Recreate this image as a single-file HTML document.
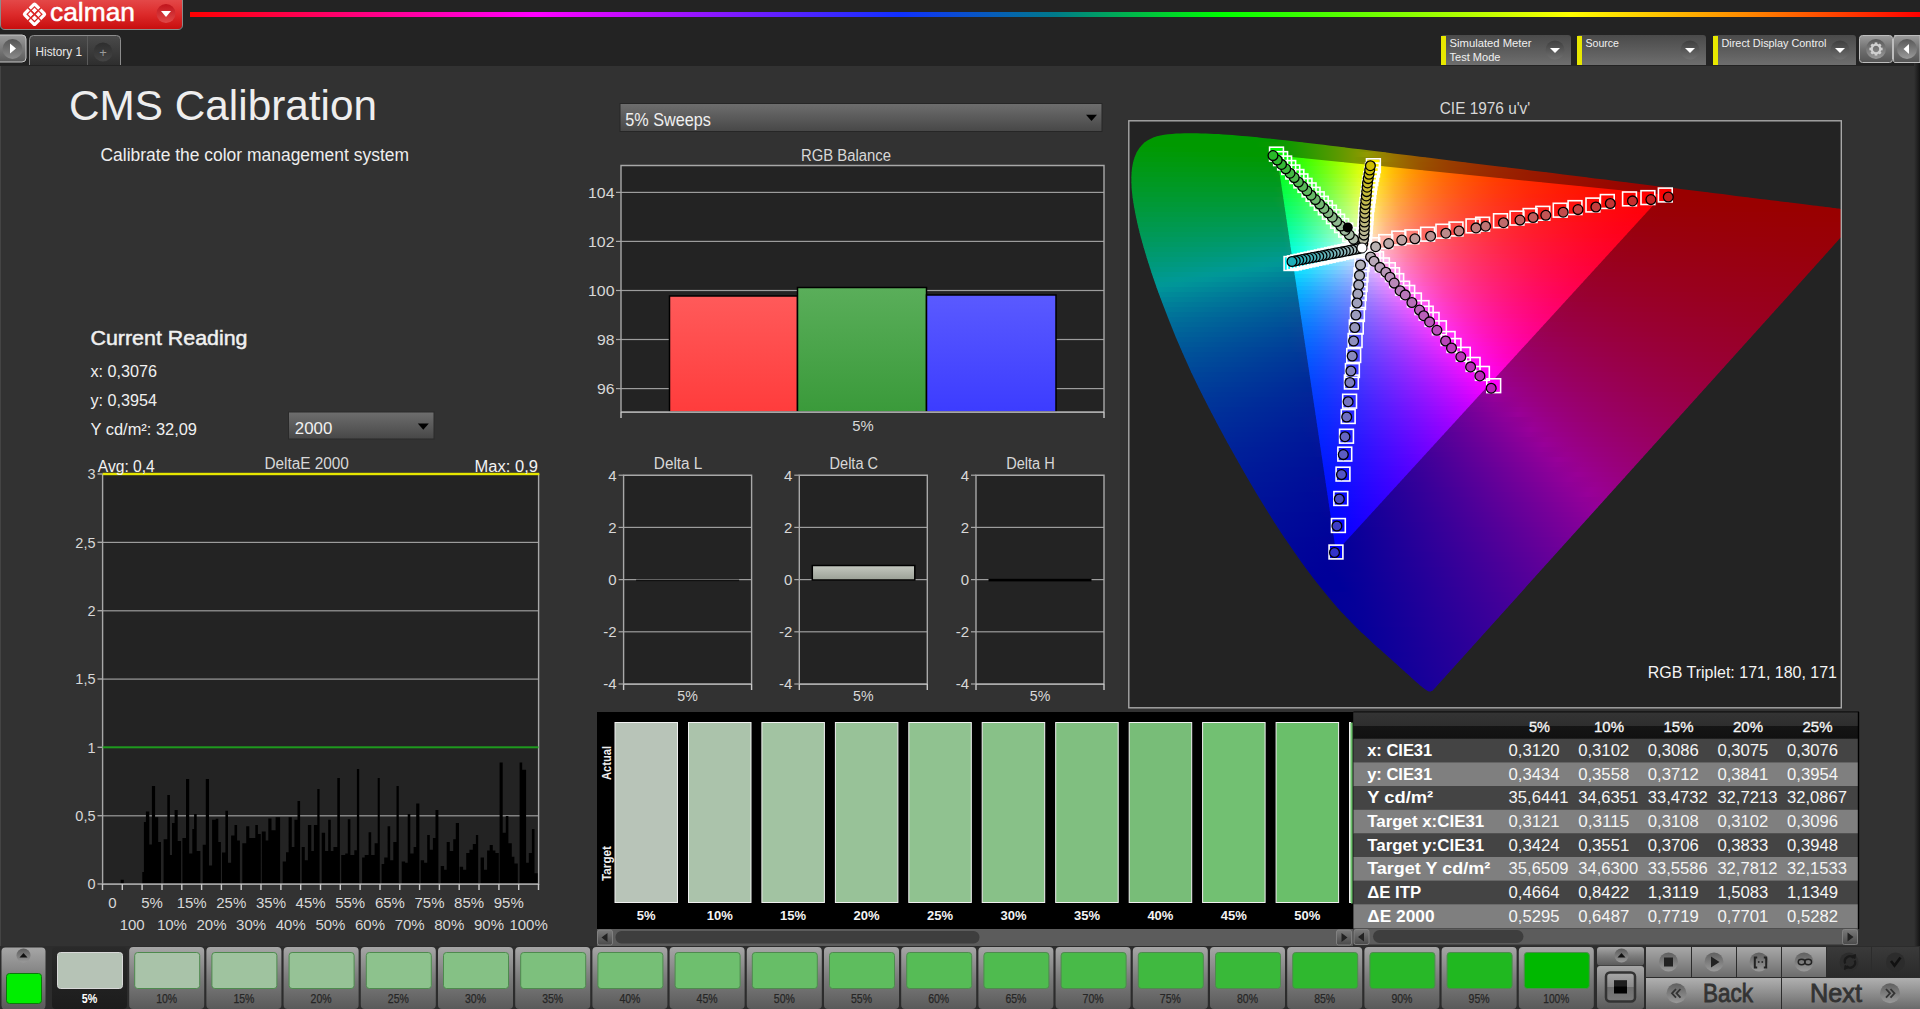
<!DOCTYPE html>
<html><head><meta charset="utf-8"><style>
html,body{margin:0;padding:0;background:#333;overflow:hidden;width:1920px;height:1009px}
svg{display:block;font-family:"Liberation Sans", sans-serif}
</style></head><body>
<svg width="1920" height="1009" viewBox="0 0 1920 1009">
<defs><linearGradient id="gEdge" x1="0" y1="0" x2="1" y2="0"><stop offset="0" stop-color="#323232"/><stop offset="1" stop-color="#141414"/></linearGradient><linearGradient id="gLogo" x1="0" y1="0" x2="0" y2="1"><stop offset="0" stop-color="#e44848"/><stop offset="0.5" stop-color="#dc2a2a"/><stop offset="1" stop-color="#c80e0e"/></linearGradient><linearGradient id="gLogoBtn" x1="0" y1="0" x2="0" y2="1"><stop offset="0" stop-color="#c0141c"/><stop offset="1" stop-color="#e04848"/></linearGradient><linearGradient id="gRain" x1="0" y1="0" x2="1" y2="0"><stop offset="0" stop-color="#ff0000"/><stop offset="0.2" stop-color="#ff00ff"/><stop offset="0.41" stop-color="#1030ff"/><stop offset="0.5" stop-color="#007a8a"/><stop offset="0.597" stop-color="#00ff00"/><stop offset="0.798" stop-color="#ffff00"/><stop offset="0.9" stop-color="#ff8800"/><stop offset="1" stop-color="#ff0000"/></linearGradient><linearGradient id="gPlayBtn" x1="0" y1="0" x2="0" y2="1"><stop offset="0" stop-color="#9a9a9a"/><stop offset="1" stop-color="#5a5a5a"/></linearGradient><linearGradient id="gPlayCirc" x1="0" y1="0" x2="0" y2="1"><stop offset="0" stop-color="#555"/><stop offset="1" stop-color="#8a8a8a"/></linearGradient><linearGradient id="gTab" x1="0" y1="0" x2="0" y2="1"><stop offset="0" stop-color="#4a4a4a"/><stop offset="1" stop-color="#2e2e2e"/></linearGradient><linearGradient id="gPlus" x1="0" y1="0" x2="0" y2="1"><stop offset="0" stop-color="#2e2e2e"/><stop offset="1" stop-color="#444"/></linearGradient><linearGradient id="gDD" x1="0" y1="0" x2="0" y2="1"><stop offset="0" stop-color="#4a4a4a"/><stop offset="1" stop-color="#6e6e6e"/></linearGradient><linearGradient id="gDDc" x1="0" y1="0" x2="0" y2="1"><stop offset="0" stop-color="#3e3e3e"/><stop offset="1" stop-color="#707070"/></linearGradient><linearGradient id="gGearBtn" x1="0" y1="0" x2="0" y2="1"><stop offset="0" stop-color="#9c9c9c"/><stop offset="0.5" stop-color="#707070"/><stop offset="1" stop-color="#555555"/></linearGradient><linearGradient id="gGearC" x1="0" y1="0" x2="0" y2="1"><stop offset="0" stop-color="#585858"/><stop offset="1" stop-color="#9a9a9a"/></linearGradient><linearGradient id="gDrop" x1="0" y1="0" x2="0" y2="1"><stop offset="0" stop-color="#6e6e6e"/><stop offset="1" stop-color="#474747"/></linearGradient><linearGradient id="gBarR" x1="0" y1="0" x2="0" y2="1"><stop offset="0" stop-color="#ff5a5a"/><stop offset="1" stop-color="#ff3c3c"/></linearGradient><linearGradient id="gBarG" x1="0" y1="0" x2="0" y2="1"><stop offset="0" stop-color="#5aae5a"/><stop offset="1" stop-color="#3a9a3a"/></linearGradient><linearGradient id="gBarB" x1="0" y1="0" x2="0" y2="1"><stop offset="0" stop-color="#5a5aff"/><stop offset="1" stop-color="#3c3cff"/></linearGradient><linearGradient id="gDC" x1="0" y1="0" x2="0" y2="1"><stop offset="0" stop-color="#c4c8c0"/><stop offset="1" stop-color="#9aa096"/></linearGradient><linearGradient id="gSB" x1="0" y1="0" x2="0" y2="1"><stop offset="0" stop-color="#7a7a7a"/><stop offset="1" stop-color="#4a4a4a"/></linearGradient><linearGradient id="gTH" x1="0" y1="0" x2="0" y2="1"><stop offset="0" stop-color="#343434"/><stop offset="0.5" stop-color="#2e2e2e"/><stop offset="0.52" stop-color="#151515"/><stop offset="1" stop-color="#111111"/></linearGradient><clipPath id="cLoc"><path d="M1432.3,690.9 L1432.3,690.9 L1432.2,690.9 L1432.1,690.8 L1432.1,690.8 L1432.0,690.9 L1431.9,690.9 L1431.8,691.0 L1431.7,691.0 L1431.6,691.0 L1431.5,691.0 L1431.4,691.0 L1431.3,691.0 L1431.2,691.1 L1431.1,691.2 L1431.1,691.3 L1431.0,691.4 L1430.9,691.5 L1430.7,691.5 L1430.6,691.5 L1430.4,691.5 L1430.2,691.5 L1430.0,691.5 L1429.7,691.4 L1429.5,691.4 L1429.3,691.4 L1429.1,691.4 L1428.8,691.4 L1428.5,691.3 L1428.2,691.2 L1427.8,691.0 L1427.4,690.8 L1426.8,690.5 L1426.2,690.1 L1425.4,689.6 L1424.6,689.0 L1423.8,688.3 L1422.8,687.6 L1421.9,686.8 L1420.8,685.9 L1419.6,684.9 L1418.3,683.8 L1416.9,682.6 L1415.3,681.2 L1413.7,679.8 L1412.0,678.2 L1410.2,676.6 L1408.3,674.8 L1406.2,672.9 L1404.1,670.9 L1401.8,668.9 L1399.3,666.7 L1396.7,664.3 L1393.8,661.8 L1390.8,659.1 L1387.6,656.3 L1384.3,653.3 L1380.8,650.1 L1377.1,646.9 L1373.3,643.4 L1369.2,639.6 L1364.9,635.6 L1360.4,631.4 L1355.7,626.8 L1350.8,621.8 L1345.7,616.5 L1340.4,611.0 L1334.9,604.8 L1328.8,597.6 L1322.1,589.3 L1314.9,580.2 L1307.3,570.2 L1299.5,559.4 L1291.2,547.6 L1282.6,534.9 L1273.8,521.4 L1264.8,507.1 L1255.6,491.9 L1246.1,475.8 L1236.6,459.1 L1227.2,442.2 L1217.9,424.9 L1208.6,407.2 L1199.6,389.4 L1191.1,371.9 L1183.3,354.6 L1175.9,337.4 L1169.1,320.5 L1162.9,304.5 L1157.2,289.2 L1152.1,274.5 L1147.6,260.5 L1143.7,247.6 L1140.4,235.7 L1137.7,224.7 L1135.5,214.6 L1133.8,205.3 L1132.5,196.8 L1131.7,189.2 L1131.4,182.3 L1131.4,175.9 L1131.8,170.0 L1132.6,164.8 L1133.7,160.0 L1135.2,155.7 L1137.0,151.8 L1139.1,148.4 L1141.5,145.4 L1144.2,142.8 L1147.0,140.7 L1150.2,138.9 L1153.5,137.5 L1156.9,136.3 L1160.5,135.4 L1164.3,134.7 L1168.2,134.3 L1172.1,133.9 L1176.1,133.6 L1180.3,133.4 L1184.5,133.3 L1188.7,133.3 L1192.8,133.3 L1197.0,133.3 L1201.2,133.4 L1205.5,133.5 L1209.8,133.7 L1214.1,133.9 L1218.5,134.1 L1223.0,134.4 L1227.6,134.7 L1232.3,135.0 L1237.0,135.4 L1241.9,135.9 L1246.9,136.3 L1252.0,136.8 L1257.1,137.3 L1262.5,137.9 L1267.9,138.4 L1273.5,139.0 L1279.2,139.7 L1285.1,140.3 L1291.1,141.0 L1297.2,141.7 L1303.6,142.5 L1310.1,143.2 L1316.7,144.0 L1323.6,144.8 L1330.6,145.7 L1337.7,146.5 L1345.1,147.4 L1352.7,148.4 L1360.4,149.3 L1368.3,150.3 L1376.5,151.3 L1384.8,152.3 L1393.3,153.4 L1402.0,154.4 L1410.9,155.5 L1420.0,156.7 L1429.3,157.8 L1438.7,159.0 L1448.4,160.2 L1458.2,161.4 L1468.2,162.7 L1478.3,163.9 L1488.6,165.2 L1499.0,166.5 L1509.6,167.8 L1520.2,169.1 L1530.9,170.4 L1541.7,171.8 L1552.6,173.1 L1563.3,174.5 L1573.9,175.8 L1584.3,177.1 L1594.7,178.4 L1605.0,179.6 L1615.4,180.9 L1625.7,182.2 L1635.8,183.5 L1645.6,184.7 L1655.2,185.9 L1664.5,187.0 L1673.5,188.1 L1682.3,189.2 L1690.9,190.3 L1699.1,191.3 L1707.1,192.3 L1714.8,193.2 L1722.2,194.1 L1729.2,195.0 L1736.0,195.9 L1742.5,196.7 L1748.7,197.4 L1754.6,198.2 L1760.3,198.9 L1765.7,199.5 L1770.9,200.2 L1775.9,200.8 L1780.6,201.4 L1785.2,202.0 L1789.7,202.5 L1794.0,203.0 L1798.2,203.6 L1802.2,204.1 L1806.0,204.5 L1809.7,205.0 L1813.2,205.4 L1816.5,205.8 L1819.7,206.2 L1822.7,206.6 L1825.6,207.0 L1828.2,207.3 L1830.7,207.6 L1832.9,207.9 L1835.0,208.1 L1837.1,208.4 L1839.0,208.6 L1840.7,208.9 L1842.4,209.1 L1844.0,209.3 L1845.5,209.4 L1846.8,209.6 L1848.1,209.8 L1849.2,209.9 L1850.2,210.0 L1851.1,210.1 L1851.9,210.2 L1852.7,210.3 L1853.5,210.4 L1854.2,210.5 L1854.9,210.6 L1855.5,210.7 L1856.1,210.8 L1856.7,210.8 L1857.2,210.9 L1857.8,211.0 L1858.3,211.0 L1858.8,211.1 L1859.4,211.2 L1860.0,211.2 L1860.8,211.3 L1861.6,211.5 L1862.5,211.6 L1863.1,211.6 L1863.5,211.7 L1863.8,211.7 L1863.9,211.7 L1864.0,211.7 Z"/></clipPath><clipPath id="cPlot"><rect x="1129" y="121" width="712.5" height="587"/></clipPath><clipPath id="cTri"><path d="M1277.0,155.5 L1663.0,194.5 L1336.0,552.0 Z"/></clipPath><linearGradient id="a0" gradientUnits="userSpaceOnUse" x1="1151.0" y1="0" x2="1257.6" y2="0"><stop offset="0" stop-color="#009900"/><stop offset="0.25" stop-color="#009900"/><stop offset="0.5" stop-color="#009900"/><stop offset="0.75" stop-color="#009900"/><stop offset="1" stop-color="#009900"/></linearGradient><linearGradient id="a1" gradientUnits="userSpaceOnUse" x1="1141.3" y1="0" x2="1303.3" y2="0"><stop offset="0" stop-color="#009900"/><stop offset="0.167" stop-color="#009900"/><stop offset="0.333" stop-color="#009900"/><stop offset="0.5" stop-color="#009900"/><stop offset="0.667" stop-color="#009900"/><stop offset="0.833" stop-color="#029900"/><stop offset="1" stop-color="#269900"/></linearGradient><linearGradient id="a2" gradientUnits="userSpaceOnUse" x1="1136.3" y1="0" x2="1345.1" y2="0"><stop offset="0" stop-color="#009901"/><stop offset="0.143" stop-color="#009900"/><stop offset="0.286" stop-color="#009900"/><stop offset="0.429" stop-color="#009900"/><stop offset="0.571" stop-color="#009900"/><stop offset="0.714" stop-color="#0d9900"/><stop offset="0.857" stop-color="#369900"/><stop offset="1" stop-color="#679900"/></linearGradient><linearGradient id="a3" gradientUnits="userSpaceOnUse" x1="1132.9" y1="0" x2="1385.9" y2="0"><stop offset="0" stop-color="#009906"/><stop offset="0.111" stop-color="#009904"/><stop offset="0.222" stop-color="#009901"/><stop offset="0.333" stop-color="#009900"/><stop offset="0.444" stop-color="#009900"/><stop offset="0.556" stop-color="#009900"/><stop offset="0.667" stop-color="#229900"/><stop offset="0.778" stop-color="#4d9900"/><stop offset="0.889" stop-color="#7e9900"/><stop offset="1" stop-color="#997f00"/></linearGradient><linearGradient id="a4" gradientUnits="userSpaceOnUse" x1="1130.7" y1="0" x2="1426.2" y2="0"><stop offset="0" stop-color="#00990a"/><stop offset="0.1" stop-color="#009908"/><stop offset="0.2" stop-color="#009906"/><stop offset="0.3" stop-color="#009903"/><stop offset="0.4" stop-color="#009900"/><stop offset="0.5" stop-color="#029900"/><stop offset="0.6" stop-color="#2b9900"/><stop offset="0.7" stop-color="#5a9900"/><stop offset="0.8" stop-color="#919900"/><stop offset="0.9" stop-color="#996f00"/><stop offset="1" stop-color="#995000"/></linearGradient><linearGradient id="a5" gradientUnits="userSpaceOnUse" x1="1129.2" y1="0" x2="1466.5" y2="0"><stop offset="0" stop-color="#00990e"/><stop offset="0.0833" stop-color="#00990c"/><stop offset="0.167" stop-color="#00990b"/><stop offset="0.25" stop-color="#009908"/><stop offset="0.333" stop-color="#009906"/><stop offset="0.417" stop-color="#009903"/><stop offset="0.5" stop-color="#1b9900"/><stop offset="0.583" stop-color="#469900"/><stop offset="0.667" stop-color="#789900"/><stop offset="0.75" stop-color="#998300"/><stop offset="0.833" stop-color="#995e00"/><stop offset="0.917" stop-color="#994600"/><stop offset="1" stop-color="#993500"/></linearGradient><linearGradient id="a6" gradientUnits="userSpaceOnUse" x1="1129.0" y1="0" x2="1506.9" y2="0"><stop offset="0" stop-color="#009912"/><stop offset="0.0769" stop-color="#009911"/><stop offset="0.154" stop-color="#00990f"/><stop offset="0.231" stop-color="#00990d"/><stop offset="0.308" stop-color="#00990b"/><stop offset="0.385" stop-color="#009909"/><stop offset="0.462" stop-color="#239906"/><stop offset="0.538" stop-color="#519902"/><stop offset="0.615" stop-color="#879900"/><stop offset="0.692" stop-color="#997500"/><stop offset="0.769" stop-color="#995400"/><stop offset="0.846" stop-color="#993e00"/><stop offset="0.923" stop-color="#992f00"/><stop offset="1" stop-color="#992300"/></linearGradient><linearGradient id="a7" gradientUnits="userSpaceOnUse" x1="1129.0" y1="0" x2="1547.1" y2="0"><stop offset="0" stop-color="#009917"/><stop offset="0.0714" stop-color="#009915"/><stop offset="0.143" stop-color="#009914"/><stop offset="0.214" stop-color="#009912"/><stop offset="0.286" stop-color="#009910"/><stop offset="0.357" stop-color="#00990e"/><stop offset="0.429" stop-color="#29990b"/><stop offset="0.5" stop-color="#5b9908"/><stop offset="0.571" stop-color="#959905"/><stop offset="0.643" stop-color="#996a00"/><stop offset="0.714" stop-color="#994c00"/><stop offset="0.786" stop-color="#993800"/><stop offset="0.857" stop-color="#992a00"/><stop offset="0.929" stop-color="#991f00"/><stop offset="1" stop-color="#991700"/></linearGradient><linearGradient id="a8" gradientUnits="userSpaceOnUse" x1="1129.0" y1="0" x2="1587.4" y2="0"><stop offset="0" stop-color="#00991b"/><stop offset="0.0625" stop-color="#00991a"/><stop offset="0.125" stop-color="#009919"/><stop offset="0.188" stop-color="#009917"/><stop offset="0.25" stop-color="#009916"/><stop offset="0.312" stop-color="#009914"/><stop offset="0.375" stop-color="#1e9912"/><stop offset="0.438" stop-color="#4c9910"/><stop offset="0.5" stop-color="#82990d"/><stop offset="0.562" stop-color="#997908"/><stop offset="0.625" stop-color="#995603"/><stop offset="0.688" stop-color="#993f01"/><stop offset="0.75" stop-color="#992f00"/><stop offset="0.812" stop-color="#992400"/><stop offset="0.875" stop-color="#991a00"/><stop offset="0.938" stop-color="#991300"/><stop offset="1" stop-color="#990d00"/></linearGradient><linearGradient id="a9" gradientUnits="userSpaceOnUse" x1="1129.0" y1="0" x2="1627.7" y2="0"><stop offset="0" stop-color="#00991f"/><stop offset="0.0588" stop-color="#00991f"/><stop offset="0.118" stop-color="#00991e"/><stop offset="0.176" stop-color="#00991d"/><stop offset="0.235" stop-color="#00991b"/><stop offset="0.294" stop-color="#00991a"/><stop offset="0.353" stop-color="#239918"/><stop offset="0.412" stop-color="#549916"/><stop offset="0.471" stop-color="#8e9914"/><stop offset="0.529" stop-color="#996f0d"/><stop offset="0.588" stop-color="#994f07"/><stop offset="0.647" stop-color="#993a04"/><stop offset="0.706" stop-color="#992b01"/><stop offset="0.765" stop-color="#992000"/><stop offset="0.824" stop-color="#991700"/><stop offset="0.882" stop-color="#991000"/><stop offset="0.941" stop-color="#990b00"/><stop offset="1" stop-color="#990600"/></linearGradient><linearGradient id="a10" gradientUnits="userSpaceOnUse" x1="1129.0" y1="0" x2="1668.1" y2="0"><stop offset="0" stop-color="#009924"/><stop offset="0.0556" stop-color="#009923"/><stop offset="0.111" stop-color="#009923"/><stop offset="0.167" stop-color="#009922"/><stop offset="0.222" stop-color="#009921"/><stop offset="0.278" stop-color="#009920"/><stop offset="0.333" stop-color="#28991f"/><stop offset="0.389" stop-color="#5c991d"/><stop offset="0.444" stop-color="#99981c"/><stop offset="0.5" stop-color="#996611"/><stop offset="0.556" stop-color="#99490b"/><stop offset="0.611" stop-color="#993507"/><stop offset="0.667" stop-color="#992704"/><stop offset="0.722" stop-color="#991c02"/><stop offset="0.778" stop-color="#991400"/><stop offset="0.833" stop-color="#990e00"/><stop offset="0.889" stop-color="#990800"/><stop offset="0.944" stop-color="#990400"/><stop offset="1" stop-color="#990000"/></linearGradient><linearGradient id="a11" gradientUnits="userSpaceOnUse" x1="1129.0" y1="0" x2="1708.5" y2="0"><stop offset="0" stop-color="#009928"/><stop offset="0.05" stop-color="#009928"/><stop offset="0.1" stop-color="#009928"/><stop offset="0.15" stop-color="#009927"/><stop offset="0.2" stop-color="#009927"/><stop offset="0.25" stop-color="#009926"/><stop offset="0.3" stop-color="#1f9926"/><stop offset="0.35" stop-color="#4f9925"/><stop offset="0.4" stop-color="#899924"/><stop offset="0.45" stop-color="#99711a"/><stop offset="0.5" stop-color="#995012"/><stop offset="0.55" stop-color="#993a0c"/><stop offset="0.6" stop-color="#992b08"/><stop offset="0.65" stop-color="#992006"/><stop offset="0.7" stop-color="#991703"/><stop offset="0.75" stop-color="#991002"/><stop offset="0.8" stop-color="#990a00"/><stop offset="0.85" stop-color="#990600"/><stop offset="0.9" stop-color="#990200"/><stop offset="0.95" stop-color="#990000"/><stop offset="1" stop-color="#990000"/></linearGradient><linearGradient id="a12" gradientUnits="userSpaceOnUse" x1="1129.0" y1="0" x2="1748.8" y2="0"><stop offset="0" stop-color="#00992d"/><stop offset="0.0476" stop-color="#00992d"/><stop offset="0.0952" stop-color="#00992d"/><stop offset="0.143" stop-color="#00992d"/><stop offset="0.19" stop-color="#00992d"/><stop offset="0.238" stop-color="#00992d"/><stop offset="0.286" stop-color="#23992c"/><stop offset="0.333" stop-color="#56992c"/><stop offset="0.381" stop-color="#93992c"/><stop offset="0.429" stop-color="#99691e"/><stop offset="0.476" stop-color="#994a15"/><stop offset="0.524" stop-color="#99360f"/><stop offset="0.571" stop-color="#99270b"/><stop offset="0.619" stop-color="#991d08"/><stop offset="0.667" stop-color="#991405"/><stop offset="0.714" stop-color="#990e04"/><stop offset="0.762" stop-color="#990802"/><stop offset="0.81" stop-color="#990401"/><stop offset="0.857" stop-color="#990000"/><stop offset="0.905" stop-color="#990000"/><stop offset="0.952" stop-color="#990000"/><stop offset="1" stop-color="#990000"/></linearGradient><linearGradient id="a13" gradientUnits="userSpaceOnUse" x1="1129.0" y1="0" x2="1789.2" y2="0"><stop offset="0" stop-color="#009932"/><stop offset="0.0435" stop-color="#009932"/><stop offset="0.087" stop-color="#009932"/><stop offset="0.13" stop-color="#009932"/><stop offset="0.174" stop-color="#009933"/><stop offset="0.217" stop-color="#009933"/><stop offset="0.261" stop-color="#1b9933"/><stop offset="0.304" stop-color="#4b9934"/><stop offset="0.348" stop-color="#869934"/><stop offset="0.391" stop-color="#997328"/><stop offset="0.435" stop-color="#99501c"/><stop offset="0.478" stop-color="#993a15"/><stop offset="0.522" stop-color="#992b10"/><stop offset="0.565" stop-color="#991f0c"/><stop offset="0.609" stop-color="#991709"/><stop offset="0.652" stop-color="#991007"/><stop offset="0.696" stop-color="#990a05"/><stop offset="0.739" stop-color="#990503"/><stop offset="0.783" stop-color="#990102"/><stop offset="0.826" stop-color="#990001"/><stop offset="0.87" stop-color="#990000"/><stop offset="0.913" stop-color="#990000"/><stop offset="0.957" stop-color="#990000"/><stop offset="1" stop-color="#990000"/></linearGradient><linearGradient id="a14" gradientUnits="userSpaceOnUse" x1="1129.3" y1="0" x2="1829.4" y2="0"><stop offset="0" stop-color="#009937"/><stop offset="0.0417" stop-color="#009937"/><stop offset="0.0833" stop-color="#009938"/><stop offset="0.125" stop-color="#009938"/><stop offset="0.167" stop-color="#009939"/><stop offset="0.208" stop-color="#00993a"/><stop offset="0.25" stop-color="#1f993b"/><stop offset="0.292" stop-color="#52993c"/><stop offset="0.333" stop-color="#90993d"/><stop offset="0.375" stop-color="#996b2c"/><stop offset="0.417" stop-color="#994b20"/><stop offset="0.458" stop-color="#993618"/><stop offset="0.5" stop-color="#992712"/><stop offset="0.542" stop-color="#991c0e"/><stop offset="0.583" stop-color="#99140b"/><stop offset="0.625" stop-color="#990d09"/><stop offset="0.667" stop-color="#990806"/><stop offset="0.708" stop-color="#990405"/><stop offset="0.75" stop-color="#990003"/><stop offset="0.792" stop-color="#990002"/><stop offset="0.833" stop-color="#990001"/><stop offset="0.875" stop-color="#990000"/><stop offset="0.917" stop-color="#990000"/><stop offset="0.958" stop-color="#990000"/><stop offset="1" stop-color="#990000"/></linearGradient><linearGradient id="a15" gradientUnits="userSpaceOnUse" x1="1130.1" y1="0" x2="1841.5" y2="0"><stop offset="0" stop-color="#00993b"/><stop offset="0.0417" stop-color="#00993c"/><stop offset="0.0833" stop-color="#00993d"/><stop offset="0.125" stop-color="#00993e"/><stop offset="0.167" stop-color="#00993f"/><stop offset="0.208" stop-color="#009941"/><stop offset="0.25" stop-color="#249942"/><stop offset="0.292" stop-color="#5a9944"/><stop offset="0.333" stop-color="#999746"/><stop offset="0.375" stop-color="#996330"/><stop offset="0.417" stop-color="#994523"/><stop offset="0.458" stop-color="#99311b"/><stop offset="0.5" stop-color="#992415"/><stop offset="0.542" stop-color="#991910"/><stop offset="0.583" stop-color="#99110d"/><stop offset="0.625" stop-color="#990b0a"/><stop offset="0.667" stop-color="#990608"/><stop offset="0.708" stop-color="#990206"/><stop offset="0.75" stop-color="#990005"/><stop offset="0.792" stop-color="#990003"/><stop offset="0.833" stop-color="#990002"/><stop offset="0.875" stop-color="#990001"/><stop offset="0.917" stop-color="#990000"/><stop offset="0.958" stop-color="#990000"/><stop offset="1" stop-color="#990000"/></linearGradient><linearGradient id="a16" gradientUnits="userSpaceOnUse" x1="1131.0" y1="0" x2="1841.5" y2="0"><stop offset="0" stop-color="#009940"/><stop offset="0.0417" stop-color="#009942"/><stop offset="0.0833" stop-color="#009943"/><stop offset="0.125" stop-color="#009944"/><stop offset="0.167" stop-color="#009946"/><stop offset="0.208" stop-color="#009948"/><stop offset="0.25" stop-color="#24994a"/><stop offset="0.292" stop-color="#5b994d"/><stop offset="0.333" stop-color="#99944e"/><stop offset="0.375" stop-color="#996136"/><stop offset="0.417" stop-color="#994428"/><stop offset="0.458" stop-color="#99301e"/><stop offset="0.5" stop-color="#992318"/><stop offset="0.542" stop-color="#991913"/><stop offset="0.583" stop-color="#99110f"/><stop offset="0.625" stop-color="#990a0d"/><stop offset="0.667" stop-color="#99050a"/><stop offset="0.708" stop-color="#990108"/><stop offset="0.75" stop-color="#990006"/><stop offset="0.792" stop-color="#990005"/><stop offset="0.833" stop-color="#990004"/><stop offset="0.875" stop-color="#990003"/><stop offset="0.917" stop-color="#990002"/><stop offset="0.958" stop-color="#990001"/><stop offset="1" stop-color="#990000"/></linearGradient><linearGradient id="a17" gradientUnits="userSpaceOnUse" x1="1132.0" y1="0" x2="1841.5" y2="0"><stop offset="0" stop-color="#009946"/><stop offset="0.0417" stop-color="#009947"/><stop offset="0.0833" stop-color="#009949"/><stop offset="0.125" stop-color="#00994b"/><stop offset="0.167" stop-color="#00994d"/><stop offset="0.208" stop-color="#00994f"/><stop offset="0.25" stop-color="#259952"/><stop offset="0.292" stop-color="#5d9956"/><stop offset="0.333" stop-color="#999156"/><stop offset="0.375" stop-color="#995f3b"/><stop offset="0.417" stop-color="#99422c"/><stop offset="0.458" stop-color="#992f22"/><stop offset="0.5" stop-color="#99221b"/><stop offset="0.542" stop-color="#991816"/><stop offset="0.583" stop-color="#991012"/><stop offset="0.625" stop-color="#990a0f"/><stop offset="0.667" stop-color="#99050c"/><stop offset="0.708" stop-color="#99010a"/><stop offset="0.75" stop-color="#990008"/><stop offset="0.792" stop-color="#990007"/><stop offset="0.833" stop-color="#990005"/><stop offset="0.875" stop-color="#990004"/><stop offset="0.917" stop-color="#990003"/><stop offset="0.958" stop-color="#990002"/><stop offset="1" stop-color="#990001"/></linearGradient><linearGradient id="a18" gradientUnits="userSpaceOnUse" x1="1133.1" y1="0" x2="1841.5" y2="0"><stop offset="0" stop-color="#00994b"/><stop offset="0.0417" stop-color="#00994d"/><stop offset="0.0833" stop-color="#00994f"/><stop offset="0.125" stop-color="#009951"/><stop offset="0.167" stop-color="#009954"/><stop offset="0.208" stop-color="#009957"/><stop offset="0.25" stop-color="#26995a"/><stop offset="0.292" stop-color="#5f995f"/><stop offset="0.333" stop-color="#998f5e"/><stop offset="0.375" stop-color="#995d41"/><stop offset="0.417" stop-color="#994131"/><stop offset="0.458" stop-color="#992e26"/><stop offset="0.5" stop-color="#99201f"/><stop offset="0.542" stop-color="#991719"/><stop offset="0.583" stop-color="#990f15"/><stop offset="0.625" stop-color="#990911"/><stop offset="0.667" stop-color="#99040e"/><stop offset="0.708" stop-color="#99000c"/><stop offset="0.75" stop-color="#99000a"/><stop offset="0.792" stop-color="#990008"/><stop offset="0.833" stop-color="#990007"/><stop offset="0.875" stop-color="#990006"/><stop offset="0.917" stop-color="#990004"/><stop offset="0.958" stop-color="#990003"/><stop offset="1" stop-color="#990003"/></linearGradient><linearGradient id="a19" gradientUnits="userSpaceOnUse" x1="1134.2" y1="0" x2="1841.5" y2="0"><stop offset="0" stop-color="#009950"/><stop offset="0.0417" stop-color="#009952"/><stop offset="0.0833" stop-color="#009955"/><stop offset="0.125" stop-color="#009958"/><stop offset="0.167" stop-color="#00995b"/><stop offset="0.208" stop-color="#00995f"/><stop offset="0.25" stop-color="#279963"/><stop offset="0.292" stop-color="#619968"/><stop offset="0.333" stop-color="#998c65"/><stop offset="0.375" stop-color="#995b47"/><stop offset="0.417" stop-color="#993f35"/><stop offset="0.458" stop-color="#992c2a"/><stop offset="0.5" stop-color="#991f22"/><stop offset="0.542" stop-color="#99161c"/><stop offset="0.583" stop-color="#990e17"/><stop offset="0.625" stop-color="#990813"/><stop offset="0.667" stop-color="#990310"/><stop offset="0.708" stop-color="#99000e"/><stop offset="0.75" stop-color="#99000c"/><stop offset="0.792" stop-color="#99000a"/><stop offset="0.833" stop-color="#990008"/><stop offset="0.875" stop-color="#990007"/><stop offset="0.917" stop-color="#990006"/><stop offset="0.958" stop-color="#990005"/><stop offset="1" stop-color="#990004"/></linearGradient><linearGradient id="a20" gradientUnits="userSpaceOnUse" x1="1135.5" y1="0" x2="1841.5" y2="0"><stop offset="0" stop-color="#009956"/><stop offset="0.0417" stop-color="#009958"/><stop offset="0.0833" stop-color="#00995b"/><stop offset="0.125" stop-color="#00995e"/><stop offset="0.167" stop-color="#009962"/><stop offset="0.208" stop-color="#009967"/><stop offset="0.25" stop-color="#28996c"/><stop offset="0.292" stop-color="#639972"/><stop offset="0.333" stop-color="#99896d"/><stop offset="0.375" stop-color="#99594d"/><stop offset="0.417" stop-color="#993d3a"/><stop offset="0.458" stop-color="#992b2e"/><stop offset="0.5" stop-color="#991e25"/><stop offset="0.542" stop-color="#99151f"/><stop offset="0.583" stop-color="#990d1a"/><stop offset="0.625" stop-color="#990716"/><stop offset="0.667" stop-color="#990312"/><stop offset="0.708" stop-color="#990010"/><stop offset="0.75" stop-color="#99000d"/><stop offset="0.792" stop-color="#99000c"/><stop offset="0.833" stop-color="#99000a"/><stop offset="0.875" stop-color="#990008"/><stop offset="0.917" stop-color="#990007"/><stop offset="0.958" stop-color="#990006"/><stop offset="1" stop-color="#990005"/></linearGradient><linearGradient id="a21" gradientUnits="userSpaceOnUse" x1="1136.8" y1="0" x2="1841.5" y2="0"><stop offset="0" stop-color="#00995b"/><stop offset="0.0417" stop-color="#00995e"/><stop offset="0.0833" stop-color="#009962"/><stop offset="0.125" stop-color="#009965"/><stop offset="0.167" stop-color="#00996a"/><stop offset="0.208" stop-color="#00996f"/><stop offset="0.25" stop-color="#299975"/><stop offset="0.292" stop-color="#65997d"/><stop offset="0.333" stop-color="#998675"/><stop offset="0.375" stop-color="#995753"/><stop offset="0.417" stop-color="#993c3f"/><stop offset="0.458" stop-color="#992a32"/><stop offset="0.5" stop-color="#991d28"/><stop offset="0.542" stop-color="#991421"/><stop offset="0.583" stop-color="#990c1c"/><stop offset="0.625" stop-color="#990718"/><stop offset="0.667" stop-color="#990214"/><stop offset="0.708" stop-color="#990012"/><stop offset="0.75" stop-color="#99000f"/><stop offset="0.792" stop-color="#99000d"/><stop offset="0.833" stop-color="#99000b"/><stop offset="0.875" stop-color="#99000a"/><stop offset="0.917" stop-color="#990008"/><stop offset="0.958" stop-color="#990007"/><stop offset="1" stop-color="#990006"/></linearGradient><linearGradient id="a22" gradientUnits="userSpaceOnUse" x1="1138.1" y1="0" x2="1840.7" y2="0"><stop offset="0" stop-color="#009961"/><stop offset="0.0417" stop-color="#009964"/><stop offset="0.0833" stop-color="#009968"/><stop offset="0.125" stop-color="#00996d"/><stop offset="0.167" stop-color="#009972"/><stop offset="0.208" stop-color="#009978"/><stop offset="0.25" stop-color="#2a997f"/><stop offset="0.292" stop-color="#679987"/><stop offset="0.333" stop-color="#99837d"/><stop offset="0.375" stop-color="#995559"/><stop offset="0.417" stop-color="#993a43"/><stop offset="0.458" stop-color="#992936"/><stop offset="0.5" stop-color="#991c2c"/><stop offset="0.542" stop-color="#991324"/><stop offset="0.583" stop-color="#990c1f"/><stop offset="0.625" stop-color="#99061a"/><stop offset="0.667" stop-color="#990117"/><stop offset="0.708" stop-color="#990014"/><stop offset="0.75" stop-color="#990011"/><stop offset="0.792" stop-color="#99000f"/><stop offset="0.833" stop-color="#99000d"/><stop offset="0.875" stop-color="#99000b"/><stop offset="0.917" stop-color="#99000a"/><stop offset="0.958" stop-color="#990008"/><stop offset="1" stop-color="#990007"/></linearGradient><linearGradient id="a23" gradientUnits="userSpaceOnUse" x1="1139.5" y1="0" x2="1836.2" y2="0"><stop offset="0" stop-color="#009967"/><stop offset="0.0417" stop-color="#00996b"/><stop offset="0.0833" stop-color="#00996f"/><stop offset="0.125" stop-color="#009974"/><stop offset="0.167" stop-color="#00997a"/><stop offset="0.208" stop-color="#009980"/><stop offset="0.25" stop-color="#299988"/><stop offset="0.292" stop-color="#669992"/><stop offset="0.333" stop-color="#998387"/><stop offset="0.375" stop-color="#995560"/><stop offset="0.417" stop-color="#993a49"/><stop offset="0.458" stop-color="#99283a"/><stop offset="0.5" stop-color="#991c30"/><stop offset="0.542" stop-color="#991328"/><stop offset="0.583" stop-color="#990b22"/><stop offset="0.625" stop-color="#99061d"/><stop offset="0.667" stop-color="#990119"/><stop offset="0.708" stop-color="#990016"/><stop offset="0.75" stop-color="#990013"/><stop offset="0.792" stop-color="#990011"/><stop offset="0.833" stop-color="#99000f"/><stop offset="0.875" stop-color="#99000d"/><stop offset="0.917" stop-color="#99000b"/><stop offset="0.958" stop-color="#99000a"/><stop offset="1" stop-color="#990009"/></linearGradient><linearGradient id="a24" gradientUnits="userSpaceOnUse" x1="1141.0" y1="0" x2="1831.7" y2="0"><stop offset="0" stop-color="#00996d"/><stop offset="0.0417" stop-color="#009971"/><stop offset="0.0833" stop-color="#009976"/><stop offset="0.125" stop-color="#00997b"/><stop offset="0.167" stop-color="#009982"/><stop offset="0.208" stop-color="#009989"/><stop offset="0.25" stop-color="#289992"/><stop offset="0.292" stop-color="#639599"/><stop offset="0.333" stop-color="#998392"/><stop offset="0.375" stop-color="#995468"/><stop offset="0.417" stop-color="#99394f"/><stop offset="0.458" stop-color="#99283f"/><stop offset="0.5" stop-color="#991b34"/><stop offset="0.542" stop-color="#99122b"/><stop offset="0.583" stop-color="#990b25"/><stop offset="0.625" stop-color="#990520"/><stop offset="0.667" stop-color="#99011c"/><stop offset="0.708" stop-color="#990018"/><stop offset="0.75" stop-color="#990015"/><stop offset="0.792" stop-color="#990013"/><stop offset="0.833" stop-color="#990011"/><stop offset="0.875" stop-color="#99000f"/><stop offset="0.917" stop-color="#99000d"/><stop offset="0.958" stop-color="#99000b"/><stop offset="1" stop-color="#99000a"/></linearGradient><linearGradient id="a25" gradientUnits="userSpaceOnUse" x1="1142.6" y1="0" x2="1827.2" y2="0"><stop offset="0" stop-color="#009973"/><stop offset="0.0435" stop-color="#009978"/><stop offset="0.087" stop-color="#00997e"/><stop offset="0.13" stop-color="#009984"/><stop offset="0.174" stop-color="#00998c"/><stop offset="0.217" stop-color="#009994"/><stop offset="0.261" stop-color="#349399"/><stop offset="0.304" stop-color="#6d8899"/><stop offset="0.348" stop-color="#996f8a"/><stop offset="0.391" stop-color="#994864"/><stop offset="0.435" stop-color="#99314d"/><stop offset="0.478" stop-color="#99213e"/><stop offset="0.522" stop-color="#991633"/><stop offset="0.565" stop-color="#990e2b"/><stop offset="0.609" stop-color="#990725"/><stop offset="0.652" stop-color="#990220"/><stop offset="0.696" stop-color="#99001b"/><stop offset="0.739" stop-color="#990018"/><stop offset="0.783" stop-color="#990015"/><stop offset="0.826" stop-color="#990013"/><stop offset="0.87" stop-color="#990011"/><stop offset="0.913" stop-color="#99000f"/><stop offset="0.957" stop-color="#99000d"/><stop offset="1" stop-color="#99000c"/></linearGradient><linearGradient id="a26" gradientUnits="userSpaceOnUse" x1="1144.1" y1="0" x2="1822.7" y2="0"><stop offset="0" stop-color="#00997a"/><stop offset="0.0435" stop-color="#00997f"/><stop offset="0.087" stop-color="#009985"/><stop offset="0.13" stop-color="#00998c"/><stop offset="0.174" stop-color="#009994"/><stop offset="0.217" stop-color="#009499"/><stop offset="0.261" stop-color="#308a99"/><stop offset="0.304" stop-color="#667f99"/><stop offset="0.348" stop-color="#996f93"/><stop offset="0.391" stop-color="#99476b"/><stop offset="0.435" stop-color="#993052"/><stop offset="0.478" stop-color="#992142"/><stop offset="0.522" stop-color="#991637"/><stop offset="0.565" stop-color="#990d2e"/><stop offset="0.609" stop-color="#990728"/><stop offset="0.652" stop-color="#990222"/><stop offset="0.696" stop-color="#99001e"/><stop offset="0.739" stop-color="#99001a"/><stop offset="0.783" stop-color="#990017"/><stop offset="0.826" stop-color="#990015"/><stop offset="0.87" stop-color="#990012"/><stop offset="0.913" stop-color="#990010"/><stop offset="0.957" stop-color="#99000f"/><stop offset="1" stop-color="#99000d"/></linearGradient><linearGradient id="a27" gradientUnits="userSpaceOnUse" x1="1145.7" y1="0" x2="1818.2" y2="0"><stop offset="0" stop-color="#009980"/><stop offset="0.0435" stop-color="#009986"/><stop offset="0.087" stop-color="#00998d"/><stop offset="0.13" stop-color="#009994"/><stop offset="0.174" stop-color="#009599"/><stop offset="0.217" stop-color="#008b99"/><stop offset="0.261" stop-color="#2d8199"/><stop offset="0.304" stop-color="#5f7699"/><stop offset="0.348" stop-color="#956b99"/><stop offset="0.391" stop-color="#994772"/><stop offset="0.435" stop-color="#993058"/><stop offset="0.478" stop-color="#992047"/><stop offset="0.522" stop-color="#99153b"/><stop offset="0.565" stop-color="#990d32"/><stop offset="0.609" stop-color="#99072b"/><stop offset="0.652" stop-color="#990125"/><stop offset="0.696" stop-color="#990020"/><stop offset="0.739" stop-color="#99001d"/><stop offset="0.783" stop-color="#990019"/><stop offset="0.826" stop-color="#990017"/><stop offset="0.87" stop-color="#990014"/><stop offset="0.913" stop-color="#990012"/><stop offset="0.957" stop-color="#990010"/><stop offset="1" stop-color="#99000f"/></linearGradient><linearGradient id="a28" gradientUnits="userSpaceOnUse" x1="1147.3" y1="0" x2="1813.7" y2="0"><stop offset="0" stop-color="#009987"/><stop offset="0.0435" stop-color="#00998e"/><stop offset="0.087" stop-color="#009995"/><stop offset="0.13" stop-color="#009599"/><stop offset="0.174" stop-color="#008c99"/><stop offset="0.217" stop-color="#008399"/><stop offset="0.261" stop-color="#2a7999"/><stop offset="0.304" stop-color="#596f99"/><stop offset="0.348" stop-color="#8c6499"/><stop offset="0.391" stop-color="#994679"/><stop offset="0.435" stop-color="#992f5e"/><stop offset="0.478" stop-color="#99204c"/><stop offset="0.522" stop-color="#99153f"/><stop offset="0.565" stop-color="#990d35"/><stop offset="0.609" stop-color="#99062e"/><stop offset="0.652" stop-color="#990128"/><stop offset="0.696" stop-color="#990023"/><stop offset="0.739" stop-color="#99001f"/><stop offset="0.783" stop-color="#99001b"/><stop offset="0.826" stop-color="#990019"/><stop offset="0.87" stop-color="#990016"/><stop offset="0.913" stop-color="#990014"/><stop offset="0.957" stop-color="#990012"/><stop offset="1" stop-color="#990010"/></linearGradient><linearGradient id="a29" gradientUnits="userSpaceOnUse" x1="1149.0" y1="0" x2="1809.2" y2="0"><stop offset="0" stop-color="#00998e"/><stop offset="0.0435" stop-color="#009995"/><stop offset="0.087" stop-color="#009599"/><stop offset="0.13" stop-color="#008d99"/><stop offset="0.174" stop-color="#008599"/><stop offset="0.217" stop-color="#007c99"/><stop offset="0.261" stop-color="#277299"/><stop offset="0.304" stop-color="#546899"/><stop offset="0.348" stop-color="#845e99"/><stop offset="0.391" stop-color="#994681"/><stop offset="0.435" stop-color="#992f64"/><stop offset="0.478" stop-color="#991f51"/><stop offset="0.522" stop-color="#991443"/><stop offset="0.565" stop-color="#990c39"/><stop offset="0.609" stop-color="#990631"/><stop offset="0.652" stop-color="#99012b"/><stop offset="0.696" stop-color="#990026"/><stop offset="0.739" stop-color="#990021"/><stop offset="0.783" stop-color="#99001e"/><stop offset="0.826" stop-color="#99001b"/><stop offset="0.87" stop-color="#990018"/><stop offset="0.913" stop-color="#990016"/><stop offset="0.957" stop-color="#990014"/><stop offset="1" stop-color="#990012"/></linearGradient><linearGradient id="a30" gradientUnits="userSpaceOnUse" x1="1150.8" y1="0" x2="1804.7" y2="0"><stop offset="0" stop-color="#009995"/><stop offset="0.0455" stop-color="#009599"/><stop offset="0.0909" stop-color="#008d99"/><stop offset="0.136" stop-color="#008599"/><stop offset="0.182" stop-color="#007c99"/><stop offset="0.227" stop-color="#057399"/><stop offset="0.273" stop-color="#306999"/><stop offset="0.318" stop-color="#5d5f99"/><stop offset="0.364" stop-color="#8d5499"/><stop offset="0.409" stop-color="#993a7a"/><stop offset="0.455" stop-color="#992660"/><stop offset="0.5" stop-color="#99194e"/><stop offset="0.545" stop-color="#990f41"/><stop offset="0.591" stop-color="#990837"/><stop offset="0.636" stop-color="#990230"/><stop offset="0.682" stop-color="#99002a"/><stop offset="0.727" stop-color="#990025"/><stop offset="0.773" stop-color="#990021"/><stop offset="0.818" stop-color="#99001d"/><stop offset="0.864" stop-color="#99001a"/><stop offset="0.909" stop-color="#990018"/><stop offset="0.955" stop-color="#990015"/><stop offset="1" stop-color="#990013"/></linearGradient><linearGradient id="a31" gradientUnits="userSpaceOnUse" x1="1152.5" y1="0" x2="1800.2" y2="0"><stop offset="0" stop-color="#009599"/><stop offset="0.0455" stop-color="#008e99"/><stop offset="0.0909" stop-color="#008699"/><stop offset="0.136" stop-color="#007e99"/><stop offset="0.182" stop-color="#007599"/><stop offset="0.227" stop-color="#046c99"/><stop offset="0.273" stop-color="#2d6399"/><stop offset="0.318" stop-color="#585999"/><stop offset="0.364" stop-color="#854f99"/><stop offset="0.409" stop-color="#993a82"/><stop offset="0.455" stop-color="#992665"/><stop offset="0.5" stop-color="#991853"/><stop offset="0.545" stop-color="#990f45"/><stop offset="0.591" stop-color="#99073b"/><stop offset="0.636" stop-color="#990233"/><stop offset="0.682" stop-color="#99002d"/><stop offset="0.727" stop-color="#990027"/><stop offset="0.773" stop-color="#990023"/><stop offset="0.818" stop-color="#99001f"/><stop offset="0.864" stop-color="#99001c"/><stop offset="0.909" stop-color="#990019"/><stop offset="0.955" stop-color="#990017"/><stop offset="1" stop-color="#990015"/></linearGradient><linearGradient id="a32" gradientUnits="userSpaceOnUse" x1="1154.3" y1="0" x2="1795.7" y2="0"><stop offset="0" stop-color="#008e99"/><stop offset="0.0455" stop-color="#008799"/><stop offset="0.0909" stop-color="#007f99"/><stop offset="0.136" stop-color="#007799"/><stop offset="0.182" stop-color="#006f99"/><stop offset="0.227" stop-color="#036799"/><stop offset="0.273" stop-color="#2a5e99"/><stop offset="0.318" stop-color="#535499"/><stop offset="0.364" stop-color="#7e4a99"/><stop offset="0.409" stop-color="#993989"/><stop offset="0.455" stop-color="#99256b"/><stop offset="0.5" stop-color="#991857"/><stop offset="0.545" stop-color="#990e49"/><stop offset="0.591" stop-color="#99073f"/><stop offset="0.636" stop-color="#990136"/><stop offset="0.682" stop-color="#99002f"/><stop offset="0.727" stop-color="#99002a"/><stop offset="0.773" stop-color="#990025"/><stop offset="0.818" stop-color="#990022"/><stop offset="0.864" stop-color="#99001e"/><stop offset="0.909" stop-color="#99001b"/><stop offset="0.955" stop-color="#990019"/><stop offset="1" stop-color="#990017"/></linearGradient><linearGradient id="a33" gradientUnits="userSpaceOnUse" x1="1156.1" y1="0" x2="1791.2" y2="0"><stop offset="0" stop-color="#008899"/><stop offset="0.0455" stop-color="#008199"/><stop offset="0.0909" stop-color="#007999"/><stop offset="0.136" stop-color="#007199"/><stop offset="0.182" stop-color="#006999"/><stop offset="0.227" stop-color="#036199"/><stop offset="0.273" stop-color="#285899"/><stop offset="0.318" stop-color="#4f4f99"/><stop offset="0.364" stop-color="#784699"/><stop offset="0.409" stop-color="#993990"/><stop offset="0.455" stop-color="#992571"/><stop offset="0.5" stop-color="#99175c"/><stop offset="0.545" stop-color="#990e4d"/><stop offset="0.591" stop-color="#990742"/><stop offset="0.636" stop-color="#990139"/><stop offset="0.682" stop-color="#990032"/><stop offset="0.727" stop-color="#99002d"/><stop offset="0.773" stop-color="#990028"/><stop offset="0.818" stop-color="#990024"/><stop offset="0.864" stop-color="#990020"/><stop offset="0.909" stop-color="#99001d"/><stop offset="0.955" stop-color="#99001b"/><stop offset="1" stop-color="#990018"/></linearGradient><linearGradient id="a34" gradientUnits="userSpaceOnUse" x1="1158.0" y1="0" x2="1786.7" y2="0"><stop offset="0" stop-color="#008299"/><stop offset="0.0476" stop-color="#007a99"/><stop offset="0.0952" stop-color="#007399"/><stop offset="0.143" stop-color="#006b99"/><stop offset="0.19" stop-color="#006399"/><stop offset="0.238" stop-color="#0a5a99"/><stop offset="0.286" stop-color="#305199"/><stop offset="0.333" stop-color="#584899"/><stop offset="0.381" stop-color="#813e99"/><stop offset="0.429" stop-color="#992e88"/><stop offset="0.476" stop-color="#991d6c"/><stop offset="0.524" stop-color="#991159"/><stop offset="0.571" stop-color="#99094b"/><stop offset="0.619" stop-color="#990340"/><stop offset="0.667" stop-color="#990038"/><stop offset="0.714" stop-color="#990031"/><stop offset="0.762" stop-color="#99002b"/><stop offset="0.81" stop-color="#990027"/><stop offset="0.857" stop-color="#990023"/><stop offset="0.905" stop-color="#990020"/><stop offset="0.952" stop-color="#99001d"/><stop offset="1" stop-color="#99001a"/></linearGradient><linearGradient id="a35" gradientUnits="userSpaceOnUse" x1="1159.9" y1="0" x2="1782.2" y2="0"><stop offset="0" stop-color="#007c99"/><stop offset="0.0476" stop-color="#007599"/><stop offset="0.0952" stop-color="#006d99"/><stop offset="0.143" stop-color="#006699"/><stop offset="0.19" stop-color="#005e99"/><stop offset="0.238" stop-color="#0a5599"/><stop offset="0.286" stop-color="#2e4d99"/><stop offset="0.333" stop-color="#534499"/><stop offset="0.381" stop-color="#7b3a99"/><stop offset="0.429" stop-color="#992e8f"/><stop offset="0.476" stop-color="#991d71"/><stop offset="0.524" stop-color="#99115d"/><stop offset="0.571" stop-color="#99094f"/><stop offset="0.619" stop-color="#990244"/><stop offset="0.667" stop-color="#99003b"/><stop offset="0.714" stop-color="#990034"/><stop offset="0.762" stop-color="#99002e"/><stop offset="0.81" stop-color="#990029"/><stop offset="0.857" stop-color="#990025"/><stop offset="0.905" stop-color="#990022"/><stop offset="0.952" stop-color="#99001e"/><stop offset="1" stop-color="#99001c"/></linearGradient><linearGradient id="a36" gradientUnits="userSpaceOnUse" x1="1161.8" y1="0" x2="1777.6" y2="0"><stop offset="0" stop-color="#007699"/><stop offset="0.0476" stop-color="#006f99"/><stop offset="0.0952" stop-color="#006899"/><stop offset="0.143" stop-color="#006199"/><stop offset="0.19" stop-color="#005999"/><stop offset="0.238" stop-color="#095199"/><stop offset="0.286" stop-color="#2c4999"/><stop offset="0.333" stop-color="#4f4099"/><stop offset="0.381" stop-color="#753799"/><stop offset="0.429" stop-color="#992d96"/><stop offset="0.476" stop-color="#991c77"/><stop offset="0.524" stop-color="#991062"/><stop offset="0.571" stop-color="#990853"/><stop offset="0.619" stop-color="#990247"/><stop offset="0.667" stop-color="#99003e"/><stop offset="0.714" stop-color="#990037"/><stop offset="0.762" stop-color="#990031"/><stop offset="0.81" stop-color="#99002c"/><stop offset="0.857" stop-color="#990027"/><stop offset="0.905" stop-color="#990024"/><stop offset="0.952" stop-color="#990020"/><stop offset="1" stop-color="#99001e"/></linearGradient><linearGradient id="a37" gradientUnits="userSpaceOnUse" x1="1163.8" y1="0" x2="1773.1" y2="0"><stop offset="0" stop-color="#007199"/><stop offset="0.0476" stop-color="#006a99"/><stop offset="0.0952" stop-color="#006399"/><stop offset="0.143" stop-color="#005c99"/><stop offset="0.19" stop-color="#005599"/><stop offset="0.238" stop-color="#084d99"/><stop offset="0.286" stop-color="#294599"/><stop offset="0.333" stop-color="#4c3c99"/><stop offset="0.381" stop-color="#6f3499"/><stop offset="0.429" stop-color="#942b99"/><stop offset="0.476" stop-color="#991b7d"/><stop offset="0.524" stop-color="#991067"/><stop offset="0.571" stop-color="#990857"/><stop offset="0.619" stop-color="#99014b"/><stop offset="0.667" stop-color="#990041"/><stop offset="0.714" stop-color="#99003a"/><stop offset="0.762" stop-color="#990033"/><stop offset="0.81" stop-color="#99002e"/><stop offset="0.857" stop-color="#99002a"/><stop offset="0.905" stop-color="#990026"/><stop offset="0.952" stop-color="#990022"/><stop offset="1" stop-color="#99001f"/></linearGradient><linearGradient id="a38" gradientUnits="userSpaceOnUse" x1="1165.7" y1="0" x2="1768.6" y2="0"><stop offset="0" stop-color="#006c99"/><stop offset="0.0476" stop-color="#006699"/><stop offset="0.0952" stop-color="#005f99"/><stop offset="0.143" stop-color="#005899"/><stop offset="0.19" stop-color="#005199"/><stop offset="0.238" stop-color="#084999"/><stop offset="0.286" stop-color="#274199"/><stop offset="0.333" stop-color="#483999"/><stop offset="0.381" stop-color="#6a3199"/><stop offset="0.429" stop-color="#8e2899"/><stop offset="0.476" stop-color="#991b83"/><stop offset="0.524" stop-color="#990f6c"/><stop offset="0.571" stop-color="#99075b"/><stop offset="0.619" stop-color="#99014f"/><stop offset="0.667" stop-color="#990045"/><stop offset="0.714" stop-color="#99003d"/><stop offset="0.762" stop-color="#990036"/><stop offset="0.81" stop-color="#990031"/><stop offset="0.857" stop-color="#99002c"/><stop offset="0.905" stop-color="#990028"/><stop offset="0.952" stop-color="#990024"/><stop offset="1" stop-color="#990021"/></linearGradient><linearGradient id="a39" gradientUnits="userSpaceOnUse" x1="1167.8" y1="0" x2="1764.1" y2="0"><stop offset="0" stop-color="#006899"/><stop offset="0.05" stop-color="#006199"/><stop offset="0.1" stop-color="#005a99"/><stop offset="0.15" stop-color="#005399"/><stop offset="0.2" stop-color="#004b99"/><stop offset="0.25" stop-color="#0f4499"/><stop offset="0.3" stop-color="#2f3c99"/><stop offset="0.35" stop-color="#503399"/><stop offset="0.4" stop-color="#732b99"/><stop offset="0.45" stop-color="#972299"/><stop offset="0.5" stop-color="#99147c"/><stop offset="0.55" stop-color="#990a67"/><stop offset="0.6" stop-color="#990357"/><stop offset="0.65" stop-color="#99004b"/><stop offset="0.7" stop-color="#990042"/><stop offset="0.75" stop-color="#99003b"/><stop offset="0.8" stop-color="#990034"/><stop offset="0.85" stop-color="#99002f"/><stop offset="0.9" stop-color="#99002b"/><stop offset="0.95" stop-color="#990027"/><stop offset="1" stop-color="#990023"/></linearGradient><linearGradient id="a40" gradientUnits="userSpaceOnUse" x1="1169.8" y1="0" x2="1759.6" y2="0"><stop offset="0" stop-color="#006399"/><stop offset="0.05" stop-color="#005d99"/><stop offset="0.1" stop-color="#005699"/><stop offset="0.15" stop-color="#004f99"/><stop offset="0.2" stop-color="#004899"/><stop offset="0.25" stop-color="#0e4099"/><stop offset="0.3" stop-color="#2d3899"/><stop offset="0.35" stop-color="#4d3099"/><stop offset="0.4" stop-color="#6e2899"/><stop offset="0.45" stop-color="#901f99"/><stop offset="0.5" stop-color="#991382"/><stop offset="0.55" stop-color="#99096c"/><stop offset="0.6" stop-color="#99025c"/><stop offset="0.65" stop-color="#99004f"/><stop offset="0.7" stop-color="#990045"/><stop offset="0.75" stop-color="#99003d"/><stop offset="0.8" stop-color="#990037"/><stop offset="0.85" stop-color="#990031"/><stop offset="0.9" stop-color="#99002d"/><stop offset="0.95" stop-color="#990029"/><stop offset="1" stop-color="#990025"/></linearGradient><linearGradient id="a41" gradientUnits="userSpaceOnUse" x1="1171.8" y1="0" x2="1755.1" y2="0"><stop offset="0" stop-color="#005f99"/><stop offset="0.05" stop-color="#005999"/><stop offset="0.1" stop-color="#005299"/><stop offset="0.15" stop-color="#004b99"/><stop offset="0.2" stop-color="#004499"/><stop offset="0.25" stop-color="#0d3d99"/><stop offset="0.3" stop-color="#2b3599"/><stop offset="0.35" stop-color="#4a2e99"/><stop offset="0.4" stop-color="#692699"/><stop offset="0.45" stop-color="#8a1d99"/><stop offset="0.5" stop-color="#991288"/><stop offset="0.55" stop-color="#990971"/><stop offset="0.6" stop-color="#990260"/><stop offset="0.65" stop-color="#990053"/><stop offset="0.7" stop-color="#990049"/><stop offset="0.75" stop-color="#990040"/><stop offset="0.8" stop-color="#99003a"/><stop offset="0.85" stop-color="#990034"/><stop offset="0.9" stop-color="#99002f"/><stop offset="0.95" stop-color="#99002b"/><stop offset="1" stop-color="#990027"/></linearGradient><linearGradient id="a42" gradientUnits="userSpaceOnUse" x1="1173.9" y1="0" x2="1750.6" y2="0"><stop offset="0" stop-color="#005b99"/><stop offset="0.05" stop-color="#005599"/><stop offset="0.1" stop-color="#004e99"/><stop offset="0.15" stop-color="#004899"/><stop offset="0.2" stop-color="#004199"/><stop offset="0.25" stop-color="#0d3a99"/><stop offset="0.3" stop-color="#293399"/><stop offset="0.35" stop-color="#472b99"/><stop offset="0.4" stop-color="#652399"/><stop offset="0.45" stop-color="#851b99"/><stop offset="0.5" stop-color="#99128e"/><stop offset="0.55" stop-color="#990876"/><stop offset="0.6" stop-color="#990164"/><stop offset="0.65" stop-color="#990057"/><stop offset="0.7" stop-color="#99004c"/><stop offset="0.75" stop-color="#990044"/><stop offset="0.8" stop-color="#99003d"/><stop offset="0.85" stop-color="#990037"/><stop offset="0.9" stop-color="#990032"/><stop offset="0.95" stop-color="#99002d"/><stop offset="1" stop-color="#990029"/></linearGradient><linearGradient id="a43" gradientUnits="userSpaceOnUse" x1="1176.1" y1="0" x2="1746.1" y2="0"><stop offset="0" stop-color="#005799"/><stop offset="0.05" stop-color="#005199"/><stop offset="0.1" stop-color="#004b99"/><stop offset="0.15" stop-color="#004499"/><stop offset="0.2" stop-color="#003e99"/><stop offset="0.25" stop-color="#0c3799"/><stop offset="0.3" stop-color="#273099"/><stop offset="0.35" stop-color="#442999"/><stop offset="0.4" stop-color="#612199"/><stop offset="0.45" stop-color="#7f1a99"/><stop offset="0.5" stop-color="#991194"/><stop offset="0.55" stop-color="#99087b"/><stop offset="0.6" stop-color="#990169"/><stop offset="0.65" stop-color="#99005b"/><stop offset="0.7" stop-color="#990050"/><stop offset="0.75" stop-color="#990047"/><stop offset="0.8" stop-color="#99003f"/><stop offset="0.85" stop-color="#990039"/><stop offset="0.9" stop-color="#990034"/><stop offset="0.95" stop-color="#99002f"/><stop offset="1" stop-color="#99002c"/></linearGradient><linearGradient id="a44" gradientUnits="userSpaceOnUse" x1="1178.2" y1="0" x2="1741.6" y2="0"><stop offset="0" stop-color="#005399"/><stop offset="0.0526" stop-color="#004d99"/><stop offset="0.105" stop-color="#004799"/><stop offset="0.158" stop-color="#004099"/><stop offset="0.211" stop-color="#003999"/><stop offset="0.263" stop-color="#123299"/><stop offset="0.316" stop-color="#2e2b99"/><stop offset="0.368" stop-color="#4b2499"/><stop offset="0.421" stop-color="#691c99"/><stop offset="0.474" stop-color="#881499"/><stop offset="0.526" stop-color="#990b8b"/><stop offset="0.579" stop-color="#990375"/><stop offset="0.632" stop-color="#990064"/><stop offset="0.684" stop-color="#990057"/><stop offset="0.737" stop-color="#99004c"/><stop offset="0.789" stop-color="#990044"/><stop offset="0.842" stop-color="#99003d"/><stop offset="0.895" stop-color="#990037"/><stop offset="0.947" stop-color="#990032"/><stop offset="1" stop-color="#99002e"/></linearGradient><linearGradient id="a45" gradientUnits="userSpaceOnUse" x1="1180.4" y1="0" x2="1737.1" y2="0"><stop offset="0" stop-color="#005099"/><stop offset="0.0526" stop-color="#004a99"/><stop offset="0.105" stop-color="#004499"/><stop offset="0.158" stop-color="#003d99"/><stop offset="0.211" stop-color="#003799"/><stop offset="0.263" stop-color="#123099"/><stop offset="0.316" stop-color="#2d2999"/><stop offset="0.368" stop-color="#482299"/><stop offset="0.421" stop-color="#651a99"/><stop offset="0.474" stop-color="#831399"/><stop offset="0.526" stop-color="#990a91"/><stop offset="0.579" stop-color="#990279"/><stop offset="0.632" stop-color="#990068"/><stop offset="0.684" stop-color="#99005a"/><stop offset="0.737" stop-color="#990050"/><stop offset="0.789" stop-color="#990047"/><stop offset="0.842" stop-color="#990040"/><stop offset="0.895" stop-color="#99003a"/><stop offset="0.947" stop-color="#990034"/><stop offset="1" stop-color="#990030"/></linearGradient><linearGradient id="a46" gradientUnits="userSpaceOnUse" x1="1182.7" y1="0" x2="1732.6" y2="0"><stop offset="0" stop-color="#004d99"/><stop offset="0.0526" stop-color="#004799"/><stop offset="0.105" stop-color="#004199"/><stop offset="0.158" stop-color="#003a99"/><stop offset="0.211" stop-color="#003499"/><stop offset="0.263" stop-color="#112d99"/><stop offset="0.316" stop-color="#2b2799"/><stop offset="0.368" stop-color="#462099"/><stop offset="0.421" stop-color="#611999"/><stop offset="0.474" stop-color="#7e1199"/><stop offset="0.526" stop-color="#990997"/><stop offset="0.579" stop-color="#99017f"/><stop offset="0.632" stop-color="#99006c"/><stop offset="0.684" stop-color="#99005e"/><stop offset="0.737" stop-color="#990053"/><stop offset="0.789" stop-color="#99004a"/><stop offset="0.842" stop-color="#990043"/><stop offset="0.895" stop-color="#99003c"/><stop offset="0.947" stop-color="#990037"/><stop offset="1" stop-color="#990032"/></linearGradient><linearGradient id="a47" gradientUnits="userSpaceOnUse" x1="1184.9" y1="0" x2="1728.1" y2="0"><stop offset="0" stop-color="#004999"/><stop offset="0.0526" stop-color="#004499"/><stop offset="0.105" stop-color="#003e99"/><stop offset="0.158" stop-color="#003899"/><stop offset="0.211" stop-color="#003299"/><stop offset="0.263" stop-color="#102b99"/><stop offset="0.316" stop-color="#292599"/><stop offset="0.368" stop-color="#431e99"/><stop offset="0.421" stop-color="#5d1799"/><stop offset="0.474" stop-color="#791099"/><stop offset="0.526" stop-color="#950899"/><stop offset="0.579" stop-color="#990184"/><stop offset="0.632" stop-color="#990071"/><stop offset="0.684" stop-color="#990062"/><stop offset="0.737" stop-color="#990057"/><stop offset="0.789" stop-color="#99004d"/><stop offset="0.842" stop-color="#990046"/><stop offset="0.895" stop-color="#99003f"/><stop offset="0.947" stop-color="#990039"/><stop offset="1" stop-color="#990035"/></linearGradient><linearGradient id="a48" gradientUnits="userSpaceOnUse" x1="1187.2" y1="0" x2="1723.6" y2="0"><stop offset="0" stop-color="#004699"/><stop offset="0.0556" stop-color="#004099"/><stop offset="0.111" stop-color="#003a99"/><stop offset="0.167" stop-color="#003499"/><stop offset="0.222" stop-color="#002e99"/><stop offset="0.278" stop-color="#162799"/><stop offset="0.333" stop-color="#302099"/><stop offset="0.389" stop-color="#4a1a99"/><stop offset="0.444" stop-color="#661299"/><stop offset="0.5" stop-color="#820b99"/><stop offset="0.556" stop-color="#990394"/><stop offset="0.611" stop-color="#99007c"/><stop offset="0.667" stop-color="#99006b"/><stop offset="0.722" stop-color="#99005d"/><stop offset="0.778" stop-color="#990053"/><stop offset="0.833" stop-color="#99004a"/><stop offset="0.889" stop-color="#990042"/><stop offset="0.944" stop-color="#99003c"/><stop offset="1" stop-color="#990037"/></linearGradient><linearGradient id="a49" gradientUnits="userSpaceOnUse" x1="1189.6" y1="0" x2="1719.1" y2="0"><stop offset="0" stop-color="#004399"/><stop offset="0.0556" stop-color="#003e99"/><stop offset="0.111" stop-color="#003899"/><stop offset="0.167" stop-color="#003299"/><stop offset="0.222" stop-color="#002b99"/><stop offset="0.278" stop-color="#162599"/><stop offset="0.333" stop-color="#2e1f99"/><stop offset="0.389" stop-color="#481899"/><stop offset="0.444" stop-color="#621199"/><stop offset="0.5" stop-color="#7d0a99"/><stop offset="0.556" stop-color="#980399"/><stop offset="0.611" stop-color="#990081"/><stop offset="0.667" stop-color="#99006f"/><stop offset="0.722" stop-color="#990061"/><stop offset="0.778" stop-color="#990056"/><stop offset="0.833" stop-color="#99004d"/><stop offset="0.889" stop-color="#990045"/><stop offset="0.944" stop-color="#99003f"/><stop offset="1" stop-color="#990039"/></linearGradient><linearGradient id="a50" gradientUnits="userSpaceOnUse" x1="1192.0" y1="0" x2="1714.6" y2="0"><stop offset="0" stop-color="#004099"/><stop offset="0.0556" stop-color="#003b99"/><stop offset="0.111" stop-color="#003599"/><stop offset="0.167" stop-color="#002f99"/><stop offset="0.222" stop-color="#002999"/><stop offset="0.278" stop-color="#152399"/><stop offset="0.333" stop-color="#2d1d99"/><stop offset="0.389" stop-color="#451699"/><stop offset="0.444" stop-color="#5e1099"/><stop offset="0.5" stop-color="#780999"/><stop offset="0.556" stop-color="#930299"/><stop offset="0.611" stop-color="#990086"/><stop offset="0.667" stop-color="#990074"/><stop offset="0.722" stop-color="#990065"/><stop offset="0.778" stop-color="#99005a"/><stop offset="0.833" stop-color="#990050"/><stop offset="0.889" stop-color="#990048"/><stop offset="0.944" stop-color="#990042"/><stop offset="1" stop-color="#99003c"/></linearGradient><linearGradient id="a51" gradientUnits="userSpaceOnUse" x1="1194.4" y1="0" x2="1710.1" y2="0"><stop offset="0" stop-color="#003e99"/><stop offset="0.0556" stop-color="#003899"/><stop offset="0.111" stop-color="#003399"/><stop offset="0.167" stop-color="#002d99"/><stop offset="0.222" stop-color="#002799"/><stop offset="0.278" stop-color="#142199"/><stop offset="0.333" stop-color="#2b1b99"/><stop offset="0.389" stop-color="#431599"/><stop offset="0.444" stop-color="#5b0e99"/><stop offset="0.5" stop-color="#740899"/><stop offset="0.556" stop-color="#8d0199"/><stop offset="0.611" stop-color="#99008c"/><stop offset="0.667" stop-color="#990078"/><stop offset="0.722" stop-color="#990069"/><stop offset="0.778" stop-color="#99005d"/><stop offset="0.833" stop-color="#990053"/><stop offset="0.889" stop-color="#99004b"/><stop offset="0.944" stop-color="#990044"/><stop offset="1" stop-color="#99003f"/></linearGradient><linearGradient id="a52" gradientUnits="userSpaceOnUse" x1="1196.9" y1="0" x2="1705.6" y2="0"><stop offset="0" stop-color="#003b99"/><stop offset="0.0588" stop-color="#003599"/><stop offset="0.118" stop-color="#003099"/><stop offset="0.176" stop-color="#002a99"/><stop offset="0.235" stop-color="#032499"/><stop offset="0.294" stop-color="#1a1e99"/><stop offset="0.353" stop-color="#321799"/><stop offset="0.412" stop-color="#4a1199"/><stop offset="0.471" stop-color="#630a99"/><stop offset="0.529" stop-color="#7d0399"/><stop offset="0.588" stop-color="#970099"/><stop offset="0.647" stop-color="#990083"/><stop offset="0.706" stop-color="#990072"/><stop offset="0.765" stop-color="#990064"/><stop offset="0.824" stop-color="#990059"/><stop offset="0.882" stop-color="#99004f"/><stop offset="0.941" stop-color="#990048"/><stop offset="1" stop-color="#990041"/></linearGradient><linearGradient id="a53" gradientUnits="userSpaceOnUse" x1="1199.5" y1="0" x2="1701.1" y2="0"><stop offset="0" stop-color="#003899"/><stop offset="0.0588" stop-color="#003399"/><stop offset="0.118" stop-color="#002d99"/><stop offset="0.176" stop-color="#002899"/><stop offset="0.235" stop-color="#032299"/><stop offset="0.294" stop-color="#191c99"/><stop offset="0.353" stop-color="#301699"/><stop offset="0.412" stop-color="#481099"/><stop offset="0.471" stop-color="#600999"/><stop offset="0.529" stop-color="#780299"/><stop offset="0.588" stop-color="#920099"/><stop offset="0.647" stop-color="#990088"/><stop offset="0.706" stop-color="#990076"/><stop offset="0.765" stop-color="#990068"/><stop offset="0.824" stop-color="#99005c"/><stop offset="0.882" stop-color="#990053"/><stop offset="0.941" stop-color="#99004b"/><stop offset="1" stop-color="#990044"/></linearGradient><linearGradient id="a54" gradientUnits="userSpaceOnUse" x1="1202.0" y1="0" x2="1696.6" y2="0"><stop offset="0" stop-color="#003699"/><stop offset="0.0588" stop-color="#003199"/><stop offset="0.118" stop-color="#002b99"/><stop offset="0.176" stop-color="#002699"/><stop offset="0.235" stop-color="#032099"/><stop offset="0.294" stop-color="#191a99"/><stop offset="0.353" stop-color="#2f1499"/><stop offset="0.412" stop-color="#450e99"/><stop offset="0.471" stop-color="#5c0899"/><stop offset="0.529" stop-color="#740299"/><stop offset="0.588" stop-color="#8c0099"/><stop offset="0.647" stop-color="#99008d"/><stop offset="0.706" stop-color="#99007a"/><stop offset="0.765" stop-color="#99006c"/><stop offset="0.824" stop-color="#990060"/><stop offset="0.882" stop-color="#990056"/><stop offset="0.941" stop-color="#99004e"/><stop offset="1" stop-color="#990047"/></linearGradient><linearGradient id="a55" gradientUnits="userSpaceOnUse" x1="1204.5" y1="0" x2="1692.1" y2="0"><stop offset="0" stop-color="#003499"/><stop offset="0.0588" stop-color="#002e99"/><stop offset="0.118" stop-color="#002999"/><stop offset="0.176" stop-color="#002499"/><stop offset="0.235" stop-color="#031e99"/><stop offset="0.294" stop-color="#181999"/><stop offset="0.353" stop-color="#2d1399"/><stop offset="0.412" stop-color="#430d99"/><stop offset="0.471" stop-color="#590799"/><stop offset="0.529" stop-color="#700199"/><stop offset="0.588" stop-color="#880099"/><stop offset="0.647" stop-color="#990093"/><stop offset="0.706" stop-color="#99007f"/><stop offset="0.765" stop-color="#990070"/><stop offset="0.824" stop-color="#990063"/><stop offset="0.882" stop-color="#990059"/><stop offset="0.941" stop-color="#990051"/><stop offset="1" stop-color="#99004a"/></linearGradient><linearGradient id="a56" gradientUnits="userSpaceOnUse" x1="1207.2" y1="0" x2="1687.5" y2="0"><stop offset="0" stop-color="#003199"/><stop offset="0.0588" stop-color="#002c99"/><stop offset="0.118" stop-color="#002799"/><stop offset="0.176" stop-color="#002299"/><stop offset="0.235" stop-color="#031d99"/><stop offset="0.294" stop-color="#171799"/><stop offset="0.353" stop-color="#2c1299"/><stop offset="0.412" stop-color="#410c99"/><stop offset="0.471" stop-color="#560699"/><stop offset="0.529" stop-color="#6c0099"/><stop offset="0.588" stop-color="#830099"/><stop offset="0.647" stop-color="#990098"/><stop offset="0.706" stop-color="#990084"/><stop offset="0.765" stop-color="#990074"/><stop offset="0.824" stop-color="#990067"/><stop offset="0.882" stop-color="#99005d"/><stop offset="0.941" stop-color="#990054"/><stop offset="1" stop-color="#99004d"/></linearGradient><linearGradient id="a57" gradientUnits="userSpaceOnUse" x1="1209.8" y1="0" x2="1683.0" y2="0"><stop offset="0" stop-color="#002f99"/><stop offset="0.0625" stop-color="#002a99"/><stop offset="0.125" stop-color="#002599"/><stop offset="0.188" stop-color="#001f99"/><stop offset="0.25" stop-color="#081a99"/><stop offset="0.312" stop-color="#1d1499"/><stop offset="0.375" stop-color="#320e99"/><stop offset="0.438" stop-color="#480899"/><stop offset="0.5" stop-color="#5e0299"/><stop offset="0.562" stop-color="#750099"/><stop offset="0.625" stop-color="#8c0099"/><stop offset="0.688" stop-color="#99008f"/><stop offset="0.75" stop-color="#99007c"/><stop offset="0.812" stop-color="#99006d"/><stop offset="0.875" stop-color="#990062"/><stop offset="0.938" stop-color="#990058"/><stop offset="1" stop-color="#990050"/></linearGradient><linearGradient id="a58" gradientUnits="userSpaceOnUse" x1="1212.4" y1="0" x2="1678.5" y2="0"><stop offset="0" stop-color="#002d99"/><stop offset="0.0625" stop-color="#002899"/><stop offset="0.125" stop-color="#002399"/><stop offset="0.188" stop-color="#001e99"/><stop offset="0.25" stop-color="#081899"/><stop offset="0.312" stop-color="#1c1399"/><stop offset="0.375" stop-color="#300d99"/><stop offset="0.438" stop-color="#450799"/><stop offset="0.5" stop-color="#5b0199"/><stop offset="0.562" stop-color="#710099"/><stop offset="0.625" stop-color="#870099"/><stop offset="0.688" stop-color="#990094"/><stop offset="0.75" stop-color="#990081"/><stop offset="0.812" stop-color="#990072"/><stop offset="0.875" stop-color="#990065"/><stop offset="0.938" stop-color="#99005b"/><stop offset="1" stop-color="#990053"/></linearGradient><linearGradient id="a59" gradientUnits="userSpaceOnUse" x1="1215.1" y1="0" x2="1674.0" y2="0"><stop offset="0" stop-color="#002b99"/><stop offset="0.0625" stop-color="#002699"/><stop offset="0.125" stop-color="#002199"/><stop offset="0.188" stop-color="#001c99"/><stop offset="0.25" stop-color="#081799"/><stop offset="0.312" stop-color="#1b1199"/><stop offset="0.375" stop-color="#2f0c99"/><stop offset="0.438" stop-color="#430699"/><stop offset="0.5" stop-color="#580199"/><stop offset="0.562" stop-color="#6d0099"/><stop offset="0.625" stop-color="#830099"/><stop offset="0.688" stop-color="#990099"/><stop offset="0.75" stop-color="#990085"/><stop offset="0.812" stop-color="#990076"/><stop offset="0.875" stop-color="#990069"/><stop offset="0.938" stop-color="#99005f"/><stop offset="1" stop-color="#990056"/></linearGradient><linearGradient id="a60" gradientUnits="userSpaceOnUse" x1="1217.8" y1="0" x2="1669.5" y2="0"><stop offset="0" stop-color="#002999"/><stop offset="0.0625" stop-color="#002499"/><stop offset="0.125" stop-color="#001f99"/><stop offset="0.188" stop-color="#001a99"/><stop offset="0.25" stop-color="#081599"/><stop offset="0.312" stop-color="#1b1099"/><stop offset="0.375" stop-color="#2e0b99"/><stop offset="0.438" stop-color="#410599"/><stop offset="0.5" stop-color="#550099"/><stop offset="0.562" stop-color="#690099"/><stop offset="0.625" stop-color="#7e0099"/><stop offset="0.688" stop-color="#940099"/><stop offset="0.75" stop-color="#99008a"/><stop offset="0.812" stop-color="#99007a"/><stop offset="0.875" stop-color="#99006d"/><stop offset="0.938" stop-color="#990062"/><stop offset="1" stop-color="#990059"/></linearGradient><linearGradient id="a61" gradientUnits="userSpaceOnUse" x1="1220.5" y1="0" x2="1665.0" y2="0"><stop offset="0" stop-color="#002799"/><stop offset="0.0667" stop-color="#002299"/><stop offset="0.133" stop-color="#001d99"/><stop offset="0.2" stop-color="#001899"/><stop offset="0.267" stop-color="#0d1399"/><stop offset="0.333" stop-color="#200d99"/><stop offset="0.4" stop-color="#340899"/><stop offset="0.467" stop-color="#480299"/><stop offset="0.533" stop-color="#5d0099"/><stop offset="0.6" stop-color="#720099"/><stop offset="0.667" stop-color="#880099"/><stop offset="0.733" stop-color="#990094"/><stop offset="0.8" stop-color="#990082"/><stop offset="0.867" stop-color="#990073"/><stop offset="0.933" stop-color="#990067"/><stop offset="1" stop-color="#99005d"/></linearGradient><linearGradient id="a62" gradientUnits="userSpaceOnUse" x1="1223.2" y1="0" x2="1660.5" y2="0"><stop offset="0" stop-color="#002599"/><stop offset="0.0667" stop-color="#002099"/><stop offset="0.133" stop-color="#001b99"/><stop offset="0.2" stop-color="#001699"/><stop offset="0.267" stop-color="#0c1199"/><stop offset="0.333" stop-color="#1f0c99"/><stop offset="0.4" stop-color="#320799"/><stop offset="0.467" stop-color="#460199"/><stop offset="0.533" stop-color="#5a0099"/><stop offset="0.6" stop-color="#6e0099"/><stop offset="0.667" stop-color="#830099"/><stop offset="0.733" stop-color="#980099"/><stop offset="0.8" stop-color="#990086"/><stop offset="0.867" stop-color="#990077"/><stop offset="0.933" stop-color="#99006b"/><stop offset="1" stop-color="#990060"/></linearGradient><linearGradient id="a63" gradientUnits="userSpaceOnUse" x1="1225.9" y1="0" x2="1656.0" y2="0"><stop offset="0" stop-color="#002399"/><stop offset="0.0667" stop-color="#001e99"/><stop offset="0.133" stop-color="#001a99"/><stop offset="0.2" stop-color="#001599"/><stop offset="0.267" stop-color="#0c1099"/><stop offset="0.333" stop-color="#1e0b99"/><stop offset="0.4" stop-color="#310699"/><stop offset="0.467" stop-color="#440199"/><stop offset="0.533" stop-color="#570099"/><stop offset="0.6" stop-color="#6a0099"/><stop offset="0.667" stop-color="#7f0099"/><stop offset="0.733" stop-color="#930099"/><stop offset="0.8" stop-color="#99008b"/><stop offset="0.867" stop-color="#99007c"/><stop offset="0.933" stop-color="#99006f"/><stop offset="1" stop-color="#990064"/></linearGradient><linearGradient id="a64" gradientUnits="userSpaceOnUse" x1="1228.7" y1="0" x2="1651.5" y2="0"><stop offset="0" stop-color="#002199"/><stop offset="0.0667" stop-color="#001d99"/><stop offset="0.133" stop-color="#001899"/><stop offset="0.2" stop-color="#001499"/><stop offset="0.267" stop-color="#0c0f99"/><stop offset="0.333" stop-color="#1e0a99"/><stop offset="0.4" stop-color="#2f0599"/><stop offset="0.467" stop-color="#420099"/><stop offset="0.533" stop-color="#540099"/><stop offset="0.6" stop-color="#670099"/><stop offset="0.667" stop-color="#7a0099"/><stop offset="0.733" stop-color="#8e0099"/><stop offset="0.8" stop-color="#990090"/><stop offset="0.867" stop-color="#990080"/><stop offset="0.933" stop-color="#990073"/><stop offset="1" stop-color="#990068"/></linearGradient><linearGradient id="a65" gradientUnits="userSpaceOnUse" x1="1231.5" y1="0" x2="1647.0" y2="0"><stop offset="0" stop-color="#002099"/><stop offset="0.0714" stop-color="#001b99"/><stop offset="0.143" stop-color="#001699"/><stop offset="0.214" stop-color="#001199"/><stop offset="0.286" stop-color="#110c99"/><stop offset="0.357" stop-color="#230799"/><stop offset="0.429" stop-color="#350299"/><stop offset="0.5" stop-color="#480099"/><stop offset="0.571" stop-color="#5c0099"/><stop offset="0.643" stop-color="#700099"/><stop offset="0.714" stop-color="#840099"/><stop offset="0.786" stop-color="#980099"/><stop offset="0.857" stop-color="#990087"/><stop offset="0.929" stop-color="#990078"/><stop offset="1" stop-color="#99006c"/></linearGradient><linearGradient id="a66" gradientUnits="userSpaceOnUse" x1="1234.3" y1="0" x2="1642.5" y2="0"><stop offset="0" stop-color="#001e99"/><stop offset="0.0714" stop-color="#001999"/><stop offset="0.143" stop-color="#001599"/><stop offset="0.214" stop-color="#001099"/><stop offset="0.286" stop-color="#100b99"/><stop offset="0.357" stop-color="#220699"/><stop offset="0.429" stop-color="#340199"/><stop offset="0.5" stop-color="#460099"/><stop offset="0.571" stop-color="#590099"/><stop offset="0.643" stop-color="#6c0099"/><stop offset="0.714" stop-color="#7f0099"/><stop offset="0.786" stop-color="#930099"/><stop offset="0.857" stop-color="#99008c"/><stop offset="0.929" stop-color="#99007c"/><stop offset="1" stop-color="#990070"/></linearGradient><linearGradient id="a67" gradientUnits="userSpaceOnUse" x1="1237.1" y1="0" x2="1638.0" y2="0"><stop offset="0" stop-color="#001c99"/><stop offset="0.0714" stop-color="#001899"/><stop offset="0.143" stop-color="#001399"/><stop offset="0.214" stop-color="#000f99"/><stop offset="0.286" stop-color="#100a99"/><stop offset="0.357" stop-color="#210599"/><stop offset="0.429" stop-color="#320199"/><stop offset="0.5" stop-color="#440099"/><stop offset="0.571" stop-color="#560099"/><stop offset="0.643" stop-color="#680099"/><stop offset="0.714" stop-color="#7b0099"/><stop offset="0.786" stop-color="#8e0099"/><stop offset="0.857" stop-color="#990091"/><stop offset="0.929" stop-color="#990081"/><stop offset="1" stop-color="#990074"/></linearGradient><linearGradient id="a68" gradientUnits="userSpaceOnUse" x1="1240.0" y1="0" x2="1633.5" y2="0"><stop offset="0" stop-color="#001b99"/><stop offset="0.0714" stop-color="#001699"/><stop offset="0.143" stop-color="#001299"/><stop offset="0.214" stop-color="#000e99"/><stop offset="0.286" stop-color="#100999"/><stop offset="0.357" stop-color="#200499"/><stop offset="0.429" stop-color="#310099"/><stop offset="0.5" stop-color="#420099"/><stop offset="0.571" stop-color="#530099"/><stop offset="0.643" stop-color="#650099"/><stop offset="0.714" stop-color="#770099"/><stop offset="0.786" stop-color="#890099"/><stop offset="0.857" stop-color="#990096"/><stop offset="0.929" stop-color="#990086"/><stop offset="1" stop-color="#990078"/></linearGradient><linearGradient id="a69" gradientUnits="userSpaceOnUse" x1="1242.9" y1="0" x2="1629.0" y2="0"><stop offset="0" stop-color="#001999"/><stop offset="0.0769" stop-color="#001599"/><stop offset="0.154" stop-color="#001099"/><stop offset="0.231" stop-color="#040b99"/><stop offset="0.308" stop-color="#140799"/><stop offset="0.385" stop-color="#260299"/><stop offset="0.462" stop-color="#370099"/><stop offset="0.538" stop-color="#490099"/><stop offset="0.615" stop-color="#5b0099"/><stop offset="0.692" stop-color="#6e0099"/><stop offset="0.769" stop-color="#810099"/><stop offset="0.846" stop-color="#940099"/><stop offset="0.923" stop-color="#99008c"/><stop offset="1" stop-color="#99007d"/></linearGradient><linearGradient id="a70" gradientUnits="userSpaceOnUse" x1="1245.8" y1="0" x2="1624.5" y2="0"><stop offset="0" stop-color="#001899"/><stop offset="0.0769" stop-color="#001399"/><stop offset="0.154" stop-color="#000f99"/><stop offset="0.231" stop-color="#040a99"/><stop offset="0.308" stop-color="#140699"/><stop offset="0.385" stop-color="#250199"/><stop offset="0.462" stop-color="#350099"/><stop offset="0.538" stop-color="#470099"/><stop offset="0.615" stop-color="#580099"/><stop offset="0.692" stop-color="#6a0099"/><stop offset="0.769" stop-color="#7c0099"/><stop offset="0.846" stop-color="#8f0099"/><stop offset="0.923" stop-color="#990091"/><stop offset="1" stop-color="#990081"/></linearGradient><linearGradient id="a71" gradientUnits="userSpaceOnUse" x1="1248.7" y1="0" x2="1620.0" y2="0"><stop offset="0" stop-color="#001699"/><stop offset="0.0769" stop-color="#001299"/><stop offset="0.154" stop-color="#000e99"/><stop offset="0.231" stop-color="#040999"/><stop offset="0.308" stop-color="#140599"/><stop offset="0.385" stop-color="#240099"/><stop offset="0.462" stop-color="#340099"/><stop offset="0.538" stop-color="#440099"/><stop offset="0.615" stop-color="#550099"/><stop offset="0.692" stop-color="#670099"/><stop offset="0.769" stop-color="#780099"/><stop offset="0.846" stop-color="#8a0099"/><stop offset="0.923" stop-color="#990096"/><stop offset="1" stop-color="#990086"/></linearGradient><linearGradient id="a72" gradientUnits="userSpaceOnUse" x1="1251.7" y1="0" x2="1615.5" y2="0"><stop offset="0" stop-color="#001599"/><stop offset="0.0769" stop-color="#001199"/><stop offset="0.154" stop-color="#000c99"/><stop offset="0.231" stop-color="#040899"/><stop offset="0.308" stop-color="#130499"/><stop offset="0.385" stop-color="#230099"/><stop offset="0.462" stop-color="#320099"/><stop offset="0.538" stop-color="#420099"/><stop offset="0.615" stop-color="#530099"/><stop offset="0.692" stop-color="#630099"/><stop offset="0.769" stop-color="#740099"/><stop offset="0.846" stop-color="#850099"/><stop offset="0.923" stop-color="#970099"/><stop offset="1" stop-color="#99008b"/></linearGradient><linearGradient id="a73" gradientUnits="userSpaceOnUse" x1="1254.7" y1="0" x2="1611.0" y2="0"><stop offset="0" stop-color="#001399"/><stop offset="0.0833" stop-color="#000f99"/><stop offset="0.167" stop-color="#000b99"/><stop offset="0.25" stop-color="#080699"/><stop offset="0.333" stop-color="#180299"/><stop offset="0.417" stop-color="#280099"/><stop offset="0.5" stop-color="#390099"/><stop offset="0.583" stop-color="#490099"/><stop offset="0.667" stop-color="#5b0099"/><stop offset="0.75" stop-color="#6c0099"/><stop offset="0.833" stop-color="#7e0099"/><stop offset="0.917" stop-color="#900099"/><stop offset="1" stop-color="#990090"/></linearGradient><linearGradient id="a74" gradientUnits="userSpaceOnUse" x1="1257.7" y1="0" x2="1606.5" y2="0"><stop offset="0" stop-color="#001299"/><stop offset="0.0833" stop-color="#000e99"/><stop offset="0.167" stop-color="#000a99"/><stop offset="0.25" stop-color="#080599"/><stop offset="0.333" stop-color="#180199"/><stop offset="0.417" stop-color="#270099"/><stop offset="0.5" stop-color="#370099"/><stop offset="0.583" stop-color="#470099"/><stop offset="0.667" stop-color="#580099"/><stop offset="0.75" stop-color="#680099"/><stop offset="0.833" stop-color="#790099"/><stop offset="0.917" stop-color="#8b0099"/><stop offset="1" stop-color="#990096"/></linearGradient><linearGradient id="a75" gradientUnits="userSpaceOnUse" x1="1260.7" y1="0" x2="1601.9" y2="0"><stop offset="0" stop-color="#001199"/><stop offset="0.0833" stop-color="#000d99"/><stop offset="0.167" stop-color="#000999"/><stop offset="0.25" stop-color="#080499"/><stop offset="0.333" stop-color="#170099"/><stop offset="0.417" stop-color="#260099"/><stop offset="0.5" stop-color="#350099"/><stop offset="0.583" stop-color="#450099"/><stop offset="0.667" stop-color="#550099"/><stop offset="0.75" stop-color="#650099"/><stop offset="0.833" stop-color="#750099"/><stop offset="0.917" stop-color="#860099"/><stop offset="1" stop-color="#970099"/></linearGradient><linearGradient id="a76" gradientUnits="userSpaceOnUse" x1="1263.9" y1="0" x2="1597.4" y2="0"><stop offset="0" stop-color="#000f99"/><stop offset="0.0833" stop-color="#000b99"/><stop offset="0.167" stop-color="#000799"/><stop offset="0.25" stop-color="#080399"/><stop offset="0.333" stop-color="#170099"/><stop offset="0.417" stop-color="#250099"/><stop offset="0.5" stop-color="#340099"/><stop offset="0.583" stop-color="#430099"/><stop offset="0.667" stop-color="#520099"/><stop offset="0.75" stop-color="#620099"/><stop offset="0.833" stop-color="#710099"/><stop offset="0.917" stop-color="#810099"/><stop offset="1" stop-color="#920099"/></linearGradient><linearGradient id="a77" gradientUnits="userSpaceOnUse" x1="1267.0" y1="0" x2="1592.9" y2="0"><stop offset="0" stop-color="#000e99"/><stop offset="0.0909" stop-color="#000a99"/><stop offset="0.182" stop-color="#000699"/><stop offset="0.273" stop-color="#0c0299"/><stop offset="0.364" stop-color="#1b0099"/><stop offset="0.455" stop-color="#2b0099"/><stop offset="0.545" stop-color="#3a0099"/><stop offset="0.636" stop-color="#4a0099"/><stop offset="0.727" stop-color="#5a0099"/><stop offset="0.818" stop-color="#6b0099"/><stop offset="0.909" stop-color="#7b0099"/><stop offset="1" stop-color="#8c0099"/></linearGradient><linearGradient id="a78" gradientUnits="userSpaceOnUse" x1="1270.2" y1="0" x2="1588.4" y2="0"><stop offset="0" stop-color="#000d99"/><stop offset="0.0909" stop-color="#000999"/><stop offset="0.182" stop-color="#000599"/><stop offset="0.273" stop-color="#0c0199"/><stop offset="0.364" stop-color="#1b0099"/><stop offset="0.455" stop-color="#290099"/><stop offset="0.545" stop-color="#380099"/><stop offset="0.636" stop-color="#480099"/><stop offset="0.727" stop-color="#570099"/><stop offset="0.818" stop-color="#670099"/><stop offset="0.909" stop-color="#770099"/><stop offset="1" stop-color="#870099"/></linearGradient><linearGradient id="a79" gradientUnits="userSpaceOnUse" x1="1273.5" y1="0" x2="1583.9" y2="0"><stop offset="0" stop-color="#000c99"/><stop offset="0.0909" stop-color="#000899"/><stop offset="0.182" stop-color="#000499"/><stop offset="0.273" stop-color="#0c0099"/><stop offset="0.364" stop-color="#1a0099"/><stop offset="0.455" stop-color="#280099"/><stop offset="0.545" stop-color="#370099"/><stop offset="0.636" stop-color="#450099"/><stop offset="0.727" stop-color="#540099"/><stop offset="0.818" stop-color="#630099"/><stop offset="0.909" stop-color="#730099"/><stop offset="1" stop-color="#820099"/></linearGradient><linearGradient id="a80" gradientUnits="userSpaceOnUse" x1="1276.8" y1="0" x2="1579.4" y2="0"><stop offset="0" stop-color="#000a99"/><stop offset="0.0909" stop-color="#000799"/><stop offset="0.182" stop-color="#000399"/><stop offset="0.273" stop-color="#0c0099"/><stop offset="0.364" stop-color="#1a0099"/><stop offset="0.455" stop-color="#270099"/><stop offset="0.545" stop-color="#350099"/><stop offset="0.636" stop-color="#430099"/><stop offset="0.727" stop-color="#510099"/><stop offset="0.818" stop-color="#600099"/><stop offset="0.909" stop-color="#6f0099"/><stop offset="1" stop-color="#7e0099"/></linearGradient><linearGradient id="a81" gradientUnits="userSpaceOnUse" x1="1280.1" y1="0" x2="1574.9" y2="0"><stop offset="0" stop-color="#000999"/><stop offset="0.1" stop-color="#000599"/><stop offset="0.2" stop-color="#020199"/><stop offset="0.3" stop-color="#100099"/><stop offset="0.4" stop-color="#1e0099"/><stop offset="0.5" stop-color="#2d0099"/><stop offset="0.6" stop-color="#3c0099"/><stop offset="0.7" stop-color="#4b0099"/><stop offset="0.8" stop-color="#5a0099"/><stop offset="0.9" stop-color="#690099"/><stop offset="1" stop-color="#790099"/></linearGradient><linearGradient id="a82" gradientUnits="userSpaceOnUse" x1="1283.5" y1="0" x2="1570.4" y2="0"><stop offset="0" stop-color="#000899"/><stop offset="0.1" stop-color="#000499"/><stop offset="0.2" stop-color="#030099"/><stop offset="0.3" stop-color="#100099"/><stop offset="0.4" stop-color="#1e0099"/><stop offset="0.5" stop-color="#2c0099"/><stop offset="0.6" stop-color="#3a0099"/><stop offset="0.7" stop-color="#480099"/><stop offset="0.8" stop-color="#570099"/><stop offset="0.9" stop-color="#660099"/><stop offset="1" stop-color="#750099"/></linearGradient><linearGradient id="a83" gradientUnits="userSpaceOnUse" x1="1286.9" y1="0" x2="1565.9" y2="0"><stop offset="0" stop-color="#000799"/><stop offset="0.1" stop-color="#000399"/><stop offset="0.2" stop-color="#030099"/><stop offset="0.3" stop-color="#100099"/><stop offset="0.4" stop-color="#1d0099"/><stop offset="0.5" stop-color="#2b0099"/><stop offset="0.6" stop-color="#380099"/><stop offset="0.7" stop-color="#460099"/><stop offset="0.8" stop-color="#540099"/><stop offset="0.9" stop-color="#620099"/><stop offset="1" stop-color="#700099"/></linearGradient><linearGradient id="a84" gradientUnits="userSpaceOnUse" x1="1290.3" y1="0" x2="1561.4" y2="0"><stop offset="0" stop-color="#000699"/><stop offset="0.1" stop-color="#000299"/><stop offset="0.2" stop-color="#040099"/><stop offset="0.3" stop-color="#100099"/><stop offset="0.4" stop-color="#1d0099"/><stop offset="0.5" stop-color="#290099"/><stop offset="0.6" stop-color="#360099"/><stop offset="0.7" stop-color="#430099"/><stop offset="0.8" stop-color="#510099"/><stop offset="0.9" stop-color="#5e0099"/><stop offset="1" stop-color="#6c0099"/></linearGradient><linearGradient id="a85" gradientUnits="userSpaceOnUse" x1="1293.8" y1="0" x2="1556.9" y2="0"><stop offset="0" stop-color="#000599"/><stop offset="0.111" stop-color="#000199"/><stop offset="0.222" stop-color="#070099"/><stop offset="0.333" stop-color="#140099"/><stop offset="0.444" stop-color="#210099"/><stop offset="0.556" stop-color="#2f0099"/><stop offset="0.667" stop-color="#3d0099"/><stop offset="0.778" stop-color="#4b0099"/><stop offset="0.889" stop-color="#590099"/><stop offset="1" stop-color="#680099"/></linearGradient><linearGradient id="a86" gradientUnits="userSpaceOnUse" x1="1297.4" y1="0" x2="1552.4" y2="0"><stop offset="0" stop-color="#000499"/><stop offset="0.111" stop-color="#000099"/><stop offset="0.222" stop-color="#070099"/><stop offset="0.333" stop-color="#140099"/><stop offset="0.444" stop-color="#210099"/><stop offset="0.556" stop-color="#2e0099"/><stop offset="0.667" stop-color="#3b0099"/><stop offset="0.778" stop-color="#480099"/><stop offset="0.889" stop-color="#560099"/><stop offset="1" stop-color="#640099"/></linearGradient><linearGradient id="a87" gradientUnits="userSpaceOnUse" x1="1301.0" y1="0" x2="1547.9" y2="0"><stop offset="0" stop-color="#000299"/><stop offset="0.111" stop-color="#000099"/><stop offset="0.222" stop-color="#070099"/><stop offset="0.333" stop-color="#140099"/><stop offset="0.444" stop-color="#200099"/><stop offset="0.556" stop-color="#2c0099"/><stop offset="0.667" stop-color="#390099"/><stop offset="0.778" stop-color="#460099"/><stop offset="0.889" stop-color="#530099"/><stop offset="1" stop-color="#600099"/></linearGradient><linearGradient id="a88" gradientUnits="userSpaceOnUse" x1="1304.7" y1="0" x2="1543.4" y2="0"><stop offset="0" stop-color="#000199"/><stop offset="0.125" stop-color="#000099"/><stop offset="0.25" stop-color="#0b0099"/><stop offset="0.375" stop-color="#180099"/><stop offset="0.5" stop-color="#250099"/><stop offset="0.625" stop-color="#330099"/><stop offset="0.75" stop-color="#400099"/><stop offset="0.875" stop-color="#4e0099"/><stop offset="1" stop-color="#5c0099"/></linearGradient><linearGradient id="a89" gradientUnits="userSpaceOnUse" x1="1308.5" y1="0" x2="1538.9" y2="0"><stop offset="0" stop-color="#000099"/><stop offset="0.125" stop-color="#000099"/><stop offset="0.25" stop-color="#0b0099"/><stop offset="0.375" stop-color="#180099"/><stop offset="0.5" stop-color="#240099"/><stop offset="0.625" stop-color="#310099"/><stop offset="0.75" stop-color="#3e0099"/><stop offset="0.875" stop-color="#4b0099"/><stop offset="1" stop-color="#590099"/></linearGradient><linearGradient id="a90" gradientUnits="userSpaceOnUse" x1="1312.3" y1="0" x2="1534.4" y2="0"><stop offset="0" stop-color="#000099"/><stop offset="0.125" stop-color="#000099"/><stop offset="0.25" stop-color="#0b0099"/><stop offset="0.375" stop-color="#170099"/><stop offset="0.5" stop-color="#230099"/><stop offset="0.625" stop-color="#300099"/><stop offset="0.75" stop-color="#3c0099"/><stop offset="0.875" stop-color="#490099"/><stop offset="1" stop-color="#550099"/></linearGradient><linearGradient id="a91" gradientUnits="userSpaceOnUse" x1="1316.3" y1="0" x2="1529.9" y2="0"><stop offset="0" stop-color="#000099"/><stop offset="0.125" stop-color="#000099"/><stop offset="0.25" stop-color="#0c0099"/><stop offset="0.375" stop-color="#170099"/><stop offset="0.5" stop-color="#220099"/><stop offset="0.625" stop-color="#2e0099"/><stop offset="0.75" stop-color="#3a0099"/><stop offset="0.875" stop-color="#460099"/><stop offset="1" stop-color="#520099"/></linearGradient><linearGradient id="a92" gradientUnits="userSpaceOnUse" x1="1320.3" y1="0" x2="1525.4" y2="0"><stop offset="0" stop-color="#000099"/><stop offset="0.143" stop-color="#030099"/><stop offset="0.286" stop-color="#0f0099"/><stop offset="0.429" stop-color="#1b0099"/><stop offset="0.571" stop-color="#280099"/><stop offset="0.714" stop-color="#350099"/><stop offset="0.857" stop-color="#410099"/><stop offset="1" stop-color="#4f0099"/></linearGradient><linearGradient id="a93" gradientUnits="userSpaceOnUse" x1="1324.3" y1="0" x2="1520.9" y2="0"><stop offset="0" stop-color="#000099"/><stop offset="0.143" stop-color="#040099"/><stop offset="0.286" stop-color="#0f0099"/><stop offset="0.429" stop-color="#1b0099"/><stop offset="0.571" stop-color="#270099"/><stop offset="0.714" stop-color="#330099"/><stop offset="0.857" stop-color="#3f0099"/><stop offset="1" stop-color="#4b0099"/></linearGradient><linearGradient id="a94" gradientUnits="userSpaceOnUse" x1="1328.5" y1="0" x2="1516.3" y2="0"><stop offset="0" stop-color="#000099"/><stop offset="0.143" stop-color="#050099"/><stop offset="0.286" stop-color="#0f0099"/><stop offset="0.429" stop-color="#1a0099"/><stop offset="0.571" stop-color="#260099"/><stop offset="0.714" stop-color="#310099"/><stop offset="0.857" stop-color="#3c0099"/><stop offset="1" stop-color="#480099"/></linearGradient><linearGradient id="a95" gradientUnits="userSpaceOnUse" x1="1332.9" y1="0" x2="1511.8" y2="0"><stop offset="0" stop-color="#000099"/><stop offset="0.167" stop-color="#070099"/><stop offset="0.333" stop-color="#130099"/><stop offset="0.5" stop-color="#1f0099"/><stop offset="0.667" stop-color="#2c0099"/><stop offset="0.833" stop-color="#380099"/><stop offset="1" stop-color="#450099"/></linearGradient><linearGradient id="a96" gradientUnits="userSpaceOnUse" x1="1337.5" y1="0" x2="1507.3" y2="0"><stop offset="0" stop-color="#000099"/><stop offset="0.167" stop-color="#080099"/><stop offset="0.333" stop-color="#130099"/><stop offset="0.5" stop-color="#1f0099"/><stop offset="0.667" stop-color="#2a0099"/><stop offset="0.833" stop-color="#360099"/><stop offset="1" stop-color="#420099"/></linearGradient><linearGradient id="a97" gradientUnits="userSpaceOnUse" x1="1342.2" y1="0" x2="1502.8" y2="0"><stop offset="0" stop-color="#000099"/><stop offset="0.167" stop-color="#090099"/><stop offset="0.333" stop-color="#130099"/><stop offset="0.5" stop-color="#1e0099"/><stop offset="0.667" stop-color="#290099"/><stop offset="0.833" stop-color="#340099"/><stop offset="1" stop-color="#3f0099"/></linearGradient><linearGradient id="a98" gradientUnits="userSpaceOnUse" x1="1347.0" y1="0" x2="1498.3" y2="0"><stop offset="0" stop-color="#000099"/><stop offset="0.167" stop-color="#0a0099"/><stop offset="0.333" stop-color="#140099"/><stop offset="0.5" stop-color="#1e0099"/><stop offset="0.667" stop-color="#280099"/><stop offset="0.833" stop-color="#320099"/><stop offset="1" stop-color="#3c0099"/></linearGradient><linearGradient id="a99" gradientUnits="userSpaceOnUse" x1="1351.9" y1="0" x2="1493.8" y2="0"><stop offset="0" stop-color="#020099"/><stop offset="0.2" stop-color="#0c0099"/><stop offset="0.4" stop-color="#170099"/><stop offset="0.6" stop-color="#230099"/><stop offset="0.8" stop-color="#2e0099"/><stop offset="1" stop-color="#390099"/></linearGradient><linearGradient id="a100" gradientUnits="userSpaceOnUse" x1="1357.1" y1="0" x2="1489.3" y2="0"><stop offset="0" stop-color="#030099"/><stop offset="0.2" stop-color="#0d0099"/><stop offset="0.4" stop-color="#170099"/><stop offset="0.6" stop-color="#220099"/><stop offset="0.8" stop-color="#2c0099"/><stop offset="1" stop-color="#370099"/></linearGradient><linearGradient id="a101" gradientUnits="userSpaceOnUse" x1="1362.4" y1="0" x2="1484.8" y2="0"><stop offset="0" stop-color="#050099"/><stop offset="0.2" stop-color="#0e0099"/><stop offset="0.4" stop-color="#170099"/><stop offset="0.6" stop-color="#210099"/><stop offset="0.8" stop-color="#2a0099"/><stop offset="1" stop-color="#340099"/></linearGradient><linearGradient id="a102" gradientUnits="userSpaceOnUse" x1="1367.8" y1="0" x2="1480.3" y2="0"><stop offset="0" stop-color="#070099"/><stop offset="0.25" stop-color="#110099"/><stop offset="0.5" stop-color="#1c0099"/><stop offset="0.75" stop-color="#260099"/><stop offset="1" stop-color="#310099"/></linearGradient><linearGradient id="a103" gradientUnits="userSpaceOnUse" x1="1373.3" y1="0" x2="1475.8" y2="0"><stop offset="0" stop-color="#080099"/><stop offset="0.25" stop-color="#120099"/><stop offset="0.5" stop-color="#1b0099"/><stop offset="0.75" stop-color="#250099"/><stop offset="1" stop-color="#2f0099"/></linearGradient><linearGradient id="a104" gradientUnits="userSpaceOnUse" x1="1378.9" y1="0" x2="1471.3" y2="0"><stop offset="0" stop-color="#0a0099"/><stop offset="0.25" stop-color="#120099"/><stop offset="0.5" stop-color="#1b0099"/><stop offset="0.75" stop-color="#240099"/><stop offset="1" stop-color="#2c0099"/></linearGradient><linearGradient id="a105" gradientUnits="userSpaceOnUse" x1="1384.5" y1="0" x2="1466.8" y2="0"><stop offset="0" stop-color="#0c0099"/><stop offset="0.333" stop-color="#160099"/><stop offset="0.667" stop-color="#200099"/><stop offset="1" stop-color="#2a0099"/></linearGradient><linearGradient id="a106" gradientUnits="userSpaceOnUse" x1="1390.1" y1="0" x2="1462.3" y2="0"><stop offset="0" stop-color="#0d0099"/><stop offset="0.333" stop-color="#160099"/><stop offset="0.667" stop-color="#1f0099"/><stop offset="1" stop-color="#280099"/></linearGradient><linearGradient id="a107" gradientUnits="userSpaceOnUse" x1="1395.7" y1="0" x2="1457.8" y2="0"><stop offset="0" stop-color="#0f0099"/><stop offset="0.333" stop-color="#160099"/><stop offset="0.667" stop-color="#1e0099"/><stop offset="1" stop-color="#250099"/></linearGradient><linearGradient id="a108" gradientUnits="userSpaceOnUse" x1="1401.3" y1="0" x2="1453.3" y2="0"><stop offset="0" stop-color="#100099"/><stop offset="0.5" stop-color="#1a0099"/><stop offset="1" stop-color="#230099"/></linearGradient><linearGradient id="a109" gradientUnits="userSpaceOnUse" x1="1406.7" y1="0" x2="1448.8" y2="0"><stop offset="0" stop-color="#120099"/><stop offset="0.5" stop-color="#190099"/><stop offset="1" stop-color="#210099"/></linearGradient><linearGradient id="a110" gradientUnits="userSpaceOnUse" x1="1412.3" y1="0" x2="1444.3" y2="0"><stop offset="0" stop-color="#130099"/><stop offset="0.5" stop-color="#190099"/><stop offset="1" stop-color="#1f0099"/></linearGradient><linearGradient id="a111" gradientUnits="userSpaceOnUse" x1="1418.2" y1="0" x2="1439.8" y2="0"><stop offset="0" stop-color="#150099"/><stop offset="0.5" stop-color="#190099"/><stop offset="1" stop-color="#1c0099"/></linearGradient><linearGradient id="b0" gradientUnits="userSpaceOnUse" x1="1274.1" y1="0" x2="1304.3" y2="0"><stop offset="0" stop-color="#00ff00"/><stop offset="0.5" stop-color="#1bff00"/><stop offset="1" stop-color="#3eff00"/></linearGradient><linearGradient id="b1" gradientUnits="userSpaceOnUse" x1="1274.4" y1="0" x2="1343.9" y2="0"><stop offset="0" stop-color="#00ff06"/><stop offset="0.2" stop-color="#18ff04"/><stop offset="0.4" stop-color="#38ff01"/><stop offset="0.6" stop-color="#5bff00"/><stop offset="0.8" stop-color="#80ff00"/><stop offset="1" stop-color="#a8ff00"/></linearGradient><linearGradient id="b2" gradientUnits="userSpaceOnUse" x1="1275.0" y1="0" x2="1383.5" y2="0"><stop offset="0" stop-color="#00ff0d"/><stop offset="0.143" stop-color="#1cff0b"/><stop offset="0.286" stop-color="#40ff08"/><stop offset="0.429" stop-color="#68ff05"/><stop offset="0.571" stop-color="#94ff02"/><stop offset="0.714" stop-color="#c3ff00"/><stop offset="0.857" stop-color="#f7ff00"/><stop offset="1" stop-color="#ffd500"/></linearGradient><linearGradient id="b3" gradientUnits="userSpaceOnUse" x1="1275.6" y1="0" x2="1423.1" y2="0"><stop offset="0" stop-color="#00ff15"/><stop offset="0.111" stop-color="#1eff12"/><stop offset="0.222" stop-color="#46ff10"/><stop offset="0.333" stop-color="#71ff0d"/><stop offset="0.444" stop-color="#a0ff0a"/><stop offset="0.556" stop-color="#d4ff07"/><stop offset="0.667" stop-color="#fff103"/><stop offset="0.778" stop-color="#ffc300"/><stop offset="0.889" stop-color="#ffa000"/><stop offset="1" stop-color="#ff8600"/></linearGradient><linearGradient id="b4" gradientUnits="userSpaceOnUse" x1="1276.2" y1="0" x2="1462.7" y2="0"><stop offset="0" stop-color="#00ff1c"/><stop offset="0.0909" stop-color="#20ff1a"/><stop offset="0.182" stop-color="#49ff18"/><stop offset="0.273" stop-color="#77ff15"/><stop offset="0.364" stop-color="#a9ff13"/><stop offset="0.455" stop-color="#e1ff10"/><stop offset="0.545" stop-color="#ffe30b"/><stop offset="0.636" stop-color="#ffb706"/><stop offset="0.727" stop-color="#ff9602"/><stop offset="0.818" stop-color="#ff7d00"/><stop offset="0.909" stop-color="#ff6800"/><stop offset="1" stop-color="#ff5800"/></linearGradient><linearGradient id="b5" gradientUnits="userSpaceOnUse" x1="1276.8" y1="0" x2="1502.3" y2="0"><stop offset="0" stop-color="#00ff24"/><stop offset="0.0714" stop-color="#1eff22"/><stop offset="0.143" stop-color="#46ff21"/><stop offset="0.214" stop-color="#71ff1f"/><stop offset="0.286" stop-color="#a1ff1c"/><stop offset="0.357" stop-color="#d5ff1a"/><stop offset="0.429" stop-color="#fff016"/><stop offset="0.5" stop-color="#ffc20f"/><stop offset="0.571" stop-color="#ffa00b"/><stop offset="0.643" stop-color="#ff8507"/><stop offset="0.714" stop-color="#ff7004"/><stop offset="0.786" stop-color="#ff5f01"/><stop offset="0.857" stop-color="#ff5100"/><stop offset="0.929" stop-color="#ff4500"/><stop offset="1" stop-color="#ff3a00"/></linearGradient><linearGradient id="b6" gradientUnits="userSpaceOnUse" x1="1277.4" y1="0" x2="1541.9" y2="0"><stop offset="0" stop-color="#00ff2c"/><stop offset="0.0625" stop-color="#1fff2b"/><stop offset="0.125" stop-color="#49ff29"/><stop offset="0.188" stop-color="#76ff27"/><stop offset="0.25" stop-color="#a8ff25"/><stop offset="0.312" stop-color="#dfff23"/><stop offset="0.375" stop-color="#ffe41e"/><stop offset="0.438" stop-color="#ffb816"/><stop offset="0.5" stop-color="#ff9710"/><stop offset="0.562" stop-color="#ff7e0c"/><stop offset="0.625" stop-color="#ff6909"/><stop offset="0.688" stop-color="#ff5906"/><stop offset="0.75" stop-color="#ff4b03"/><stop offset="0.812" stop-color="#ff3f01"/><stop offset="0.875" stop-color="#ff3600"/><stop offset="0.938" stop-color="#ff2d00"/><stop offset="1" stop-color="#ff2500"/></linearGradient><linearGradient id="b7" gradientUnits="userSpaceOnUse" x1="1277.9" y1="0" x2="1581.5" y2="0"><stop offset="0" stop-color="#00ff34"/><stop offset="0.0556" stop-color="#20ff33"/><stop offset="0.111" stop-color="#4bff32"/><stop offset="0.167" stop-color="#7bff31"/><stop offset="0.222" stop-color="#afff2f"/><stop offset="0.278" stop-color="#e8ff2d"/><stop offset="0.333" stop-color="#ffdb25"/><stop offset="0.389" stop-color="#ffb01d"/><stop offset="0.444" stop-color="#ff9016"/><stop offset="0.5" stop-color="#ff7811"/><stop offset="0.556" stop-color="#ff640d"/><stop offset="0.611" stop-color="#ff540a"/><stop offset="0.667" stop-color="#ff4707"/><stop offset="0.722" stop-color="#ff3b05"/><stop offset="0.778" stop-color="#ff3203"/><stop offset="0.833" stop-color="#ff2901"/><stop offset="0.889" stop-color="#ff2200"/><stop offset="0.944" stop-color="#ff1c00"/><stop offset="1" stop-color="#ff1600"/></linearGradient><linearGradient id="b8" gradientUnits="userSpaceOnUse" x1="1278.5" y1="0" x2="1621.1" y2="0"><stop offset="0" stop-color="#00ff3c"/><stop offset="0.0476" stop-color="#1fff3c"/><stop offset="0.0952" stop-color="#49ff3b"/><stop offset="0.143" stop-color="#77ff3a"/><stop offset="0.19" stop-color="#aaff39"/><stop offset="0.238" stop-color="#e1ff38"/><stop offset="0.286" stop-color="#ffe231"/><stop offset="0.333" stop-color="#ffb626"/><stop offset="0.381" stop-color="#ff951f"/><stop offset="0.429" stop-color="#ff7c19"/><stop offset="0.476" stop-color="#ff6814"/><stop offset="0.524" stop-color="#ff5810"/><stop offset="0.571" stop-color="#ff4a0d"/><stop offset="0.619" stop-color="#ff3e0a"/><stop offset="0.667" stop-color="#ff3508"/><stop offset="0.714" stop-color="#ff2c06"/><stop offset="0.762" stop-color="#ff2504"/><stop offset="0.81" stop-color="#ff1e02"/><stop offset="0.857" stop-color="#ff1801"/><stop offset="0.905" stop-color="#ff1300"/><stop offset="0.952" stop-color="#ff0e00"/><stop offset="1" stop-color="#ff0a00"/></linearGradient><linearGradient id="b9" gradientUnits="userSpaceOnUse" x1="1279.1" y1="0" x2="1660.7" y2="0"><stop offset="0" stop-color="#00ff45"/><stop offset="0.0435" stop-color="#20ff45"/><stop offset="0.087" stop-color="#4cff44"/><stop offset="0.13" stop-color="#7bff44"/><stop offset="0.174" stop-color="#b0ff43"/><stop offset="0.217" stop-color="#eaff43"/><stop offset="0.261" stop-color="#ffda38"/><stop offset="0.304" stop-color="#ffaf2d"/><stop offset="0.348" stop-color="#ff8f24"/><stop offset="0.391" stop-color="#ff771e"/><stop offset="0.435" stop-color="#ff6318"/><stop offset="0.478" stop-color="#ff5314"/><stop offset="0.522" stop-color="#ff4611"/><stop offset="0.565" stop-color="#ff3b0d"/><stop offset="0.609" stop-color="#ff310b"/><stop offset="0.652" stop-color="#ff2909"/><stop offset="0.696" stop-color="#ff2207"/><stop offset="0.739" stop-color="#ff1b05"/><stop offset="0.783" stop-color="#ff1603"/><stop offset="0.826" stop-color="#ff1002"/><stop offset="0.87" stop-color="#ff0c01"/><stop offset="0.913" stop-color="#ff0800"/><stop offset="0.957" stop-color="#ff0400"/><stop offset="1" stop-color="#ff0100"/></linearGradient><linearGradient id="b10" gradientUnits="userSpaceOnUse" x1="1279.7" y1="0" x2="1664.6" y2="0"><stop offset="0" stop-color="#00ff4e"/><stop offset="0.0435" stop-color="#21ff4e"/><stop offset="0.087" stop-color="#4dff4e"/><stop offset="0.13" stop-color="#7eff4e"/><stop offset="0.174" stop-color="#b4ff4e"/><stop offset="0.217" stop-color="#f0ff4e"/><stop offset="0.261" stop-color="#ffd441"/><stop offset="0.304" stop-color="#ffaa34"/><stop offset="0.348" stop-color="#ff8b2a"/><stop offset="0.391" stop-color="#ff7323"/><stop offset="0.435" stop-color="#ff601d"/><stop offset="0.478" stop-color="#ff5018"/><stop offset="0.522" stop-color="#ff4315"/><stop offset="0.565" stop-color="#ff3811"/><stop offset="0.609" stop-color="#ff2f0e"/><stop offset="0.652" stop-color="#ff260c"/><stop offset="0.696" stop-color="#ff1f0a"/><stop offset="0.739" stop-color="#ff1908"/><stop offset="0.783" stop-color="#ff1406"/><stop offset="0.826" stop-color="#ff0f05"/><stop offset="0.87" stop-color="#ff0a03"/><stop offset="0.913" stop-color="#ff0602"/><stop offset="0.957" stop-color="#ff0301"/><stop offset="1" stop-color="#ff0000"/></linearGradient><linearGradient id="b11" gradientUnits="userSpaceOnUse" x1="1280.3" y1="0" x2="1662.8" y2="0"><stop offset="0" stop-color="#00ff56"/><stop offset="0.0435" stop-color="#21ff57"/><stop offset="0.087" stop-color="#4eff57"/><stop offset="0.13" stop-color="#7fff58"/><stop offset="0.174" stop-color="#b5ff58"/><stop offset="0.217" stop-color="#f1ff59"/><stop offset="0.261" stop-color="#ffd34a"/><stop offset="0.304" stop-color="#ffa93c"/><stop offset="0.348" stop-color="#ff8a32"/><stop offset="0.391" stop-color="#ff7229"/><stop offset="0.435" stop-color="#ff5f23"/><stop offset="0.478" stop-color="#ff4f1e"/><stop offset="0.522" stop-color="#ff4219"/><stop offset="0.565" stop-color="#ff3716"/><stop offset="0.609" stop-color="#ff2e12"/><stop offset="0.652" stop-color="#ff2610"/><stop offset="0.696" stop-color="#ff1f0d"/><stop offset="0.739" stop-color="#ff190b"/><stop offset="0.783" stop-color="#ff1309"/><stop offset="0.826" stop-color="#ff0e08"/><stop offset="0.87" stop-color="#ff0a06"/><stop offset="0.913" stop-color="#ff0605"/><stop offset="0.957" stop-color="#ff0203"/><stop offset="1" stop-color="#ff0002"/></linearGradient><linearGradient id="b12" gradientUnits="userSpaceOnUse" x1="1280.9" y1="0" x2="1659.1" y2="0"><stop offset="0" stop-color="#00ff5f"/><stop offset="0.0435" stop-color="#21ff60"/><stop offset="0.087" stop-color="#4eff61"/><stop offset="0.13" stop-color="#7fff62"/><stop offset="0.174" stop-color="#b5ff63"/><stop offset="0.217" stop-color="#f1ff65"/><stop offset="0.261" stop-color="#ffd354"/><stop offset="0.304" stop-color="#ffa945"/><stop offset="0.348" stop-color="#ff8a39"/><stop offset="0.391" stop-color="#ff7230"/><stop offset="0.435" stop-color="#ff5f29"/><stop offset="0.478" stop-color="#ff4f23"/><stop offset="0.522" stop-color="#ff421e"/><stop offset="0.565" stop-color="#ff371a"/><stop offset="0.609" stop-color="#ff2e17"/><stop offset="0.652" stop-color="#ff2614"/><stop offset="0.696" stop-color="#ff1f11"/><stop offset="0.739" stop-color="#ff190f"/><stop offset="0.783" stop-color="#ff130d"/><stop offset="0.826" stop-color="#ff0e0b"/><stop offset="0.87" stop-color="#ff0a09"/><stop offset="0.913" stop-color="#ff0608"/><stop offset="0.957" stop-color="#ff0206"/><stop offset="1" stop-color="#ff0005"/></linearGradient><linearGradient id="b13" gradientUnits="userSpaceOnUse" x1="1281.5" y1="0" x2="1655.4" y2="0"><stop offset="0" stop-color="#00ff69"/><stop offset="0.0455" stop-color="#23ff6a"/><stop offset="0.0909" stop-color="#52ff6c"/><stop offset="0.136" stop-color="#86ff6d"/><stop offset="0.182" stop-color="#bfff6f"/><stop offset="0.227" stop-color="#fffe71"/><stop offset="0.273" stop-color="#ffc65a"/><stop offset="0.318" stop-color="#ff9e49"/><stop offset="0.364" stop-color="#ff803d"/><stop offset="0.409" stop-color="#ff6a34"/><stop offset="0.455" stop-color="#ff572c"/><stop offset="0.5" stop-color="#ff4826"/><stop offset="0.545" stop-color="#ff3c21"/><stop offset="0.591" stop-color="#ff321d"/><stop offset="0.636" stop-color="#ff2919"/><stop offset="0.682" stop-color="#ff2116"/><stop offset="0.727" stop-color="#ff1a13"/><stop offset="0.773" stop-color="#ff1410"/><stop offset="0.818" stop-color="#ff0f0e"/><stop offset="0.864" stop-color="#ff0a0c"/><stop offset="0.909" stop-color="#ff060b"/><stop offset="0.955" stop-color="#ff0209"/><stop offset="1" stop-color="#ff0008"/></linearGradient><linearGradient id="b14" gradientUnits="userSpaceOnUse" x1="1282.1" y1="0" x2="1651.8" y2="0"><stop offset="0" stop-color="#00ff72"/><stop offset="0.0455" stop-color="#23ff74"/><stop offset="0.0909" stop-color="#52ff76"/><stop offset="0.136" stop-color="#85ff78"/><stop offset="0.182" stop-color="#bfff7b"/><stop offset="0.227" stop-color="#fffe7d"/><stop offset="0.273" stop-color="#ffc664"/><stop offset="0.318" stop-color="#ff9e52"/><stop offset="0.364" stop-color="#ff8145"/><stop offset="0.409" stop-color="#ff6a3a"/><stop offset="0.455" stop-color="#ff5732"/><stop offset="0.5" stop-color="#ff482b"/><stop offset="0.545" stop-color="#ff3c26"/><stop offset="0.591" stop-color="#ff3221"/><stop offset="0.636" stop-color="#ff291d"/><stop offset="0.682" stop-color="#ff211a"/><stop offset="0.727" stop-color="#ff1a17"/><stop offset="0.773" stop-color="#ff1414"/><stop offset="0.818" stop-color="#ff0f12"/><stop offset="0.864" stop-color="#ff0a0f"/><stop offset="0.909" stop-color="#ff060e"/><stop offset="0.955" stop-color="#ff020c"/><stop offset="1" stop-color="#ff000a"/></linearGradient><linearGradient id="b15" gradientUnits="userSpaceOnUse" x1="1282.7" y1="0" x2="1648.1" y2="0"><stop offset="0" stop-color="#00ff7c"/><stop offset="0.0455" stop-color="#23ff7e"/><stop offset="0.0909" stop-color="#52ff81"/><stop offset="0.136" stop-color="#85ff83"/><stop offset="0.182" stop-color="#bfff87"/><stop offset="0.227" stop-color="#fffe8a"/><stop offset="0.273" stop-color="#ffc66e"/><stop offset="0.318" stop-color="#ff9e5b"/><stop offset="0.364" stop-color="#ff814c"/><stop offset="0.409" stop-color="#ff6a41"/><stop offset="0.455" stop-color="#ff5738"/><stop offset="0.5" stop-color="#ff4831"/><stop offset="0.545" stop-color="#ff3c2b"/><stop offset="0.591" stop-color="#ff3226"/><stop offset="0.636" stop-color="#ff2922"/><stop offset="0.682" stop-color="#ff211e"/><stop offset="0.727" stop-color="#ff1a1a"/><stop offset="0.773" stop-color="#ff1418"/><stop offset="0.818" stop-color="#ff0f15"/><stop offset="0.864" stop-color="#ff0a13"/><stop offset="0.909" stop-color="#ff0611"/><stop offset="0.955" stop-color="#ff020f"/><stop offset="1" stop-color="#ff000d"/></linearGradient><linearGradient id="b16" gradientUnits="userSpaceOnUse" x1="1283.3" y1="0" x2="1644.5" y2="0"><stop offset="0" stop-color="#00ff86"/><stop offset="0.0455" stop-color="#23ff89"/><stop offset="0.0909" stop-color="#51ff8c"/><stop offset="0.136" stop-color="#85ff8f"/><stop offset="0.182" stop-color="#bfff93"/><stop offset="0.227" stop-color="#ffff97"/><stop offset="0.273" stop-color="#ffc679"/><stop offset="0.318" stop-color="#ff9e64"/><stop offset="0.364" stop-color="#ff8154"/><stop offset="0.409" stop-color="#ff6a48"/><stop offset="0.455" stop-color="#ff573f"/><stop offset="0.5" stop-color="#ff4837"/><stop offset="0.545" stop-color="#ff3c30"/><stop offset="0.591" stop-color="#ff322b"/><stop offset="0.636" stop-color="#ff2926"/><stop offset="0.682" stop-color="#ff2122"/><stop offset="0.727" stop-color="#ff1a1e"/><stop offset="0.773" stop-color="#ff141b"/><stop offset="0.818" stop-color="#ff0f18"/><stop offset="0.864" stop-color="#ff0a16"/><stop offset="0.909" stop-color="#ff0614"/><stop offset="0.955" stop-color="#ff0212"/><stop offset="1" stop-color="#ff0010"/></linearGradient><linearGradient id="b17" gradientUnits="userSpaceOnUse" x1="1283.9" y1="0" x2="1640.8" y2="0"><stop offset="0" stop-color="#00ff90"/><stop offset="0.0476" stop-color="#25ff93"/><stop offset="0.0952" stop-color="#56ff97"/><stop offset="0.143" stop-color="#8dff9b"/><stop offset="0.19" stop-color="#caffa0"/><stop offset="0.238" stop-color="#ffef9b"/><stop offset="0.286" stop-color="#ffb97d"/><stop offset="0.333" stop-color="#ff9367"/><stop offset="0.381" stop-color="#ff7757"/><stop offset="0.429" stop-color="#ff614b"/><stop offset="0.476" stop-color="#ff5041"/><stop offset="0.524" stop-color="#ff4239"/><stop offset="0.571" stop-color="#ff3632"/><stop offset="0.619" stop-color="#ff2c2c"/><stop offset="0.667" stop-color="#ff2328"/><stop offset="0.714" stop-color="#ff1c23"/><stop offset="0.762" stop-color="#ff1620"/><stop offset="0.81" stop-color="#ff101d"/><stop offset="0.857" stop-color="#ff0b1a"/><stop offset="0.905" stop-color="#ff0617"/><stop offset="0.952" stop-color="#ff0215"/><stop offset="1" stop-color="#ff0013"/></linearGradient><linearGradient id="b18" gradientUnits="userSpaceOnUse" x1="1284.5" y1="0" x2="1637.2" y2="0"><stop offset="0" stop-color="#00ff9a"/><stop offset="0.0476" stop-color="#25ff9e"/><stop offset="0.0952" stop-color="#56ffa3"/><stop offset="0.143" stop-color="#8dffa8"/><stop offset="0.19" stop-color="#caffad"/><stop offset="0.238" stop-color="#ffefa8"/><stop offset="0.286" stop-color="#ffb987"/><stop offset="0.333" stop-color="#ff9370"/><stop offset="0.381" stop-color="#ff775f"/><stop offset="0.429" stop-color="#ff6152"/><stop offset="0.476" stop-color="#ff5047"/><stop offset="0.524" stop-color="#ff423f"/><stop offset="0.571" stop-color="#ff3637"/><stop offset="0.619" stop-color="#ff2c31"/><stop offset="0.667" stop-color="#ff232c"/><stop offset="0.714" stop-color="#ff1c28"/><stop offset="0.762" stop-color="#ff1624"/><stop offset="0.81" stop-color="#ff1020"/><stop offset="0.857" stop-color="#ff0b1d"/><stop offset="0.905" stop-color="#ff061a"/><stop offset="0.952" stop-color="#ff0218"/><stop offset="1" stop-color="#ff0016"/></linearGradient><linearGradient id="b19" gradientUnits="userSpaceOnUse" x1="1285.1" y1="0" x2="1633.5" y2="0"><stop offset="0" stop-color="#00ffa5"/><stop offset="0.0476" stop-color="#24ffaa"/><stop offset="0.0952" stop-color="#56ffaf"/><stop offset="0.143" stop-color="#8dffb4"/><stop offset="0.19" stop-color="#caffba"/><stop offset="0.238" stop-color="#ffefb5"/><stop offset="0.286" stop-color="#ffba92"/><stop offset="0.333" stop-color="#ff937a"/><stop offset="0.381" stop-color="#ff7767"/><stop offset="0.429" stop-color="#ff6159"/><stop offset="0.476" stop-color="#ff504e"/><stop offset="0.524" stop-color="#ff4244"/><stop offset="0.571" stop-color="#ff363d"/><stop offset="0.619" stop-color="#ff2c36"/><stop offset="0.667" stop-color="#ff2331"/><stop offset="0.714" stop-color="#ff1c2c"/><stop offset="0.762" stop-color="#ff1628"/><stop offset="0.81" stop-color="#ff1024"/><stop offset="0.857" stop-color="#ff0b21"/><stop offset="0.905" stop-color="#ff061e"/><stop offset="0.952" stop-color="#ff021b"/><stop offset="1" stop-color="#ff0019"/></linearGradient><linearGradient id="b20" gradientUnits="userSpaceOnUse" x1="1285.7" y1="0" x2="1629.8" y2="0"><stop offset="0" stop-color="#00ffb0"/><stop offset="0.0476" stop-color="#24ffb5"/><stop offset="0.0952" stop-color="#56ffbb"/><stop offset="0.143" stop-color="#8dffc1"/><stop offset="0.19" stop-color="#caffc8"/><stop offset="0.238" stop-color="#ffefc3"/><stop offset="0.286" stop-color="#ffba9e"/><stop offset="0.333" stop-color="#ff9483"/><stop offset="0.381" stop-color="#ff7770"/><stop offset="0.429" stop-color="#ff6160"/><stop offset="0.476" stop-color="#ff5054"/><stop offset="0.524" stop-color="#ff424a"/><stop offset="0.571" stop-color="#ff3642"/><stop offset="0.619" stop-color="#ff2c3b"/><stop offset="0.667" stop-color="#ff2335"/><stop offset="0.714" stop-color="#ff1c30"/><stop offset="0.762" stop-color="#ff162c"/><stop offset="0.81" stop-color="#ff1028"/><stop offset="0.857" stop-color="#ff0b24"/><stop offset="0.905" stop-color="#ff0621"/><stop offset="0.952" stop-color="#ff021f"/><stop offset="1" stop-color="#ff001c"/></linearGradient><linearGradient id="b21" gradientUnits="userSpaceOnUse" x1="1286.3" y1="0" x2="1626.2" y2="0"><stop offset="0" stop-color="#00ffbb"/><stop offset="0.05" stop-color="#27ffc1"/><stop offset="0.1" stop-color="#5bffc8"/><stop offset="0.15" stop-color="#95ffcf"/><stop offset="0.2" stop-color="#d7ffd7"/><stop offset="0.25" stop-color="#ffe0c6"/><stop offset="0.3" stop-color="#ffada0"/><stop offset="0.35" stop-color="#ff8985"/><stop offset="0.4" stop-color="#ff6e71"/><stop offset="0.45" stop-color="#ff5962"/><stop offset="0.5" stop-color="#ff4856"/><stop offset="0.55" stop-color="#ff3b4c"/><stop offset="0.6" stop-color="#ff3043"/><stop offset="0.65" stop-color="#ff263c"/><stop offset="0.7" stop-color="#ff1e36"/><stop offset="0.75" stop-color="#ff1731"/><stop offset="0.8" stop-color="#ff112d"/><stop offset="0.85" stop-color="#ff0c29"/><stop offset="0.9" stop-color="#ff0725"/><stop offset="0.95" stop-color="#ff0322"/><stop offset="1" stop-color="#ff001f"/></linearGradient><linearGradient id="b22" gradientUnits="userSpaceOnUse" x1="1286.9" y1="0" x2="1622.5" y2="0"><stop offset="0" stop-color="#00ffc7"/><stop offset="0.05" stop-color="#26ffcd"/><stop offset="0.1" stop-color="#5bffd5"/><stop offset="0.15" stop-color="#95ffdd"/><stop offset="0.2" stop-color="#d7ffe6"/><stop offset="0.25" stop-color="#ffe0d3"/><stop offset="0.3" stop-color="#ffadab"/><stop offset="0.35" stop-color="#ff898f"/><stop offset="0.4" stop-color="#ff6e7a"/><stop offset="0.45" stop-color="#ff5969"/><stop offset="0.5" stop-color="#ff485c"/><stop offset="0.55" stop-color="#ff3b52"/><stop offset="0.6" stop-color="#ff3049"/><stop offset="0.65" stop-color="#ff2641"/><stop offset="0.7" stop-color="#ff1e3b"/><stop offset="0.75" stop-color="#ff1736"/><stop offset="0.8" stop-color="#ff1131"/><stop offset="0.85" stop-color="#ff0c2d"/><stop offset="0.9" stop-color="#ff0729"/><stop offset="0.95" stop-color="#ff0326"/><stop offset="1" stop-color="#ff0022"/></linearGradient><linearGradient id="b23" gradientUnits="userSpaceOnUse" x1="1287.5" y1="0" x2="1618.9" y2="0"><stop offset="0" stop-color="#00ffd3"/><stop offset="0.05" stop-color="#26ffda"/><stop offset="0.1" stop-color="#5bffe2"/><stop offset="0.15" stop-color="#95ffeb"/><stop offset="0.2" stop-color="#d7fff5"/><stop offset="0.25" stop-color="#ffe0e1"/><stop offset="0.3" stop-color="#ffadb7"/><stop offset="0.35" stop-color="#ff8999"/><stop offset="0.4" stop-color="#ff6e82"/><stop offset="0.45" stop-color="#ff5971"/><stop offset="0.5" stop-color="#ff4863"/><stop offset="0.55" stop-color="#ff3b58"/><stop offset="0.6" stop-color="#ff304f"/><stop offset="0.65" stop-color="#ff2647"/><stop offset="0.7" stop-color="#ff1e40"/><stop offset="0.75" stop-color="#ff173a"/><stop offset="0.8" stop-color="#ff1135"/><stop offset="0.85" stop-color="#ff0c31"/><stop offset="0.9" stop-color="#ff072d"/><stop offset="0.95" stop-color="#ff0329"/><stop offset="1" stop-color="#ff0026"/></linearGradient><linearGradient id="b24" gradientUnits="userSpaceOnUse" x1="1288.1" y1="0" x2="1615.2" y2="0"><stop offset="0" stop-color="#00ffdf"/><stop offset="0.05" stop-color="#26ffe6"/><stop offset="0.1" stop-color="#5affef"/><stop offset="0.15" stop-color="#95fff9"/><stop offset="0.2" stop-color="#d3faff"/><stop offset="0.25" stop-color="#ffe0f0"/><stop offset="0.3" stop-color="#ffadc3"/><stop offset="0.35" stop-color="#ff89a3"/><stop offset="0.4" stop-color="#ff6e8b"/><stop offset="0.45" stop-color="#ff5979"/><stop offset="0.5" stop-color="#ff486a"/><stop offset="0.55" stop-color="#ff3b5e"/><stop offset="0.6" stop-color="#ff3054"/><stop offset="0.65" stop-color="#ff264c"/><stop offset="0.7" stop-color="#ff1e45"/><stop offset="0.75" stop-color="#ff173f"/><stop offset="0.8" stop-color="#ff1139"/><stop offset="0.85" stop-color="#ff0c35"/><stop offset="0.9" stop-color="#ff0730"/><stop offset="0.95" stop-color="#ff032d"/><stop offset="1" stop-color="#ff0029"/></linearGradient><linearGradient id="b25" gradientUnits="userSpaceOnUse" x1="1288.7" y1="0" x2="1611.5" y2="0"><stop offset="0" stop-color="#00ffeb"/><stop offset="0.0526" stop-color="#29fff4"/><stop offset="0.105" stop-color="#60fffe"/><stop offset="0.158" stop-color="#99f5ff"/><stop offset="0.211" stop-color="#d3eaff"/><stop offset="0.263" stop-color="#ffd1f0"/><stop offset="0.316" stop-color="#ffa0c3"/><stop offset="0.368" stop-color="#ff7ea3"/><stop offset="0.421" stop-color="#ff648b"/><stop offset="0.474" stop-color="#ff5179"/><stop offset="0.526" stop-color="#ff416a"/><stop offset="0.579" stop-color="#ff345f"/><stop offset="0.632" stop-color="#ff2a55"/><stop offset="0.684" stop-color="#ff214c"/><stop offset="0.737" stop-color="#ff1945"/><stop offset="0.789" stop-color="#ff123f"/><stop offset="0.842" stop-color="#ff0c3a"/><stop offset="0.895" stop-color="#ff0735"/><stop offset="0.947" stop-color="#ff0331"/><stop offset="1" stop-color="#ff002d"/></linearGradient><linearGradient id="b26" gradientUnits="userSpaceOnUse" x1="1289.3" y1="0" x2="1607.9" y2="0"><stop offset="0" stop-color="#00fff8"/><stop offset="0.0526" stop-color="#28fcff"/><stop offset="0.105" stop-color="#5bf2ff"/><stop offset="0.158" stop-color="#90e8ff"/><stop offset="0.211" stop-color="#c7ddff"/><stop offset="0.263" stop-color="#ffd1fe"/><stop offset="0.316" stop-color="#ffa0cf"/><stop offset="0.368" stop-color="#ff7ead"/><stop offset="0.421" stop-color="#ff6494"/><stop offset="0.474" stop-color="#ff5181"/><stop offset="0.526" stop-color="#ff4171"/><stop offset="0.579" stop-color="#ff3465"/><stop offset="0.632" stop-color="#ff2a5a"/><stop offset="0.684" stop-color="#ff2152"/><stop offset="0.737" stop-color="#ff194a"/><stop offset="0.789" stop-color="#ff1244"/><stop offset="0.842" stop-color="#ff0c3e"/><stop offset="0.895" stop-color="#ff0739"/><stop offset="0.947" stop-color="#ff0335"/><stop offset="1" stop-color="#ff0031"/></linearGradient><linearGradient id="b27" gradientUnits="userSpaceOnUse" x1="1289.9" y1="0" x2="1604.2" y2="0"><stop offset="0" stop-color="#00f9ff"/><stop offset="0.0526" stop-color="#26f0ff"/><stop offset="0.105" stop-color="#56e6ff"/><stop offset="0.158" stop-color="#88dbff"/><stop offset="0.211" stop-color="#bcd1ff"/><stop offset="0.263" stop-color="#f2c6ff"/><stop offset="0.316" stop-color="#ffa0db"/><stop offset="0.368" stop-color="#ff7eb8"/><stop offset="0.421" stop-color="#ff649d"/><stop offset="0.474" stop-color="#ff5189"/><stop offset="0.526" stop-color="#ff4179"/><stop offset="0.579" stop-color="#ff346b"/><stop offset="0.632" stop-color="#ff2a60"/><stop offset="0.684" stop-color="#ff2157"/><stop offset="0.737" stop-color="#ff194f"/><stop offset="0.789" stop-color="#ff1248"/><stop offset="0.842" stop-color="#ff0c42"/><stop offset="0.895" stop-color="#ff073d"/><stop offset="0.947" stop-color="#ff0338"/><stop offset="1" stop-color="#ff0034"/></linearGradient><linearGradient id="b28" gradientUnits="userSpaceOnUse" x1="1290.4" y1="0" x2="1600.6" y2="0"><stop offset="0" stop-color="#00edff"/><stop offset="0.0526" stop-color="#24e4ff"/><stop offset="0.105" stop-color="#52daff"/><stop offset="0.158" stop-color="#81d0ff"/><stop offset="0.211" stop-color="#b2c6ff"/><stop offset="0.263" stop-color="#e5bbff"/><stop offset="0.316" stop-color="#ffa0e8"/><stop offset="0.368" stop-color="#ff7ec2"/><stop offset="0.421" stop-color="#ff64a7"/><stop offset="0.474" stop-color="#ff5191"/><stop offset="0.526" stop-color="#ff4180"/><stop offset="0.579" stop-color="#ff3472"/><stop offset="0.632" stop-color="#ff2a67"/><stop offset="0.684" stop-color="#ff215d"/><stop offset="0.737" stop-color="#ff1955"/><stop offset="0.789" stop-color="#ff124d"/><stop offset="0.842" stop-color="#ff0c47"/><stop offset="0.895" stop-color="#ff0741"/><stop offset="0.947" stop-color="#ff033d"/><stop offset="1" stop-color="#ff0038"/></linearGradient><linearGradient id="b29" gradientUnits="userSpaceOnUse" x1="1291.0" y1="0" x2="1596.9" y2="0"><stop offset="0" stop-color="#00e1ff"/><stop offset="0.0556" stop-color="#24d8ff"/><stop offset="0.111" stop-color="#53ceff"/><stop offset="0.167" stop-color="#82c4ff"/><stop offset="0.222" stop-color="#b3baff"/><stop offset="0.278" stop-color="#e6afff"/><stop offset="0.333" stop-color="#ff94e6"/><stop offset="0.389" stop-color="#ff73c1"/><stop offset="0.444" stop-color="#ff5ba5"/><stop offset="0.5" stop-color="#ff4890"/><stop offset="0.556" stop-color="#ff3a7f"/><stop offset="0.611" stop-color="#ff2d71"/><stop offset="0.667" stop-color="#ff2366"/><stop offset="0.722" stop-color="#ff1b5c"/><stop offset="0.778" stop-color="#ff1454"/><stop offset="0.833" stop-color="#ff0d4d"/><stop offset="0.889" stop-color="#ff0847"/><stop offset="0.944" stop-color="#ff0341"/><stop offset="1" stop-color="#ff003c"/></linearGradient><linearGradient id="b30" gradientUnits="userSpaceOnUse" x1="1291.6" y1="0" x2="1593.2" y2="0"><stop offset="0" stop-color="#00d7ff"/><stop offset="0.0556" stop-color="#23ceff"/><stop offset="0.111" stop-color="#4fc4ff"/><stop offset="0.167" stop-color="#7cbaff"/><stop offset="0.222" stop-color="#aab0ff"/><stop offset="0.278" stop-color="#daa6ff"/><stop offset="0.333" stop-color="#ff94f3"/><stop offset="0.389" stop-color="#ff73cc"/><stop offset="0.444" stop-color="#ff5baf"/><stop offset="0.5" stop-color="#ff4898"/><stop offset="0.556" stop-color="#ff3a87"/><stop offset="0.611" stop-color="#ff2d78"/><stop offset="0.667" stop-color="#ff236c"/><stop offset="0.722" stop-color="#ff1b62"/><stop offset="0.778" stop-color="#ff1459"/><stop offset="0.833" stop-color="#ff0d52"/><stop offset="0.889" stop-color="#ff084b"/><stop offset="0.944" stop-color="#ff0345"/><stop offset="1" stop-color="#ff0040"/></linearGradient><linearGradient id="b31" gradientUnits="userSpaceOnUse" x1="1292.2" y1="0" x2="1589.6" y2="0"><stop offset="0" stop-color="#00cdff"/><stop offset="0.0556" stop-color="#21c4ff"/><stop offset="0.111" stop-color="#4bbbff"/><stop offset="0.167" stop-color="#76b1ff"/><stop offset="0.222" stop-color="#a2a8ff"/><stop offset="0.278" stop-color="#cf9eff"/><stop offset="0.333" stop-color="#fe93ff"/><stop offset="0.389" stop-color="#ff73d7"/><stop offset="0.444" stop-color="#ff5bb8"/><stop offset="0.5" stop-color="#ff48a1"/><stop offset="0.556" stop-color="#ff3a8e"/><stop offset="0.611" stop-color="#ff2d7f"/><stop offset="0.667" stop-color="#ff2372"/><stop offset="0.722" stop-color="#ff1b68"/><stop offset="0.778" stop-color="#ff145f"/><stop offset="0.833" stop-color="#ff0d57"/><stop offset="0.889" stop-color="#ff0850"/><stop offset="0.944" stop-color="#ff034a"/><stop offset="1" stop-color="#ff0044"/></linearGradient><linearGradient id="b32" gradientUnits="userSpaceOnUse" x1="1292.8" y1="0" x2="1585.9" y2="0"><stop offset="0" stop-color="#00c4ff"/><stop offset="0.0556" stop-color="#1fbbff"/><stop offset="0.111" stop-color="#47b2ff"/><stop offset="0.167" stop-color="#70a9ff"/><stop offset="0.222" stop-color="#9aa0ff"/><stop offset="0.278" stop-color="#c596ff"/><stop offset="0.333" stop-color="#f28cff"/><stop offset="0.389" stop-color="#ff73e2"/><stop offset="0.444" stop-color="#ff5bc2"/><stop offset="0.5" stop-color="#ff48aa"/><stop offset="0.556" stop-color="#ff3a96"/><stop offset="0.611" stop-color="#ff2d86"/><stop offset="0.667" stop-color="#ff2379"/><stop offset="0.722" stop-color="#ff1b6e"/><stop offset="0.778" stop-color="#ff1464"/><stop offset="0.833" stop-color="#ff0d5c"/><stop offset="0.889" stop-color="#ff0855"/><stop offset="0.944" stop-color="#ff034e"/><stop offset="1" stop-color="#ff0049"/></linearGradient><linearGradient id="b33" gradientUnits="userSpaceOnUse" x1="1293.4" y1="0" x2="1582.3" y2="0"><stop offset="0" stop-color="#00bbff"/><stop offset="0.0588" stop-color="#20b2ff"/><stop offset="0.118" stop-color="#48a9ff"/><stop offset="0.176" stop-color="#72a0ff"/><stop offset="0.235" stop-color="#9c96ff"/><stop offset="0.294" stop-color="#c88cff"/><stop offset="0.353" stop-color="#f582ff"/><stop offset="0.412" stop-color="#ff69df"/><stop offset="0.471" stop-color="#ff52c0"/><stop offset="0.529" stop-color="#ff40a7"/><stop offset="0.588" stop-color="#ff3294"/><stop offset="0.647" stop-color="#ff2784"/><stop offset="0.706" stop-color="#ff1d77"/><stop offset="0.765" stop-color="#ff156c"/><stop offset="0.824" stop-color="#ff0e63"/><stop offset="0.882" stop-color="#ff085b"/><stop offset="0.941" stop-color="#ff0353"/><stop offset="1" stop-color="#ff004d"/></linearGradient><linearGradient id="b34" gradientUnits="userSpaceOnUse" x1="1294.0" y1="0" x2="1578.6" y2="0"><stop offset="0" stop-color="#00b3ff"/><stop offset="0.0588" stop-color="#1eaaff"/><stop offset="0.118" stop-color="#45a1ff"/><stop offset="0.176" stop-color="#6c98ff"/><stop offset="0.235" stop-color="#958fff"/><stop offset="0.294" stop-color="#bf86ff"/><stop offset="0.353" stop-color="#e97cff"/><stop offset="0.412" stop-color="#ff69ea"/><stop offset="0.471" stop-color="#ff52ca"/><stop offset="0.529" stop-color="#ff40b0"/><stop offset="0.588" stop-color="#ff329c"/><stop offset="0.647" stop-color="#ff278b"/><stop offset="0.706" stop-color="#ff1d7e"/><stop offset="0.765" stop-color="#ff1572"/><stop offset="0.824" stop-color="#ff0e68"/><stop offset="0.882" stop-color="#ff0860"/><stop offset="0.941" stop-color="#ff0358"/><stop offset="1" stop-color="#ff0052"/></linearGradient><linearGradient id="b35" gradientUnits="userSpaceOnUse" x1="1294.6" y1="0" x2="1575.0" y2="0"><stop offset="0" stop-color="#00abff"/><stop offset="0.0588" stop-color="#1da3ff"/><stop offset="0.118" stop-color="#429aff"/><stop offset="0.176" stop-color="#6791ff"/><stop offset="0.235" stop-color="#8e89ff"/><stop offset="0.294" stop-color="#b67fff"/><stop offset="0.353" stop-color="#de76ff"/><stop offset="0.412" stop-color="#ff69f6"/><stop offset="0.471" stop-color="#ff52d4"/><stop offset="0.529" stop-color="#ff40b9"/><stop offset="0.588" stop-color="#ff32a4"/><stop offset="0.647" stop-color="#ff2793"/><stop offset="0.706" stop-color="#ff1d85"/><stop offset="0.765" stop-color="#ff1578"/><stop offset="0.824" stop-color="#ff0e6e"/><stop offset="0.882" stop-color="#ff0865"/><stop offset="0.941" stop-color="#ff035d"/><stop offset="1" stop-color="#ff0056"/></linearGradient><linearGradient id="b36" gradientUnits="userSpaceOnUse" x1="1295.2" y1="0" x2="1571.3" y2="0"><stop offset="0" stop-color="#00a4ff"/><stop offset="0.0588" stop-color="#1c9cff"/><stop offset="0.118" stop-color="#3f93ff"/><stop offset="0.176" stop-color="#638bff"/><stop offset="0.235" stop-color="#8882ff"/><stop offset="0.294" stop-color="#ad7aff"/><stop offset="0.353" stop-color="#d471ff"/><stop offset="0.412" stop-color="#fc67ff"/><stop offset="0.471" stop-color="#ff52de"/><stop offset="0.529" stop-color="#ff40c3"/><stop offset="0.588" stop-color="#ff32ac"/><stop offset="0.647" stop-color="#ff279a"/><stop offset="0.706" stop-color="#ff1d8b"/><stop offset="0.765" stop-color="#ff157f"/><stop offset="0.824" stop-color="#ff0e74"/><stop offset="0.882" stop-color="#ff086b"/><stop offset="0.941" stop-color="#ff0363"/><stop offset="1" stop-color="#ff005b"/></linearGradient><linearGradient id="b37" gradientUnits="userSpaceOnUse" x1="1295.8" y1="0" x2="1567.6" y2="0"><stop offset="0" stop-color="#009dff"/><stop offset="0.0625" stop-color="#1c94ff"/><stop offset="0.125" stop-color="#408cff"/><stop offset="0.188" stop-color="#6583ff"/><stop offset="0.25" stop-color="#8a7aff"/><stop offset="0.312" stop-color="#b171ff"/><stop offset="0.375" stop-color="#d868ff"/><stop offset="0.438" stop-color="#ff5efd"/><stop offset="0.5" stop-color="#ff48da"/><stop offset="0.562" stop-color="#ff38bf"/><stop offset="0.625" stop-color="#ff2ba9"/><stop offset="0.688" stop-color="#ff2097"/><stop offset="0.75" stop-color="#ff1789"/><stop offset="0.812" stop-color="#ff0f7c"/><stop offset="0.875" stop-color="#ff0972"/><stop offset="0.938" stop-color="#ff0368"/><stop offset="1" stop-color="#ff0060"/></linearGradient><linearGradient id="b38" gradientUnits="userSpaceOnUse" x1="1296.4" y1="0" x2="1564.0" y2="0"><stop offset="0" stop-color="#0096ff"/><stop offset="0.0625" stop-color="#1b8eff"/><stop offset="0.125" stop-color="#3d86ff"/><stop offset="0.188" stop-color="#607eff"/><stop offset="0.25" stop-color="#8475ff"/><stop offset="0.312" stop-color="#a96cff"/><stop offset="0.375" stop-color="#cf63ff"/><stop offset="0.438" stop-color="#f55aff"/><stop offset="0.5" stop-color="#ff48e4"/><stop offset="0.562" stop-color="#ff38c8"/><stop offset="0.625" stop-color="#ff2bb1"/><stop offset="0.688" stop-color="#ff209f"/><stop offset="0.75" stop-color="#ff1790"/><stop offset="0.812" stop-color="#ff0f83"/><stop offset="0.875" stop-color="#ff0977"/><stop offset="0.938" stop-color="#ff036e"/><stop offset="1" stop-color="#ff0066"/></linearGradient><linearGradient id="b39" gradientUnits="userSpaceOnUse" x1="1297.0" y1="0" x2="1560.3" y2="0"><stop offset="0" stop-color="#0090ff"/><stop offset="0.0625" stop-color="#1a88ff"/><stop offset="0.125" stop-color="#3b80ff"/><stop offset="0.188" stop-color="#5c78ff"/><stop offset="0.25" stop-color="#7e70ff"/><stop offset="0.312" stop-color="#a168ff"/><stop offset="0.375" stop-color="#c55fff"/><stop offset="0.438" stop-color="#ea56ff"/><stop offset="0.5" stop-color="#ff48ef"/><stop offset="0.562" stop-color="#ff38d2"/><stop offset="0.625" stop-color="#ff2bba"/><stop offset="0.688" stop-color="#ff20a7"/><stop offset="0.75" stop-color="#ff1797"/><stop offset="0.812" stop-color="#ff0f89"/><stop offset="0.875" stop-color="#ff097e"/><stop offset="0.938" stop-color="#ff0374"/><stop offset="1" stop-color="#ff006b"/></linearGradient><linearGradient id="b40" gradientUnits="userSpaceOnUse" x1="1297.6" y1="0" x2="1556.7" y2="0"><stop offset="0" stop-color="#008aff"/><stop offset="0.0625" stop-color="#1982ff"/><stop offset="0.125" stop-color="#387bff"/><stop offset="0.188" stop-color="#5873ff"/><stop offset="0.25" stop-color="#796bff"/><stop offset="0.312" stop-color="#9a63ff"/><stop offset="0.375" stop-color="#bd5bff"/><stop offset="0.438" stop-color="#e052ff"/><stop offset="0.5" stop-color="#ff48fb"/><stop offset="0.562" stop-color="#ff38dc"/><stop offset="0.625" stop-color="#ff2bc3"/><stop offset="0.688" stop-color="#ff20af"/><stop offset="0.75" stop-color="#ff179e"/><stop offset="0.812" stop-color="#ff0f90"/><stop offset="0.875" stop-color="#ff0984"/><stop offset="0.938" stop-color="#ff037a"/><stop offset="1" stop-color="#ff0070"/></linearGradient><linearGradient id="b41" gradientUnits="userSpaceOnUse" x1="1298.2" y1="0" x2="1553.0" y2="0"><stop offset="0" stop-color="#0084ff"/><stop offset="0.0667" stop-color="#1a7dff"/><stop offset="0.133" stop-color="#3a75ff"/><stop offset="0.2" stop-color="#5b6dff"/><stop offset="0.267" stop-color="#7c65ff"/><stop offset="0.333" stop-color="#9f5cff"/><stop offset="0.4" stop-color="#c254ff"/><stop offset="0.467" stop-color="#e64bff"/><stop offset="0.533" stop-color="#ff3ff4"/><stop offset="0.6" stop-color="#ff30d6"/><stop offset="0.667" stop-color="#ff23be"/><stop offset="0.733" stop-color="#ff19aa"/><stop offset="0.8" stop-color="#ff119a"/><stop offset="0.867" stop-color="#ff0a8c"/><stop offset="0.933" stop-color="#ff0480"/><stop offset="1" stop-color="#ff0076"/></linearGradient><linearGradient id="b42" gradientUnits="userSpaceOnUse" x1="1298.8" y1="0" x2="1549.3" y2="0"><stop offset="0" stop-color="#007fff"/><stop offset="0.0667" stop-color="#1878ff"/><stop offset="0.133" stop-color="#3770ff"/><stop offset="0.2" stop-color="#5768ff"/><stop offset="0.267" stop-color="#7760ff"/><stop offset="0.333" stop-color="#9858ff"/><stop offset="0.4" stop-color="#b950ff"/><stop offset="0.467" stop-color="#dc48ff"/><stop offset="0.533" stop-color="#ff3fff"/><stop offset="0.6" stop-color="#ff30e0"/><stop offset="0.667" stop-color="#ff23c7"/><stop offset="0.733" stop-color="#ff19b2"/><stop offset="0.8" stop-color="#ff11a1"/><stop offset="0.867" stop-color="#ff0a93"/><stop offset="0.933" stop-color="#ff0487"/><stop offset="1" stop-color="#ff007c"/></linearGradient><linearGradient id="b43" gradientUnits="userSpaceOnUse" x1="1299.4" y1="0" x2="1545.7" y2="0"><stop offset="0" stop-color="#007aff"/><stop offset="0.0667" stop-color="#1773ff"/><stop offset="0.133" stop-color="#356bff"/><stop offset="0.2" stop-color="#5364ff"/><stop offset="0.267" stop-color="#725cff"/><stop offset="0.333" stop-color="#9155ff"/><stop offset="0.4" stop-color="#b14dff"/><stop offset="0.467" stop-color="#d244ff"/><stop offset="0.533" stop-color="#f43cff"/><stop offset="0.6" stop-color="#ff30ea"/><stop offset="0.667" stop-color="#ff23d0"/><stop offset="0.733" stop-color="#ff19bb"/><stop offset="0.8" stop-color="#ff11a9"/><stop offset="0.867" stop-color="#ff0a9a"/><stop offset="0.933" stop-color="#ff048d"/><stop offset="1" stop-color="#ff0082"/></linearGradient><linearGradient id="b44" gradientUnits="userSpaceOnUse" x1="1300.0" y1="0" x2="1542.0" y2="0"><stop offset="0" stop-color="#0075ff"/><stop offset="0.0667" stop-color="#166eff"/><stop offset="0.133" stop-color="#3367ff"/><stop offset="0.2" stop-color="#5060ff"/><stop offset="0.267" stop-color="#6d58ff"/><stop offset="0.333" stop-color="#8b51ff"/><stop offset="0.4" stop-color="#aa49ff"/><stop offset="0.467" stop-color="#c942ff"/><stop offset="0.533" stop-color="#e93aff"/><stop offset="0.6" stop-color="#ff30f5"/><stop offset="0.667" stop-color="#ff23da"/><stop offset="0.733" stop-color="#ff19c3"/><stop offset="0.8" stop-color="#ff11b1"/><stop offset="0.867" stop-color="#ff0aa1"/><stop offset="0.933" stop-color="#ff0494"/><stop offset="1" stop-color="#ff0089"/></linearGradient><linearGradient id="b45" gradientUnits="userSpaceOnUse" x1="1300.6" y1="0" x2="1538.4" y2="0"><stop offset="0" stop-color="#0070ff"/><stop offset="0.0714" stop-color="#1769ff"/><stop offset="0.143" stop-color="#3462ff"/><stop offset="0.214" stop-color="#525aff"/><stop offset="0.286" stop-color="#7153ff"/><stop offset="0.357" stop-color="#904bff"/><stop offset="0.429" stop-color="#af43ff"/><stop offset="0.5" stop-color="#d03bff"/><stop offset="0.571" stop-color="#f133ff"/><stop offset="0.643" stop-color="#ff27ed"/><stop offset="0.714" stop-color="#ff1cd3"/><stop offset="0.786" stop-color="#ff12bd"/><stop offset="0.857" stop-color="#ff0bab"/><stop offset="0.929" stop-color="#ff049c"/><stop offset="1" stop-color="#ff008f"/></linearGradient><linearGradient id="b46" gradientUnits="userSpaceOnUse" x1="1301.2" y1="0" x2="1534.7" y2="0"><stop offset="0" stop-color="#006cff"/><stop offset="0.0714" stop-color="#1665ff"/><stop offset="0.143" stop-color="#325eff"/><stop offset="0.214" stop-color="#4f57ff"/><stop offset="0.286" stop-color="#6c4fff"/><stop offset="0.357" stop-color="#8a48ff"/><stop offset="0.429" stop-color="#a840ff"/><stop offset="0.5" stop-color="#c738ff"/><stop offset="0.571" stop-color="#e630ff"/><stop offset="0.643" stop-color="#ff27f8"/><stop offset="0.714" stop-color="#ff1cdc"/><stop offset="0.786" stop-color="#ff12c6"/><stop offset="0.857" stop-color="#ff0bb3"/><stop offset="0.929" stop-color="#ff04a3"/><stop offset="1" stop-color="#ff0096"/></linearGradient><linearGradient id="b47" gradientUnits="userSpaceOnUse" x1="1301.8" y1="0" x2="1531.0" y2="0"><stop offset="0" stop-color="#0068ff"/><stop offset="0.0714" stop-color="#1561ff"/><stop offset="0.143" stop-color="#305aff"/><stop offset="0.214" stop-color="#4b53ff"/><stop offset="0.286" stop-color="#674cff"/><stop offset="0.357" stop-color="#8445ff"/><stop offset="0.429" stop-color="#a13eff"/><stop offset="0.5" stop-color="#be36ff"/><stop offset="0.571" stop-color="#dc2eff"/><stop offset="0.643" stop-color="#fb27ff"/><stop offset="0.714" stop-color="#ff1ce6"/><stop offset="0.786" stop-color="#ff12cf"/><stop offset="0.857" stop-color="#ff0bbb"/><stop offset="0.929" stop-color="#ff04ab"/><stop offset="1" stop-color="#ff009d"/></linearGradient><linearGradient id="b48" gradientUnits="userSpaceOnUse" x1="1302.4" y1="0" x2="1527.4" y2="0"><stop offset="0" stop-color="#0064ff"/><stop offset="0.0714" stop-color="#145dff"/><stop offset="0.143" stop-color="#2e56ff"/><stop offset="0.214" stop-color="#4850ff"/><stop offset="0.286" stop-color="#6349ff"/><stop offset="0.357" stop-color="#7e42ff"/><stop offset="0.429" stop-color="#9a3bff"/><stop offset="0.5" stop-color="#b634ff"/><stop offset="0.571" stop-color="#d32cff"/><stop offset="0.643" stop-color="#f025ff"/><stop offset="0.714" stop-color="#ff1cf1"/><stop offset="0.786" stop-color="#ff12d8"/><stop offset="0.857" stop-color="#ff0bc4"/><stop offset="0.929" stop-color="#ff04b3"/><stop offset="1" stop-color="#ff00a4"/></linearGradient><linearGradient id="b49" gradientUnits="userSpaceOnUse" x1="1302.9" y1="0" x2="1523.7" y2="0"><stop offset="0" stop-color="#0060ff"/><stop offset="0.0769" stop-color="#1559ff"/><stop offset="0.154" stop-color="#3052ff"/><stop offset="0.231" stop-color="#4b4bff"/><stop offset="0.308" stop-color="#6744ff"/><stop offset="0.385" stop-color="#833dff"/><stop offset="0.462" stop-color="#a035ff"/><stop offset="0.538" stop-color="#bd2eff"/><stop offset="0.615" stop-color="#db26ff"/><stop offset="0.692" stop-color="#fa1eff"/><stop offset="0.769" stop-color="#ff14e7"/><stop offset="0.846" stop-color="#ff0cd0"/><stop offset="0.923" stop-color="#ff04bd"/><stop offset="1" stop-color="#ff00ac"/></linearGradient><linearGradient id="b50" gradientUnits="userSpaceOnUse" x1="1303.5" y1="0" x2="1520.1" y2="0"><stop offset="0" stop-color="#005cff"/><stop offset="0.0769" stop-color="#1455ff"/><stop offset="0.154" stop-color="#2e4fff"/><stop offset="0.231" stop-color="#4848ff"/><stop offset="0.308" stop-color="#6341ff"/><stop offset="0.385" stop-color="#7e3aff"/><stop offset="0.462" stop-color="#9933ff"/><stop offset="0.538" stop-color="#b52cff"/><stop offset="0.615" stop-color="#d224ff"/><stop offset="0.692" stop-color="#ef1dff"/><stop offset="0.769" stop-color="#ff14f2"/><stop offset="0.846" stop-color="#ff0cd9"/><stop offset="0.923" stop-color="#ff04c5"/><stop offset="1" stop-color="#ff00b4"/></linearGradient><linearGradient id="b51" gradientUnits="userSpaceOnUse" x1="1304.1" y1="0" x2="1516.4" y2="0"><stop offset="0" stop-color="#0058ff"/><stop offset="0.0769" stop-color="#1352ff"/><stop offset="0.154" stop-color="#2c4cff"/><stop offset="0.231" stop-color="#4545ff"/><stop offset="0.308" stop-color="#5f3fff"/><stop offset="0.385" stop-color="#7938ff"/><stop offset="0.462" stop-color="#9331ff"/><stop offset="0.538" stop-color="#ae2aff"/><stop offset="0.615" stop-color="#c923ff"/><stop offset="0.692" stop-color="#e51cff"/><stop offset="0.769" stop-color="#ff14fd"/><stop offset="0.846" stop-color="#ff0ce3"/><stop offset="0.923" stop-color="#ff04ce"/><stop offset="1" stop-color="#ff00bc"/></linearGradient><linearGradient id="b52" gradientUnits="userSpaceOnUse" x1="1304.7" y1="0" x2="1512.8" y2="0"><stop offset="0" stop-color="#0055ff"/><stop offset="0.0769" stop-color="#134fff"/><stop offset="0.154" stop-color="#2a49ff"/><stop offset="0.231" stop-color="#4242ff"/><stop offset="0.308" stop-color="#5b3cff"/><stop offset="0.385" stop-color="#7435ff"/><stop offset="0.462" stop-color="#8d2fff"/><stop offset="0.538" stop-color="#a728ff"/><stop offset="0.615" stop-color="#c121ff"/><stop offset="0.692" stop-color="#db1bff"/><stop offset="0.769" stop-color="#f614ff"/><stop offset="0.846" stop-color="#ff0ced"/><stop offset="0.923" stop-color="#ff04d7"/><stop offset="1" stop-color="#ff00c5"/></linearGradient><linearGradient id="b53" gradientUnits="userSpaceOnUse" x1="1305.3" y1="0" x2="1509.1" y2="0"><stop offset="0" stop-color="#0051ff"/><stop offset="0.0833" stop-color="#144bff"/><stop offset="0.167" stop-color="#2c45ff"/><stop offset="0.25" stop-color="#453eff"/><stop offset="0.333" stop-color="#5f37ff"/><stop offset="0.417" stop-color="#7931ff"/><stop offset="0.5" stop-color="#932aff"/><stop offset="0.583" stop-color="#ae23ff"/><stop offset="0.667" stop-color="#c91cff"/><stop offset="0.75" stop-color="#e514ff"/><stop offset="0.833" stop-color="#ff0dfc"/><stop offset="0.917" stop-color="#ff05e3"/><stop offset="1" stop-color="#ff00ce"/></linearGradient><linearGradient id="b54" gradientUnits="userSpaceOnUse" x1="1305.9" y1="0" x2="1505.4" y2="0"><stop offset="0" stop-color="#004eff"/><stop offset="0.0833" stop-color="#1348ff"/><stop offset="0.167" stop-color="#2a42ff"/><stop offset="0.25" stop-color="#423cff"/><stop offset="0.333" stop-color="#5b35ff"/><stop offset="0.417" stop-color="#742fff"/><stop offset="0.5" stop-color="#8d28ff"/><stop offset="0.583" stop-color="#a721ff"/><stop offset="0.667" stop-color="#c11aff"/><stop offset="0.75" stop-color="#dc13ff"/><stop offset="0.833" stop-color="#f70cff"/><stop offset="0.917" stop-color="#ff05ed"/><stop offset="1" stop-color="#ff00d7"/></linearGradient><linearGradient id="b55" gradientUnits="userSpaceOnUse" x1="1306.5" y1="0" x2="1501.8" y2="0"><stop offset="0" stop-color="#004bff"/><stop offset="0.0833" stop-color="#1245ff"/><stop offset="0.167" stop-color="#293fff"/><stop offset="0.25" stop-color="#4039ff"/><stop offset="0.333" stop-color="#5733ff"/><stop offset="0.417" stop-color="#6f2dff"/><stop offset="0.5" stop-color="#8726ff"/><stop offset="0.583" stop-color="#a020ff"/><stop offset="0.667" stop-color="#b919ff"/><stop offset="0.75" stop-color="#d213ff"/><stop offset="0.833" stop-color="#ec0cff"/><stop offset="0.917" stop-color="#ff05f8"/><stop offset="1" stop-color="#ff00e1"/></linearGradient><linearGradient id="b56" gradientUnits="userSpaceOnUse" x1="1307.1" y1="0" x2="1498.1" y2="0"><stop offset="0" stop-color="#0048ff"/><stop offset="0.0833" stop-color="#1142ff"/><stop offset="0.167" stop-color="#273dff"/><stop offset="0.25" stop-color="#3d37ff"/><stop offset="0.333" stop-color="#5431ff"/><stop offset="0.417" stop-color="#6a2bff"/><stop offset="0.5" stop-color="#8225ff"/><stop offset="0.583" stop-color="#991fff"/><stop offset="0.667" stop-color="#b118ff"/><stop offset="0.75" stop-color="#c912ff"/><stop offset="0.833" stop-color="#e20bff"/><stop offset="0.917" stop-color="#fb05ff"/><stop offset="1" stop-color="#ff00eb"/></linearGradient><linearGradient id="b57" gradientUnits="userSpaceOnUse" x1="1307.7" y1="0" x2="1494.5" y2="0"><stop offset="0" stop-color="#0045ff"/><stop offset="0.0909" stop-color="#123fff"/><stop offset="0.182" stop-color="#2939ff"/><stop offset="0.273" stop-color="#4033ff"/><stop offset="0.364" stop-color="#582dff"/><stop offset="0.455" stop-color="#7026ff"/><stop offset="0.545" stop-color="#8820ff"/><stop offset="0.636" stop-color="#a119ff"/><stop offset="0.727" stop-color="#ba13ff"/><stop offset="0.818" stop-color="#d40cff"/><stop offset="0.909" stop-color="#ee05ff"/><stop offset="1" stop-color="#ff00f6"/></linearGradient><linearGradient id="b58" gradientUnits="userSpaceOnUse" x1="1308.3" y1="0" x2="1490.8" y2="0"><stop offset="0" stop-color="#0042ff"/><stop offset="0.0909" stop-color="#113dff"/><stop offset="0.182" stop-color="#2737ff"/><stop offset="0.273" stop-color="#3e31ff"/><stop offset="0.364" stop-color="#542bff"/><stop offset="0.455" stop-color="#6b25ff"/><stop offset="0.545" stop-color="#831fff"/><stop offset="0.636" stop-color="#9a18ff"/><stop offset="0.727" stop-color="#b212ff"/><stop offset="0.818" stop-color="#cb0bff"/><stop offset="0.909" stop-color="#e405ff"/><stop offset="1" stop-color="#fd00ff"/></linearGradient><linearGradient id="b59" gradientUnits="userSpaceOnUse" x1="1308.9" y1="0" x2="1487.1" y2="0"><stop offset="0" stop-color="#0040ff"/><stop offset="0.0909" stop-color="#113aff"/><stop offset="0.182" stop-color="#2635ff"/><stop offset="0.273" stop-color="#3b2fff"/><stop offset="0.364" stop-color="#5129ff"/><stop offset="0.455" stop-color="#6723ff"/><stop offset="0.545" stop-color="#7d1dff"/><stop offset="0.636" stop-color="#9417ff"/><stop offset="0.727" stop-color="#ab11ff"/><stop offset="0.818" stop-color="#c20bff"/><stop offset="0.909" stop-color="#da05ff"/><stop offset="1" stop-color="#f200ff"/></linearGradient><linearGradient id="b60" gradientUnits="userSpaceOnUse" x1="1309.5" y1="0" x2="1483.5" y2="0"><stop offset="0" stop-color="#003dff"/><stop offset="0.0909" stop-color="#1038ff"/><stop offset="0.182" stop-color="#2432ff"/><stop offset="0.273" stop-color="#382dff"/><stop offset="0.364" stop-color="#4d27ff"/><stop offset="0.455" stop-color="#6222ff"/><stop offset="0.545" stop-color="#781cff"/><stop offset="0.636" stop-color="#8d16ff"/><stop offset="0.727" stop-color="#a310ff"/><stop offset="0.818" stop-color="#ba0aff"/><stop offset="0.909" stop-color="#d004ff"/><stop offset="1" stop-color="#e700ff"/></linearGradient><linearGradient id="b61" gradientUnits="userSpaceOnUse" x1="1310.1" y1="0" x2="1479.8" y2="0"><stop offset="0" stop-color="#003bff"/><stop offset="0.1" stop-color="#1135ff"/><stop offset="0.2" stop-color="#262fff"/><stop offset="0.3" stop-color="#3c29ff"/><stop offset="0.4" stop-color="#5224ff"/><stop offset="0.5" stop-color="#681eff"/><stop offset="0.6" stop-color="#7f17ff"/><stop offset="0.7" stop-color="#9611ff"/><stop offset="0.8" stop-color="#ad0bff"/><stop offset="0.9" stop-color="#c505ff"/><stop offset="1" stop-color="#dd00ff"/></linearGradient><linearGradient id="b62" gradientUnits="userSpaceOnUse" x1="1310.7" y1="0" x2="1476.2" y2="0"><stop offset="0" stop-color="#0038ff"/><stop offset="0.1" stop-color="#1033ff"/><stop offset="0.2" stop-color="#252dff"/><stop offset="0.3" stop-color="#3928ff"/><stop offset="0.4" stop-color="#4e22ff"/><stop offset="0.5" stop-color="#641cff"/><stop offset="0.6" stop-color="#7916ff"/><stop offset="0.7" stop-color="#8f11ff"/><stop offset="0.8" stop-color="#a60bff"/><stop offset="0.9" stop-color="#bc04ff"/><stop offset="1" stop-color="#d300ff"/></linearGradient><linearGradient id="b63" gradientUnits="userSpaceOnUse" x1="1311.3" y1="0" x2="1472.5" y2="0"><stop offset="0" stop-color="#0036ff"/><stop offset="0.1" stop-color="#0f31ff"/><stop offset="0.2" stop-color="#232bff"/><stop offset="0.3" stop-color="#3726ff"/><stop offset="0.4" stop-color="#4b21ff"/><stop offset="0.5" stop-color="#5f1bff"/><stop offset="0.6" stop-color="#7415ff"/><stop offset="0.7" stop-color="#8910ff"/><stop offset="0.8" stop-color="#9e0aff"/><stop offset="0.9" stop-color="#b404ff"/><stop offset="1" stop-color="#ca00ff"/></linearGradient><linearGradient id="b64" gradientUnits="userSpaceOnUse" x1="1311.9" y1="0" x2="1468.8" y2="0"><stop offset="0" stop-color="#0034ff"/><stop offset="0.1" stop-color="#0f2fff"/><stop offset="0.2" stop-color="#212aff"/><stop offset="0.3" stop-color="#3424ff"/><stop offset="0.4" stop-color="#481fff"/><stop offset="0.5" stop-color="#5b1aff"/><stop offset="0.6" stop-color="#6f14ff"/><stop offset="0.7" stop-color="#830fff"/><stop offset="0.8" stop-color="#970aff"/><stop offset="0.9" stop-color="#ac04ff"/><stop offset="1" stop-color="#c100ff"/></linearGradient><linearGradient id="b65" gradientUnits="userSpaceOnUse" x1="1312.5" y1="0" x2="1465.2" y2="0"><stop offset="0" stop-color="#0031ff"/><stop offset="0.111" stop-color="#102cff"/><stop offset="0.222" stop-color="#2427ff"/><stop offset="0.333" stop-color="#3821ff"/><stop offset="0.444" stop-color="#4d1cff"/><stop offset="0.556" stop-color="#6216ff"/><stop offset="0.667" stop-color="#7710ff"/><stop offset="0.778" stop-color="#8c0aff"/><stop offset="0.889" stop-color="#a204ff"/><stop offset="1" stop-color="#b800ff"/></linearGradient><linearGradient id="b66" gradientUnits="userSpaceOnUse" x1="1313.1" y1="0" x2="1461.5" y2="0"><stop offset="0" stop-color="#002fff"/><stop offset="0.111" stop-color="#0f2aff"/><stop offset="0.222" stop-color="#2225ff"/><stop offset="0.333" stop-color="#3620ff"/><stop offset="0.444" stop-color="#491aff"/><stop offset="0.556" stop-color="#5d15ff"/><stop offset="0.667" stop-color="#710fff"/><stop offset="0.778" stop-color="#860aff"/><stop offset="0.889" stop-color="#9a04ff"/><stop offset="1" stop-color="#af00ff"/></linearGradient><linearGradient id="b67" gradientUnits="userSpaceOnUse" x1="1313.7" y1="0" x2="1457.9" y2="0"><stop offset="0" stop-color="#002dff"/><stop offset="0.111" stop-color="#0e28ff"/><stop offset="0.222" stop-color="#2123ff"/><stop offset="0.333" stop-color="#331eff"/><stop offset="0.444" stop-color="#4619ff"/><stop offset="0.556" stop-color="#5914ff"/><stop offset="0.667" stop-color="#6c0fff"/><stop offset="0.778" stop-color="#8009ff"/><stop offset="0.889" stop-color="#9304ff"/><stop offset="1" stop-color="#a700ff"/></linearGradient><linearGradient id="b68" gradientUnits="userSpaceOnUse" x1="1314.3" y1="0" x2="1454.2" y2="0"><stop offset="0" stop-color="#002bff"/><stop offset="0.111" stop-color="#0e26ff"/><stop offset="0.222" stop-color="#1f22ff"/><stop offset="0.333" stop-color="#311dff"/><stop offset="0.444" stop-color="#4318ff"/><stop offset="0.556" stop-color="#5513ff"/><stop offset="0.667" stop-color="#670eff"/><stop offset="0.778" stop-color="#7a09ff"/><stop offset="0.889" stop-color="#8c04ff"/><stop offset="1" stop-color="#9f00ff"/></linearGradient><linearGradient id="b69" gradientUnits="userSpaceOnUse" x1="1314.9" y1="0" x2="1450.6" y2="0"><stop offset="0" stop-color="#0029ff"/><stop offset="0.125" stop-color="#0f24ff"/><stop offset="0.25" stop-color="#221fff"/><stop offset="0.375" stop-color="#351aff"/><stop offset="0.5" stop-color="#4814ff"/><stop offset="0.625" stop-color="#5c0fff"/><stop offset="0.75" stop-color="#6f0aff"/><stop offset="0.875" stop-color="#8404ff"/><stop offset="1" stop-color="#9800ff"/></linearGradient><linearGradient id="b70" gradientUnits="userSpaceOnUse" x1="1315.4" y1="0" x2="1446.9" y2="0"><stop offset="0" stop-color="#0027ff"/><stop offset="0.125" stop-color="#0e22ff"/><stop offset="0.25" stop-color="#201eff"/><stop offset="0.375" stop-color="#3218ff"/><stop offset="0.5" stop-color="#4513ff"/><stop offset="0.625" stop-color="#570eff"/><stop offset="0.75" stop-color="#6a09ff"/><stop offset="0.875" stop-color="#7d04ff"/><stop offset="1" stop-color="#9100ff"/></linearGradient><linearGradient id="b71" gradientUnits="userSpaceOnUse" x1="1316.0" y1="0" x2="1443.2" y2="0"><stop offset="0" stop-color="#0025ff"/><stop offset="0.125" stop-color="#0d21ff"/><stop offset="0.25" stop-color="#1e1cff"/><stop offset="0.375" stop-color="#3017ff"/><stop offset="0.5" stop-color="#4112ff"/><stop offset="0.625" stop-color="#530eff"/><stop offset="0.75" stop-color="#6509ff"/><stop offset="0.875" stop-color="#7704ff"/><stop offset="1" stop-color="#8900ff"/></linearGradient><linearGradient id="b72" gradientUnits="userSpaceOnUse" x1="1316.6" y1="0" x2="1439.6" y2="0"><stop offset="0" stop-color="#0024ff"/><stop offset="0.125" stop-color="#0d1fff"/><stop offset="0.25" stop-color="#1d1bff"/><stop offset="0.375" stop-color="#2d16ff"/><stop offset="0.5" stop-color="#3e12ff"/><stop offset="0.625" stop-color="#4f0dff"/><stop offset="0.75" stop-color="#6008ff"/><stop offset="0.875" stop-color="#7103ff"/><stop offset="1" stop-color="#8300ff"/></linearGradient><linearGradient id="b73" gradientUnits="userSpaceOnUse" x1="1317.2" y1="0" x2="1435.9" y2="0"><stop offset="0" stop-color="#0022ff"/><stop offset="0.143" stop-color="#0e1dff"/><stop offset="0.286" stop-color="#2018ff"/><stop offset="0.429" stop-color="#3213ff"/><stop offset="0.571" stop-color="#440eff"/><stop offset="0.714" stop-color="#5609ff"/><stop offset="0.857" stop-color="#6904ff"/><stop offset="1" stop-color="#7c00ff"/></linearGradient><linearGradient id="b74" gradientUnits="userSpaceOnUse" x1="1317.8" y1="0" x2="1432.3" y2="0"><stop offset="0" stop-color="#0020ff"/><stop offset="0.143" stop-color="#0d1cff"/><stop offset="0.286" stop-color="#1e17ff"/><stop offset="0.429" stop-color="#2f12ff"/><stop offset="0.571" stop-color="#400dff"/><stop offset="0.714" stop-color="#5209ff"/><stop offset="0.857" stop-color="#6404ff"/><stop offset="1" stop-color="#7500ff"/></linearGradient><linearGradient id="b75" gradientUnits="userSpaceOnUse" x1="1318.4" y1="0" x2="1428.6" y2="0"><stop offset="0" stop-color="#001fff"/><stop offset="0.143" stop-color="#0c1aff"/><stop offset="0.286" stop-color="#1c16ff"/><stop offset="0.429" stop-color="#2d11ff"/><stop offset="0.571" stop-color="#3d0dff"/><stop offset="0.714" stop-color="#4e08ff"/><stop offset="0.857" stop-color="#5e03ff"/><stop offset="1" stop-color="#6f00ff"/></linearGradient><linearGradient id="b76" gradientUnits="userSpaceOnUse" x1="1319.0" y1="0" x2="1424.9" y2="0"><stop offset="0" stop-color="#001dff"/><stop offset="0.143" stop-color="#0c19ff"/><stop offset="0.286" stop-color="#1b15ff"/><stop offset="0.429" stop-color="#2a10ff"/><stop offset="0.571" stop-color="#3a0cff"/><stop offset="0.714" stop-color="#4908ff"/><stop offset="0.857" stop-color="#5903ff"/><stop offset="1" stop-color="#6900ff"/></linearGradient><linearGradient id="b77" gradientUnits="userSpaceOnUse" x1="1319.6" y1="0" x2="1421.3" y2="0"><stop offset="0" stop-color="#001bff"/><stop offset="0.167" stop-color="#0d17ff"/><stop offset="0.333" stop-color="#1e12ff"/><stop offset="0.5" stop-color="#2f0dff"/><stop offset="0.667" stop-color="#4009ff"/><stop offset="0.833" stop-color="#5204ff"/><stop offset="1" stop-color="#6300ff"/></linearGradient><linearGradient id="b78" gradientUnits="userSpaceOnUse" x1="1320.2" y1="0" x2="1417.6" y2="0"><stop offset="0" stop-color="#001aff"/><stop offset="0.167" stop-color="#0c15ff"/><stop offset="0.333" stop-color="#1c11ff"/><stop offset="0.5" stop-color="#2c0dff"/><stop offset="0.667" stop-color="#3d08ff"/><stop offset="0.833" stop-color="#4d03ff"/><stop offset="1" stop-color="#5e00ff"/></linearGradient><linearGradient id="b79" gradientUnits="userSpaceOnUse" x1="1320.8" y1="0" x2="1414.0" y2="0"><stop offset="0" stop-color="#0018ff"/><stop offset="0.167" stop-color="#0c14ff"/><stop offset="0.333" stop-color="#1b10ff"/><stop offset="0.5" stop-color="#2a0cff"/><stop offset="0.667" stop-color="#3907ff"/><stop offset="0.833" stop-color="#4803ff"/><stop offset="1" stop-color="#5800ff"/></linearGradient><linearGradient id="b80" gradientUnits="userSpaceOnUse" x1="1321.4" y1="0" x2="1410.3" y2="0"><stop offset="0" stop-color="#0017ff"/><stop offset="0.167" stop-color="#0b13ff"/><stop offset="0.333" stop-color="#190fff"/><stop offset="0.5" stop-color="#270bff"/><stop offset="0.667" stop-color="#3507ff"/><stop offset="0.833" stop-color="#4403ff"/><stop offset="1" stop-color="#5300ff"/></linearGradient><linearGradient id="b81" gradientUnits="userSpaceOnUse" x1="1322.0" y1="0" x2="1406.7" y2="0"><stop offset="0" stop-color="#0016ff"/><stop offset="0.2" stop-color="#0d11ff"/><stop offset="0.4" stop-color="#1d0dff"/><stop offset="0.6" stop-color="#2d08ff"/><stop offset="0.8" stop-color="#3d03ff"/><stop offset="1" stop-color="#4d00ff"/></linearGradient><linearGradient id="b82" gradientUnits="userSpaceOnUse" x1="1322.6" y1="0" x2="1403.0" y2="0"><stop offset="0" stop-color="#0014ff"/><stop offset="0.2" stop-color="#0c10ff"/><stop offset="0.4" stop-color="#1b0cff"/><stop offset="0.6" stop-color="#2a07ff"/><stop offset="0.8" stop-color="#3903ff"/><stop offset="1" stop-color="#4800ff"/></linearGradient><linearGradient id="b83" gradientUnits="userSpaceOnUse" x1="1323.2" y1="0" x2="1399.3" y2="0"><stop offset="0" stop-color="#0013ff"/><stop offset="0.2" stop-color="#0b0fff"/><stop offset="0.4" stop-color="#190bff"/><stop offset="0.6" stop-color="#2707ff"/><stop offset="0.8" stop-color="#3503ff"/><stop offset="1" stop-color="#4300ff"/></linearGradient><linearGradient id="b84" gradientUnits="userSpaceOnUse" x1="1323.8" y1="0" x2="1395.7" y2="0"><stop offset="0" stop-color="#0011ff"/><stop offset="0.2" stop-color="#0a0eff"/><stop offset="0.4" stop-color="#170aff"/><stop offset="0.6" stop-color="#2406ff"/><stop offset="0.8" stop-color="#3103ff"/><stop offset="1" stop-color="#3f00ff"/></linearGradient><linearGradient id="b85" gradientUnits="userSpaceOnUse" x1="1324.4" y1="0" x2="1392.0" y2="0"><stop offset="0" stop-color="#0010ff"/><stop offset="0.25" stop-color="#0c0cff"/><stop offset="0.5" stop-color="#1b08ff"/><stop offset="0.75" stop-color="#2a03ff"/><stop offset="1" stop-color="#3a00ff"/></linearGradient><linearGradient id="b86" gradientUnits="userSpaceOnUse" x1="1325.0" y1="0" x2="1388.4" y2="0"><stop offset="0" stop-color="#000fff"/><stop offset="0.25" stop-color="#0b0bff"/><stop offset="0.5" stop-color="#1907ff"/><stop offset="0.75" stop-color="#2703ff"/><stop offset="1" stop-color="#3500ff"/></linearGradient><linearGradient id="b87" gradientUnits="userSpaceOnUse" x1="1325.6" y1="0" x2="1384.7" y2="0"><stop offset="0" stop-color="#000eff"/><stop offset="0.25" stop-color="#0a0aff"/><stop offset="0.5" stop-color="#1706ff"/><stop offset="0.75" stop-color="#2403ff"/><stop offset="1" stop-color="#3100ff"/></linearGradient><linearGradient id="b88" gradientUnits="userSpaceOnUse" x1="1326.2" y1="0" x2="1381.0" y2="0"><stop offset="0" stop-color="#000dff"/><stop offset="0.25" stop-color="#0909ff"/><stop offset="0.5" stop-color="#1506ff"/><stop offset="0.75" stop-color="#2102ff"/><stop offset="1" stop-color="#2d00ff"/></linearGradient><linearGradient id="b89" gradientUnits="userSpaceOnUse" x1="1326.8" y1="0" x2="1377.4" y2="0"><stop offset="0" stop-color="#000bff"/><stop offset="0.333" stop-color="#0b07ff"/><stop offset="0.667" stop-color="#1a03ff"/><stop offset="1" stop-color="#2800ff"/></linearGradient><linearGradient id="b90" gradientUnits="userSpaceOnUse" x1="1327.4" y1="0" x2="1373.7" y2="0"><stop offset="0" stop-color="#000aff"/><stop offset="0.333" stop-color="#0a06ff"/><stop offset="0.667" stop-color="#1703ff"/><stop offset="1" stop-color="#2400ff"/></linearGradient><linearGradient id="b91" gradientUnits="userSpaceOnUse" x1="1327.9" y1="0" x2="1370.1" y2="0"><stop offset="0" stop-color="#0009ff"/><stop offset="0.333" stop-color="#0906ff"/><stop offset="0.667" stop-color="#1402ff"/><stop offset="1" stop-color="#2000ff"/></linearGradient><linearGradient id="b92" gradientUnits="userSpaceOnUse" x1="1328.5" y1="0" x2="1366.4" y2="0"><stop offset="0" stop-color="#0008ff"/><stop offset="0.333" stop-color="#0705ff"/><stop offset="0.667" stop-color="#1202ff"/><stop offset="1" stop-color="#1c00ff"/></linearGradient><linearGradient id="b93" gradientUnits="userSpaceOnUse" x1="1329.1" y1="0" x2="1362.7" y2="0"><stop offset="0" stop-color="#0007ff"/><stop offset="0.5" stop-color="#0b03ff"/><stop offset="1" stop-color="#1900ff"/></linearGradient><linearGradient id="b94" gradientUnits="userSpaceOnUse" x1="1329.7" y1="0" x2="1359.1" y2="0"><stop offset="0" stop-color="#0006ff"/><stop offset="0.5" stop-color="#0902ff"/><stop offset="1" stop-color="#1500ff"/></linearGradient><linearGradient id="b95" gradientUnits="userSpaceOnUse" x1="1330.3" y1="0" x2="1355.4" y2="0"><stop offset="0" stop-color="#0005ff"/><stop offset="0.5" stop-color="#0702ff"/><stop offset="1" stop-color="#1100ff"/></linearGradient><linearGradient id="b96" gradientUnits="userSpaceOnUse" x1="1330.9" y1="0" x2="1351.8" y2="0"><stop offset="0" stop-color="#0004ff"/><stop offset="0.5" stop-color="#0501ff"/><stop offset="1" stop-color="#0e00ff"/></linearGradient><linearGradient id="b97" gradientUnits="userSpaceOnUse" x1="1331.5" y1="0" x2="1348.1" y2="0"><stop offset="0" stop-color="#0003ff"/><stop offset="0.5" stop-color="#0401ff"/><stop offset="1" stop-color="#0a00ff"/></linearGradient><linearGradient id="b98" gradientUnits="userSpaceOnUse" x1="1332.1" y1="0" x2="1344.5" y2="0"><stop offset="0" stop-color="#0002ff"/><stop offset="0.5" stop-color="#0201ff"/><stop offset="1" stop-color="#0700ff"/></linearGradient><linearGradient id="b99" gradientUnits="userSpaceOnUse" x1="1332.7" y1="0" x2="1340.8" y2="0"><stop offset="0" stop-color="#0001ff"/><stop offset="0.5" stop-color="#0000ff"/><stop offset="1" stop-color="#0300ff"/></linearGradient><linearGradient id="gBtn" x1="0" y1="0" x2="0" y2="1"><stop offset="0" stop-color="#a6a6a6"/><stop offset="0.5" stop-color="#7c7c7c"/><stop offset="1" stop-color="#5a5a5a"/></linearGradient><linearGradient id="gBtnSel" x1="0" y1="0" x2="0" y2="1"><stop offset="0" stop-color="#2a2a2a"/><stop offset="1" stop-color="#1c1c1c"/></linearGradient><linearGradient id="gUp" x1="0" y1="0" x2="0" y2="1"><stop offset="0" stop-color="#5a5a5a"/><stop offset="1" stop-color="#9a9a9a"/></linearGradient><linearGradient id="gStopIn" x1="0" y1="0" x2="0" y2="1"><stop offset="0" stop-color="#a8a8a8"/><stop offset="0.5" stop-color="#8a8a8a"/><stop offset="0.51" stop-color="#6e6e6e"/><stop offset="1" stop-color="#7a7a7a"/></linearGradient><linearGradient id="gIco" x1="0" y1="0" x2="0" y2="1"><stop offset="0" stop-color="#a8a8a8"/><stop offset="1" stop-color="#6c6c6c"/></linearGradient><linearGradient id="gIcoDark" x1="0" y1="0" x2="0" y2="1"><stop offset="0" stop-color="#3a3a3a"/><stop offset="1" stop-color="#2a2a2a"/></linearGradient><linearGradient id="gIcoC" x1="0" y1="0" x2="0" y2="1"><stop offset="0" stop-color="#606060"/><stop offset="1" stop-color="#9a9a9a"/></linearGradient><linearGradient id="gBN" x1="0" y1="0" x2="0" y2="1"><stop offset="0" stop-color="#b0b0b0"/><stop offset="1" stop-color="#6a6a6a"/></linearGradient></defs>
<rect x="0" y="0" width="1920" height="66" fill="#232323"/>
<rect x="0" y="66" width="1920" height="943" fill="#323232"/>
<rect x="0" y="66" width="1" height="880" fill="#444444"/>
<rect x="1914" y="66" width="6" height="880" fill="url(#gEdge)"/>
<rect x="1914" y="38" width="6" height="28" fill="url(#gEdge)"/>
<path d="M1,0 H182 V25 Q182,29 178,29 H5 Q1,29 1,25 Z" fill="url(#gLogo)"/>
<path d="M0.5,0 V25 Q0.5,29.5 5,29.5 H178 Q182.5,29.5 182.5,25 V0" fill="none" stroke="#8a8a8a" stroke-width="1"/>
<g transform="translate(34.5,14.2) rotate(45) scale(1.07)"><rect x="-6.9" y="-6.9" width="13.8" height="13.8" fill="none" stroke="#fff" stroke-width="2.9" rx="0.8"/><rect x="-4.3" y="-4.3" width="3.6" height="3.6" fill="#fff"/><rect x="0.7" y="-4.3" width="3.6" height="3.6" fill="#fff"/><rect x="-4.3" y="0.7" width="3.6" height="3.6" fill="#fff"/><rect x="0.7" y="0.7" width="3.6" height="3.6" fill="#fff"/><rect x="-0.65" y="-9" width="1.3" height="18" fill="#da2828"/><rect x="-9" y="-0.65" width="18" height="1.3" fill="#da2828"/></g>
<text x="50.0" y="20.8" font-size="26" fill="#ffffff" textLength="85.0" lengthAdjust="spacingAndGlyphs" stroke="#ffffff" stroke-width="0.5">calman</text>
<circle cx="166" cy="13.5" r="9.5" fill="url(#gLogoBtn)"/>
<path d="M161,11 H171 L166,17 Z" fill="#fff"/>
<rect x="190" y="12" width="1730" height="5" fill="url(#gRain)"/>
<path d="M-2,35 H22 Q26,35 26,39 V58 Q26,62 22,62 H-2 Z" fill="url(#gPlayBtn)" stroke="#c8c8c8" stroke-width="1"/>
<circle cx="12.5" cy="49" r="10" fill="url(#gPlayCirc)"/>
<path d="M10,43.5 L16,48.5 L10,53.5 Z" fill="#fff"/>
<path d="M29.5,65 V39.5 Q29.5,35.5 33.5,35.5 H116.5 Q120.5,35.5 120.5,39.5 V65" fill="url(#gTab)" stroke="#8c8c8c" stroke-width="1"/>
<rect x="87" y="36" width="1" height="29" fill="#5a5a5a"/>
<text x="35.5" y="56.0" font-size="12" fill="#e8e8e8" textLength="46.5" lengthAdjust="spacingAndGlyphs">History 1</text>
<circle cx="103" cy="52" r="9.5" fill="url(#gPlus)"/>
<text x="103.0" y="56.5" font-size="13" fill="#9a9a9a" text-anchor="middle">+</text>
<path d="M1441,65 V38 Q1441,35 1444,35 H1568 Q1571,35 1571,38 V65 Z" fill="url(#gDD)"/>
<rect x="1441" y="36" width="5" height="29" fill="#e8e800"/>
<text x="1449.5" y="47.0" font-size="11.5" fill="#f0f0f0" textLength="82.0" lengthAdjust="spacingAndGlyphs">Simulated Meter</text>
<text x="1449.5" y="60.6" font-size="11.5" fill="#f0f0f0" textLength="51.0" lengthAdjust="spacingAndGlyphs">Test Mode</text>
<circle cx="1555" cy="50" r="9.5" fill="url(#gDDc)"/>
<path d="M1550,48 H1560 L1555,53 Z" fill="#fff"/>
<path d="M1577,65 V38 Q1577,35 1580,35 H1703 Q1706,35 1706,38 V65 Z" fill="url(#gDD)"/>
<rect x="1577" y="36" width="5" height="29" fill="#e8e800"/>
<text x="1585.5" y="47.0" font-size="11.5" fill="#f0f0f0" textLength="33.5" lengthAdjust="spacingAndGlyphs">Source</text>
<circle cx="1690" cy="50" r="9.5" fill="url(#gDDc)"/>
<path d="M1685,48 H1695 L1690,53 Z" fill="#fff"/>
<path d="M1713,65 V38 Q1713,35 1716,35 H1853 Q1856,35 1856,38 V65 Z" fill="url(#gDD)"/>
<rect x="1713" y="36" width="5" height="29" fill="#e8e800"/>
<text x="1721.5" y="47.0" font-size="11.5" fill="#f0f0f0" textLength="105.0" lengthAdjust="spacingAndGlyphs">Direct Display Control</text>
<circle cx="1840" cy="50" r="9.5" fill="url(#gDDc)"/>
<path d="M1835,48 H1845 L1840,53 Z" fill="#fff"/>
<rect x="1859.5" y="35.5" width="33" height="27" rx="3" fill="url(#gGearBtn)" stroke="#bdbdbd"/>
<circle cx="1876" cy="49" r="10" fill="url(#gGearC)"/>
<g transform="translate(1876,49)" fill="#d0d0d0"><rect x="-1.3" y="-6.6" width="2.6" height="2.8" transform="rotate(0)"/><rect x="-1.3" y="-6.6" width="2.6" height="2.8" transform="rotate(45)"/><rect x="-1.3" y="-6.6" width="2.6" height="2.8" transform="rotate(90)"/><rect x="-1.3" y="-6.6" width="2.6" height="2.8" transform="rotate(135)"/><rect x="-1.3" y="-6.6" width="2.6" height="2.8" transform="rotate(180)"/><rect x="-1.3" y="-6.6" width="2.6" height="2.8" transform="rotate(225)"/><rect x="-1.3" y="-6.6" width="2.6" height="2.8" transform="rotate(270)"/><rect x="-1.3" y="-6.6" width="2.6" height="2.8" transform="rotate(315)"/><circle r="4.3" fill="none" stroke="#d0d0d0" stroke-width="2.2"/></g>
<path d="M1894.5,35.5 H1920 V62.5 H1894.5 Q1893.5,62.5 1893.5,59 V39 Q1893.5,35.5 1897,35.5 Z" fill="url(#gGearBtn)" stroke="#bdbdbd"/>
<circle cx="1907" cy="49" r="10" fill="url(#gGearC)"/>
<path d="M1909,44 L1903.5,49 L1909,54 Z" fill="#fff"/>
<text x="69.0" y="119.5" font-size="42" fill="#eeeeee" textLength="308.0" lengthAdjust="spacingAndGlyphs">CMS Calibration</text>
<text x="100.5" y="161.0" font-size="17.5" fill="#eeeeee" textLength="308.5" lengthAdjust="spacingAndGlyphs">Calibrate the color management system</text>
<text x="90.5" y="345.3" font-size="19.5" fill="#f0f0f0" textLength="157.0" lengthAdjust="spacingAndGlyphs" stroke="#f0f0f0" stroke-width="0.45">Current Reading</text>
<text x="90.5" y="376.6" font-size="16" fill="#f0f0f0" textLength="66.5" lengthAdjust="spacingAndGlyphs">x: 0,3076</text>
<text x="90.5" y="405.9" font-size="16" fill="#f0f0f0" textLength="66.5" lengthAdjust="spacingAndGlyphs">y: 0,3954</text>
<text x="90.5" y="435.3" font-size="16" fill="#f0f0f0" textLength="106.5" lengthAdjust="spacingAndGlyphs">Y cd/m²: 32,09</text>
<rect x="288.5" y="412" width="145.5" height="27" fill="url(#gDrop)" stroke="#2a2a2a" stroke-width="1"/>
<text x="294.8" y="433.5" font-size="17" fill="#f0f0f0" textLength="37.5" lengthAdjust="spacingAndGlyphs">2000</text>
<path d="M417.8,423.5 H428.8 L423.3,429.7 Z" fill="#000"/>
<rect x="102.5" y="474.0" width="436.0" height="410.0" fill="#232323"/>
<rect x="102.5" y="541.8" width="436.0" height="1.2" fill="#9c9c9c"/>
<rect x="102.5" y="610.2" width="436.0" height="1.2" fill="#9c9c9c"/>
<rect x="102.5" y="678.5" width="436.0" height="1.2" fill="#9c9c9c"/>
<rect x="102.5" y="815.2" width="436.0" height="1.2" fill="#9c9c9c"/>
<path d="M142.3,871.9H143.9V884.0H142.3ZM143.9,821.9H145.9V884.0H143.9ZM145.9,811.5H149.3V884.0H145.9ZM149.3,844.5H151.9V884.0H149.3ZM151.9,785.9H155.1V884.0H151.9ZM155.1,817.2H158.2V884.0H155.1ZM158.2,841.9H161.0V884.0H158.2ZM163.6,839.3H167.3V884.0H163.6ZM167.3,795.1H169.9V884.0H167.3ZM169.9,854.9H172.0V884.0H169.9ZM172.0,822.9H174.6V884.0H172.0ZM174.6,809.9H177.7V884.0H174.6ZM177.7,841.1H181.1V884.0H177.7ZM182.4,838.0H186.0V884.0H182.4ZM186.0,778.9H189.2V884.0H186.0ZM189.2,853.6H192.3V884.0H189.2ZM192.3,828.9H194.1V884.0H192.3ZM194.1,814.1H196.7V884.0H194.1ZM196.7,851.0H200.4V884.0H196.7ZM202.7,844.8H205.8V884.0H202.7ZM205.8,778.9H209.0V884.0H205.8ZM209.0,865.4H212.1V884.0H209.0ZM212.1,819.8H215.7V884.0H212.1ZM215.7,818.8H218.3V884.0H215.7ZM218.3,841.9H220.9V884.0H218.3ZM222.0,852.6H225.4V884.0H222.0ZM225.4,810.7H228.0V884.0H225.4ZM228.0,862.8H231.1V884.0H228.0ZM231.1,835.4H234.5V884.0H231.1ZM234.5,825.0H237.1V884.0H234.5ZM237.1,840.6H239.9V884.0H237.1ZM242.3,843.2H246.2V884.0H242.3ZM246.2,826.3H249.3V884.0H246.2ZM249.3,838.0H255.3V884.0H249.3ZM255.3,825.0H257.9V884.0H255.3ZM257.9,834.1H260.8V884.0H257.9ZM261.8,831.5H265.7V884.0H261.8ZM265.7,840.6H268.3V884.0H265.7ZM268.3,818.5H271.5V884.0H268.3ZM271.5,830.2H275.6V884.0H271.5ZM275.6,817.2H280.1V884.0H275.6ZM282.7,861.5H286.0V884.0H282.7ZM286.0,852.3H288.6V884.0H286.0ZM288.6,817.2H291.8V884.0H288.6ZM291.8,847.1H294.4V884.0H291.8ZM294.4,819.8H297.5V884.0H294.4ZM297.5,801.0H300.1V884.0H297.5ZM301.7,847.1H304.8V884.0H301.7ZM304.8,860.2H307.9V884.0H304.8ZM307.9,825.0H311.3V884.0H307.9ZM311.3,851.0H313.9V884.0H311.3ZM313.9,825.0H317.3V884.0H313.9ZM317.3,789.1H319.6V884.0H317.3ZM321.7,832.8H325.1V884.0H321.7ZM325.1,851.0H328.2V884.0H325.1ZM328.2,819.8H330.8V884.0H328.2ZM330.8,851.0H333.4V884.0H330.8ZM333.4,847.1H337.3V884.0H333.4ZM337.3,778.1H339.9V884.0H337.3ZM341.2,854.9H345.2V884.0H341.2ZM345.2,853.6H347.8V884.0H345.2ZM347.8,819.3H350.4V884.0H347.8ZM350.4,854.9H354.3V884.0H350.4ZM354.3,850.3H356.9V884.0H354.3ZM356.9,769.0H359.2V884.0H356.9ZM362.1,857.6H364.7V884.0H362.1ZM364.7,854.9H368.6V884.0H364.7ZM368.6,832.3H371.2V884.0H368.6ZM371.2,854.9H374.6V884.0H371.2ZM374.6,843.2H377.7V884.0H374.6ZM377.7,778.1H379.8V884.0H377.7ZM381.6,864.1H384.2V884.0H381.6ZM384.2,857.6H387.6V884.0H384.2ZM387.6,826.3H390.2V884.0H387.6ZM390.2,860.2H393.3V884.0H390.2ZM393.3,841.9H396.5V884.0H393.3ZM396.5,785.9H398.8V884.0H396.5ZM401.7,861.5H405.1V884.0H401.7ZM405.1,862.8H407.7V884.0H405.1ZM407.7,814.1H410.3V884.0H407.7ZM410.3,853.6H413.6V884.0H410.3ZM413.6,847.1H416.2V884.0H413.6ZM416.2,803.6H419.4V884.0H416.2ZM420.7,860.2H424.1V884.0H420.7ZM424.1,862.8H427.2V884.0H424.1ZM427.2,834.9H429.8V884.0H427.2ZM429.8,849.7H432.9V884.0H429.8ZM432.9,838.0H435.5V884.0H432.9ZM435.5,809.9H438.4V884.0H435.5ZM440.7,865.9H444.1V884.0H440.7ZM444.1,869.8H446.7V884.0H444.1ZM446.7,841.9H449.8V884.0H446.7ZM449.8,851.0H453.2V884.0H449.8ZM453.2,839.3H455.8V884.0H453.2ZM455.8,822.9H459.0V884.0H455.8ZM459.7,866.7H463.1V884.0H459.7ZM463.1,869.8H466.2V884.0H463.1ZM466.2,852.9H469.4V884.0H466.2ZM469.4,849.7H472.8V884.0H469.4ZM472.8,844.0H475.9V884.0H472.8ZM475.9,834.9H478.2V884.0H475.9ZM480.6,857.6H484.0V884.0H480.6ZM484.0,869.8H487.1V884.0H484.0ZM487.1,850.5H489.7V884.0H487.1ZM489.7,845.1H492.8V884.0H489.7ZM492.8,850.5H495.4V884.0H492.8ZM495.4,853.1H498.8V884.0H495.4ZM499.6,762.5H502.7V884.0H499.6ZM502.7,832.8H505.8V884.0H502.7ZM505.8,815.9H508.4V884.0H505.8ZM508.4,843.2H511.8V884.0H508.4ZM511.8,856.8H514.4V884.0H511.8ZM514.4,863.5H517.8V884.0H514.4ZM519.6,762.5H522.2V884.0H519.6ZM522.2,769.8H526.1V884.0H522.2ZM526.1,862.8H528.8V884.0H526.1ZM528.8,853.1H531.9V884.0H528.8ZM531.9,828.9H534.5V884.0H531.9ZM534.5,873.2H537.9V884.0H534.5ZM120.7,879.7H123.8V884.0H120.7Z" fill="#000"/>
<rect x="101.9" y="474.0" width="1.4" height="411.0" fill="#a8a8a8"/>
<rect x="537.9" y="474.0" width="1.4" height="411.0" fill="#a8a8a8"/>
<rect x="102.5" y="883.3" width="436.0" height="1.6" fill="#b0b0b0"/>
<rect x="102.5" y="746.3" width="436.0" height="2" fill="#1e9a1e"/>
<rect x="102.5" y="472.8" width="436.8" height="2.4" fill="#e6e600"/>
<rect x="97.5" y="473.3" width="5" height="1.4" fill="#a8a8a8"/>
<text x="95.5" y="479.3" font-size="14.5" fill="#d8d8d8" text-anchor="end">3</text>
<rect x="97.5" y="541.6" width="5" height="1.4" fill="#a8a8a8"/>
<text x="95.5" y="547.6" font-size="14.5" fill="#d8d8d8" text-anchor="end">2,5</text>
<rect x="97.5" y="610.0" width="5" height="1.4" fill="#a8a8a8"/>
<text x="95.5" y="616.0" font-size="14.5" fill="#d8d8d8" text-anchor="end">2</text>
<rect x="97.5" y="678.3" width="5" height="1.4" fill="#a8a8a8"/>
<text x="95.5" y="684.3" font-size="14.5" fill="#d8d8d8" text-anchor="end">1,5</text>
<rect x="97.5" y="746.6" width="5" height="1.4" fill="#a8a8a8"/>
<text x="95.5" y="752.6" font-size="14.5" fill="#d8d8d8" text-anchor="end">1</text>
<rect x="97.5" y="815.0" width="5" height="1.4" fill="#a8a8a8"/>
<text x="95.5" y="821.0" font-size="14.5" fill="#d8d8d8" text-anchor="end">0,5</text>
<rect x="97.5" y="883.3" width="5" height="1.4" fill="#a8a8a8"/>
<text x="95.5" y="889.3" font-size="14.5" fill="#d8d8d8" text-anchor="end">0</text>
<rect x="101.8" y="884.0" width="1.4" height="6" fill="#c8c8c8"/>
<rect x="121.6" y="884.0" width="1.4" height="6" fill="#c8c8c8"/>
<rect x="141.4" y="884.0" width="1.4" height="6" fill="#c8c8c8"/>
<rect x="161.3" y="884.0" width="1.4" height="6" fill="#c8c8c8"/>
<rect x="181.1" y="884.0" width="1.4" height="6" fill="#c8c8c8"/>
<rect x="200.9" y="884.0" width="1.4" height="6" fill="#c8c8c8"/>
<rect x="220.7" y="884.0" width="1.4" height="6" fill="#c8c8c8"/>
<rect x="240.5" y="884.0" width="1.4" height="6" fill="#c8c8c8"/>
<rect x="260.3" y="884.0" width="1.4" height="6" fill="#c8c8c8"/>
<rect x="280.2" y="884.0" width="1.4" height="6" fill="#c8c8c8"/>
<rect x="300.0" y="884.0" width="1.4" height="6" fill="#c8c8c8"/>
<rect x="319.8" y="884.0" width="1.4" height="6" fill="#c8c8c8"/>
<rect x="339.6" y="884.0" width="1.4" height="6" fill="#c8c8c8"/>
<rect x="359.4" y="884.0" width="1.4" height="6" fill="#c8c8c8"/>
<rect x="379.3" y="884.0" width="1.4" height="6" fill="#c8c8c8"/>
<rect x="399.1" y="884.0" width="1.4" height="6" fill="#c8c8c8"/>
<rect x="418.9" y="884.0" width="1.4" height="6" fill="#c8c8c8"/>
<rect x="438.7" y="884.0" width="1.4" height="6" fill="#c8c8c8"/>
<rect x="458.5" y="884.0" width="1.4" height="6" fill="#c8c8c8"/>
<rect x="478.3" y="884.0" width="1.4" height="6" fill="#c8c8c8"/>
<rect x="498.2" y="884.0" width="1.4" height="6" fill="#c8c8c8"/>
<rect x="518.0" y="884.0" width="1.4" height="6" fill="#c8c8c8"/>
<rect x="537.8" y="884.0" width="1.4" height="6" fill="#c8c8c8"/>
<text x="112.4" y="907.5" font-size="15" fill="#d8d8d8" text-anchor="middle">0</text>
<text x="152.0" y="907.5" font-size="15" fill="#d8d8d8" text-anchor="middle">5%</text>
<text x="191.7" y="907.5" font-size="15" fill="#d8d8d8" text-anchor="middle">15%</text>
<text x="231.3" y="907.5" font-size="15" fill="#d8d8d8" text-anchor="middle">25%</text>
<text x="271.0" y="907.5" font-size="15" fill="#d8d8d8" text-anchor="middle">35%</text>
<text x="310.6" y="907.5" font-size="15" fill="#d8d8d8" text-anchor="middle">45%</text>
<text x="350.2" y="907.5" font-size="15" fill="#d8d8d8" text-anchor="middle">55%</text>
<text x="389.9" y="907.5" font-size="15" fill="#d8d8d8" text-anchor="middle">65%</text>
<text x="429.5" y="907.5" font-size="15" fill="#d8d8d8" text-anchor="middle">75%</text>
<text x="469.1" y="907.5" font-size="15" fill="#d8d8d8" text-anchor="middle">85%</text>
<text x="508.8" y="907.5" font-size="15" fill="#d8d8d8" text-anchor="middle">95%</text>
<text x="132.2" y="929.7" font-size="15" fill="#d8d8d8" text-anchor="middle">100</text>
<text x="171.9" y="929.7" font-size="15" fill="#d8d8d8" text-anchor="middle">10%</text>
<text x="211.5" y="929.7" font-size="15" fill="#d8d8d8" text-anchor="middle">20%</text>
<text x="251.1" y="929.7" font-size="15" fill="#d8d8d8" text-anchor="middle">30%</text>
<text x="290.8" y="929.7" font-size="15" fill="#d8d8d8" text-anchor="middle">40%</text>
<text x="330.4" y="929.7" font-size="15" fill="#d8d8d8" text-anchor="middle">50%</text>
<text x="370.0" y="929.7" font-size="15" fill="#d8d8d8" text-anchor="middle">60%</text>
<text x="409.7" y="929.7" font-size="15" fill="#d8d8d8" text-anchor="middle">70%</text>
<text x="449.3" y="929.7" font-size="15" fill="#d8d8d8" text-anchor="middle">80%</text>
<text x="489.0" y="929.7" font-size="15" fill="#d8d8d8" text-anchor="middle">90%</text>
<text x="528.6" y="929.7" font-size="15" fill="#d8d8d8" text-anchor="middle">100%</text>
<text x="97.8" y="471.8" font-size="16" fill="#f2f2f2" textLength="57.0" lengthAdjust="spacingAndGlyphs">Avg: 0,4</text>
<text x="264.4" y="468.6" font-size="16" fill="#d8d8d8" textLength="84.5" lengthAdjust="spacingAndGlyphs">DeltaE 2000</text>
<text x="474.6" y="471.8" font-size="16" fill="#f2f2f2" textLength="63.3" lengthAdjust="spacingAndGlyphs">Max: 0,9</text>
<rect x="620" y="103.5" width="482" height="28" fill="url(#gDrop)" stroke="#262626" stroke-width="1"/>
<text x="625.3" y="125.7" font-size="17.5" fill="#f0f0f0" textLength="85.6" lengthAdjust="spacingAndGlyphs">5% Sweeps</text>
<path d="M1086,114.8 H1097 L1091.5,121 Z" fill="#000"/>
<text x="846.0" y="160.6" font-size="16" fill="#d8d8d8" textLength="90.0" lengthAdjust="spacingAndGlyphs" text-anchor="middle">RGB Balance</text>
<rect x="621" y="165.5" width="483" height="246.5" fill="#232323"/>
<rect x="621" y="191.8" width="483" height="1.2" fill="#9c9c9c"/>
<rect x="616" y="191.8" width="5" height="1.2" fill="#a8a8a8"/>
<text x="614.5" y="197.7" font-size="15" fill="#d8d8d8" textLength="26.5" lengthAdjust="spacingAndGlyphs" text-anchor="end">104</text>
<rect x="621" y="240.8" width="483" height="1.2" fill="#9c9c9c"/>
<rect x="616" y="240.8" width="5" height="1.2" fill="#a8a8a8"/>
<text x="614.5" y="246.8" font-size="15" fill="#d8d8d8" textLength="26.5" lengthAdjust="spacingAndGlyphs" text-anchor="end">102</text>
<rect x="621" y="289.9" width="483" height="1.2" fill="#9c9c9c"/>
<rect x="616" y="289.9" width="5" height="1.2" fill="#a8a8a8"/>
<text x="614.5" y="295.8" font-size="15" fill="#d8d8d8" textLength="26.5" lengthAdjust="spacingAndGlyphs" text-anchor="end">100</text>
<rect x="621" y="338.9" width="483" height="1.2" fill="#9c9c9c"/>
<rect x="616" y="338.9" width="5" height="1.2" fill="#a8a8a8"/>
<text x="614.5" y="344.8" font-size="15" fill="#d8d8d8" textLength="17.5" lengthAdjust="spacingAndGlyphs" text-anchor="end">98</text>
<rect x="621" y="388.0" width="483" height="1.2" fill="#9c9c9c"/>
<rect x="616" y="388.0" width="5" height="1.2" fill="#a8a8a8"/>
<text x="614.5" y="393.9" font-size="15" fill="#d8d8d8" textLength="17.5" lengthAdjust="spacingAndGlyphs" text-anchor="end">96</text>
<rect x="669.5" y="296" width="128" height="116" fill="url(#gBarR)" stroke="#000" stroke-width="1.5"/>
<rect x="797.5" y="287.5" width="129" height="124.5" fill="url(#gBarG)" stroke="#000" stroke-width="1.5"/>
<rect x="926.5" y="295" width="129.5" height="117" fill="url(#gBarB)" stroke="#000" stroke-width="1.5"/>
<path d="M621,412 V165.5 H1104 V412" fill="none" stroke="#a8a8a8" stroke-width="1.4"/>
<rect x="621" y="411.3" width="483" height="1.6" fill="#b8b8b8"/>
<rect x="620.3" y="412" width="1.4" height="6" fill="#c8c8c8"/>
<rect x="1103.3" y="412" width="1.4" height="6" fill="#c8c8c8"/>
<text x="863.0" y="430.6" font-size="15" fill="#d8d8d8" textLength="21.5" lengthAdjust="spacingAndGlyphs" text-anchor="middle">5%</text>
<rect x="623.6" y="475.2" width="128.0" height="208.8" fill="#232323"/>
<rect x="623.6" y="526.8" width="128.0" height="1.2" fill="#9c9c9c"/>
<rect x="623.6" y="579.0" width="128.0" height="1.2" fill="#9c9c9c"/>
<rect x="623.6" y="631.2" width="128.0" height="1.2" fill="#9c9c9c"/>
<rect x="636.1" y="579.6" width="103" height="1.6" fill="#111"/>
<path d="M623.6,684 V475.2 H751.6 V684" fill="none" stroke="#a8a8a8" stroke-width="1.4"/>
<rect x="623.6" y="683.3" width="128.0" height="1.6" fill="#b8b8b8"/>
<rect x="622.9" y="684" width="1.4" height="6" fill="#c8c8c8"/>
<rect x="750.9" y="684" width="1.4" height="6" fill="#c8c8c8"/>
<rect x="618.6" y="474.6" width="5" height="1.2" fill="#a8a8a8"/>
<text x="616.6" y="480.5" font-size="15" fill="#d8d8d8" text-anchor="end">4</text>
<rect x="618.6" y="526.8" width="5" height="1.2" fill="#a8a8a8"/>
<text x="616.6" y="532.7" font-size="15" fill="#d8d8d8" text-anchor="end">2</text>
<rect x="618.6" y="579.0" width="5" height="1.2" fill="#a8a8a8"/>
<text x="616.6" y="584.9" font-size="15" fill="#d8d8d8" text-anchor="end">0</text>
<rect x="618.6" y="631.2" width="5" height="1.2" fill="#a8a8a8"/>
<text x="616.6" y="637.1" font-size="15" fill="#d8d8d8" text-anchor="end">-2</text>
<rect x="618.6" y="683.4" width="5" height="1.2" fill="#a8a8a8"/>
<text x="616.6" y="689.3" font-size="15" fill="#d8d8d8" text-anchor="end">-4</text>
<text x="678.1" y="468.9" font-size="16" fill="#d8d8d8" textLength="48.5" lengthAdjust="spacingAndGlyphs" text-anchor="middle">Delta L</text>
<text x="687.6" y="700.9" font-size="15" fill="#d8d8d8" textLength="20.5" lengthAdjust="spacingAndGlyphs" text-anchor="middle">5%</text>
<rect x="799.3" y="475.2" width="128.0" height="208.8" fill="#232323"/>
<rect x="799.3" y="526.8" width="128.0" height="1.2" fill="#9c9c9c"/>
<rect x="799.3" y="579.0" width="128.0" height="1.2" fill="#9c9c9c"/>
<rect x="799.3" y="631.2" width="128.0" height="1.2" fill="#9c9c9c"/>
<rect x="812.3" y="565.5" width="102.5" height="14.5" fill="url(#gDC)" stroke="#000" stroke-width="1.5"/>
<path d="M799.3,684 V475.2 H927.3 V684" fill="none" stroke="#a8a8a8" stroke-width="1.4"/>
<rect x="799.3" y="683.3" width="128.0" height="1.6" fill="#b8b8b8"/>
<rect x="798.5999999999999" y="684" width="1.4" height="6" fill="#c8c8c8"/>
<rect x="926.5999999999999" y="684" width="1.4" height="6" fill="#c8c8c8"/>
<rect x="794.3" y="474.6" width="5" height="1.2" fill="#a8a8a8"/>
<text x="792.3" y="480.5" font-size="15" fill="#d8d8d8" text-anchor="end">4</text>
<rect x="794.3" y="526.8" width="5" height="1.2" fill="#a8a8a8"/>
<text x="792.3" y="532.7" font-size="15" fill="#d8d8d8" text-anchor="end">2</text>
<rect x="794.3" y="579.0" width="5" height="1.2" fill="#a8a8a8"/>
<text x="792.3" y="584.9" font-size="15" fill="#d8d8d8" text-anchor="end">0</text>
<rect x="794.3" y="631.2" width="5" height="1.2" fill="#a8a8a8"/>
<text x="792.3" y="637.1" font-size="15" fill="#d8d8d8" text-anchor="end">-2</text>
<rect x="794.3" y="683.4" width="5" height="1.2" fill="#a8a8a8"/>
<text x="792.3" y="689.3" font-size="15" fill="#d8d8d8" text-anchor="end">-4</text>
<text x="853.8" y="468.9" font-size="16" fill="#d8d8d8" textLength="48.5" lengthAdjust="spacingAndGlyphs" text-anchor="middle">Delta C</text>
<text x="863.3" y="700.9" font-size="15" fill="#d8d8d8" textLength="20.5" lengthAdjust="spacingAndGlyphs" text-anchor="middle">5%</text>
<rect x="976" y="475.2" width="128" height="208.8" fill="#232323"/>
<rect x="976" y="526.8" width="128" height="1.2" fill="#9c9c9c"/>
<rect x="976" y="579.0" width="128" height="1.2" fill="#9c9c9c"/>
<rect x="976" y="631.2" width="128" height="1.2" fill="#9c9c9c"/>
<rect x="988.5" y="578.8" width="103" height="2.6" fill="#000"/>
<path d="M976,684 V475.2 H1104 V684" fill="none" stroke="#a8a8a8" stroke-width="1.4"/>
<rect x="976" y="683.3" width="128" height="1.6" fill="#b8b8b8"/>
<rect x="975.3" y="684" width="1.4" height="6" fill="#c8c8c8"/>
<rect x="1103.3" y="684" width="1.4" height="6" fill="#c8c8c8"/>
<rect x="971" y="474.6" width="5" height="1.2" fill="#a8a8a8"/>
<text x="969.0" y="480.5" font-size="15" fill="#d8d8d8" text-anchor="end">4</text>
<rect x="971" y="526.8" width="5" height="1.2" fill="#a8a8a8"/>
<text x="969.0" y="532.7" font-size="15" fill="#d8d8d8" text-anchor="end">2</text>
<rect x="971" y="579.0" width="5" height="1.2" fill="#a8a8a8"/>
<text x="969.0" y="584.9" font-size="15" fill="#d8d8d8" text-anchor="end">0</text>
<rect x="971" y="631.2" width="5" height="1.2" fill="#a8a8a8"/>
<text x="969.0" y="637.1" font-size="15" fill="#d8d8d8" text-anchor="end">-2</text>
<rect x="971" y="683.4" width="5" height="1.2" fill="#a8a8a8"/>
<text x="969.0" y="689.3" font-size="15" fill="#d8d8d8" text-anchor="end">-4</text>
<text x="1030.5" y="468.9" font-size="16" fill="#d8d8d8" textLength="48.5" lengthAdjust="spacingAndGlyphs" text-anchor="middle">Delta H</text>
<text x="1040.0" y="700.9" font-size="15" fill="#d8d8d8" textLength="20.5" lengthAdjust="spacingAndGlyphs" text-anchor="middle">5%</text>
<rect x="597" y="712" width="756" height="217" fill="#000000"/>
<rect x="615.0" y="722.5" width="62.5" height="180" fill="#b8c4b8" stroke="#f0f0f0" stroke-width="1"/>
<text x="646.2" y="919.5" font-size="13" fill="#f4f4f4" text-anchor="middle" font-weight="bold">5%</text>
<rect x="688.5" y="722.5" width="62.5" height="180" fill="#abc3ab" stroke="#f0f0f0" stroke-width="1"/>
<text x="719.7" y="919.5" font-size="13" fill="#f4f4f4" text-anchor="middle" font-weight="bold">10%</text>
<rect x="761.9" y="722.5" width="62.5" height="180" fill="#a2c3a2" stroke="#f0f0f0" stroke-width="1"/>
<text x="793.1" y="919.5" font-size="13" fill="#f4f4f4" text-anchor="middle" font-weight="bold">15%</text>
<rect x="835.4" y="722.5" width="62.5" height="180" fill="#98c298" stroke="#f0f0f0" stroke-width="1"/>
<text x="866.6" y="919.5" font-size="13" fill="#f4f4f4" text-anchor="middle" font-weight="bold">20%</text>
<rect x="908.8" y="722.5" width="62.5" height="180" fill="#90c290" stroke="#f0f0f0" stroke-width="1"/>
<text x="940.0" y="919.5" font-size="13" fill="#f4f4f4" text-anchor="middle" font-weight="bold">25%</text>
<rect x="982.2" y="722.5" width="62.5" height="180" fill="#88c188" stroke="#f0f0f0" stroke-width="1"/>
<text x="1013.5" y="919.5" font-size="13" fill="#f4f4f4" text-anchor="middle" font-weight="bold">30%</text>
<rect x="1055.7" y="722.5" width="62.5" height="180" fill="#80bf80" stroke="#f0f0f0" stroke-width="1"/>
<text x="1087.0" y="919.5" font-size="13" fill="#f4f4f4" text-anchor="middle" font-weight="bold">35%</text>
<rect x="1129.2" y="722.5" width="62.5" height="180" fill="#78bd78" stroke="#f0f0f0" stroke-width="1"/>
<text x="1160.4" y="919.5" font-size="13" fill="#f4f4f4" text-anchor="middle" font-weight="bold">40%</text>
<rect x="1202.6" y="722.5" width="62.5" height="180" fill="#72c072" stroke="#f0f0f0" stroke-width="1"/>
<text x="1233.8" y="919.5" font-size="13" fill="#f4f4f4" text-anchor="middle" font-weight="bold">45%</text>
<rect x="1276.1" y="722.5" width="62.5" height="180" fill="#6abf6a" stroke="#f0f0f0" stroke-width="1"/>
<text x="1307.3" y="919.5" font-size="13" fill="#f4f4f4" text-anchor="middle" font-weight="bold">50%</text>
<rect x="1349.5" y="722.5" width="1.5" height="180" fill="#62bd62" stroke="#f0f0f0" stroke-width="1"/>
<text transform="translate(611,780) rotate(-90)" font-size="13" fill="#f0f0f0" font-weight="bold" textLength="34" lengthAdjust="spacingAndGlyphs">Actual</text>
<text transform="translate(611,881) rotate(-90)" font-size="13" fill="#f0f0f0" font-weight="bold" textLength="35" lengthAdjust="spacingAndGlyphs">Target</text>
<rect x="597" y="929" width="756" height="17" fill="#5c5c5c"/>
<rect x="615.5" y="931" width="364" height="12.5" rx="6" fill="#3e3e3e"/>
<rect x="597.5" y="930" width="15" height="15" rx="2" fill="url(#gSB)" stroke="#888" stroke-width="0.8"/>
<path d="M607.5,933 L601.5,937.5 L607.5,942 Z" fill="#222"/>
<rect x="1336.5" y="930" width="15" height="15" rx="2" fill="url(#gSB)" stroke="#888" stroke-width="0.8"/>
<path d="M1341.5,933 L1347.5,937.5 L1341.5,942 Z" fill="#222"/>
<rect x="1351" y="712" width="2.5" height="217" fill="#000"/>
<rect x="1351" y="722.5" width="1.6" height="181" fill="#6cc06c"/>
<rect x="1353.5" y="711.5" width="505.5" height="1.2" fill="#000"/>
<rect x="1353.5" y="712.5" width="504.5" height="26.3" fill="url(#gTH)"/>
<text x="1539.4" y="731.6" font-size="15" fill="#f4f4f4" textLength="21.0" lengthAdjust="spacingAndGlyphs" text-anchor="middle" stroke="#f4f4f4" stroke-width="0.35">5%</text>
<text x="1609.0" y="731.6" font-size="15" fill="#f4f4f4" textLength="30.0" lengthAdjust="spacingAndGlyphs" text-anchor="middle" stroke="#f4f4f4" stroke-width="0.35">10%</text>
<text x="1678.5" y="731.6" font-size="15" fill="#f4f4f4" textLength="30.0" lengthAdjust="spacingAndGlyphs" text-anchor="middle" stroke="#f4f4f4" stroke-width="0.35">15%</text>
<text x="1748.0" y="731.6" font-size="15" fill="#f4f4f4" textLength="30.0" lengthAdjust="spacingAndGlyphs" text-anchor="middle" stroke="#f4f4f4" stroke-width="0.35">20%</text>
<text x="1817.5" y="731.6" font-size="15" fill="#f4f4f4" textLength="30.0" lengthAdjust="spacingAndGlyphs" text-anchor="middle" stroke="#f4f4f4" stroke-width="0.35">25%</text>
<rect x="1353.5" y="738.8" width="504.5" height="23.9" fill="#444444"/>
<text x="1367.2" y="756.0" font-size="16" fill="#ffffff" textLength="65.0" lengthAdjust="spacingAndGlyphs" font-weight="bold">x: CIE31</text>
<text x="1508.6" y="756.0" font-size="16" fill="#f4f4f4" textLength="51.0" lengthAdjust="spacingAndGlyphs">0,3120</text>
<text x="1578.2" y="756.0" font-size="16" fill="#f4f4f4" textLength="51.0" lengthAdjust="spacingAndGlyphs">0,3102</text>
<text x="1647.8" y="756.0" font-size="16" fill="#f4f4f4" textLength="51.0" lengthAdjust="spacingAndGlyphs">0,3086</text>
<text x="1717.4" y="756.0" font-size="16" fill="#f4f4f4" textLength="51.0" lengthAdjust="spacingAndGlyphs">0,3075</text>
<text x="1787.0" y="756.0" font-size="16" fill="#f4f4f4" textLength="51.0" lengthAdjust="spacingAndGlyphs">0,3076</text>
<rect x="1353.5" y="762.4" width="504.5" height="23.9" fill="#7f7f7f"/>
<text x="1367.2" y="779.6" font-size="16" fill="#ffffff" textLength="65.0" lengthAdjust="spacingAndGlyphs" font-weight="bold">y: CIE31</text>
<text x="1508.6" y="779.6" font-size="16" fill="#f4f4f4" textLength="51.0" lengthAdjust="spacingAndGlyphs">0,3434</text>
<text x="1578.2" y="779.6" font-size="16" fill="#f4f4f4" textLength="51.0" lengthAdjust="spacingAndGlyphs">0,3558</text>
<text x="1647.8" y="779.6" font-size="16" fill="#f4f4f4" textLength="51.0" lengthAdjust="spacingAndGlyphs">0,3712</text>
<text x="1717.4" y="779.6" font-size="16" fill="#f4f4f4" textLength="51.0" lengthAdjust="spacingAndGlyphs">0,3841</text>
<text x="1787.0" y="779.6" font-size="16" fill="#f4f4f4" textLength="51.0" lengthAdjust="spacingAndGlyphs">0,3954</text>
<rect x="1353.5" y="786.1" width="504.5" height="23.9" fill="#444444"/>
<text x="1367.2" y="803.3" font-size="16" fill="#ffffff" textLength="66.0" lengthAdjust="spacingAndGlyphs" font-weight="bold">Y cd/m²</text>
<text x="1508.6" y="803.3" font-size="16" fill="#f4f4f4" textLength="60.0" lengthAdjust="spacingAndGlyphs">35,6441</text>
<text x="1578.2" y="803.3" font-size="16" fill="#f4f4f4" textLength="60.0" lengthAdjust="spacingAndGlyphs">34,6351</text>
<text x="1647.8" y="803.3" font-size="16" fill="#f4f4f4" textLength="60.0" lengthAdjust="spacingAndGlyphs">33,4732</text>
<text x="1717.4" y="803.3" font-size="16" fill="#f4f4f4" textLength="60.0" lengthAdjust="spacingAndGlyphs">32,7213</text>
<text x="1787.0" y="803.3" font-size="16" fill="#f4f4f4" textLength="60.0" lengthAdjust="spacingAndGlyphs">32,0867</text>
<rect x="1353.5" y="809.8" width="504.5" height="23.9" fill="#7f7f7f"/>
<text x="1367.2" y="827.0" font-size="16" fill="#ffffff" textLength="117.0" lengthAdjust="spacingAndGlyphs" font-weight="bold">Target x:CIE31</text>
<text x="1508.6" y="827.0" font-size="16" fill="#f4f4f4" textLength="51.0" lengthAdjust="spacingAndGlyphs">0,3121</text>
<text x="1578.2" y="827.0" font-size="16" fill="#f4f4f4" textLength="51.0" lengthAdjust="spacingAndGlyphs">0,3115</text>
<text x="1647.8" y="827.0" font-size="16" fill="#f4f4f4" textLength="51.0" lengthAdjust="spacingAndGlyphs">0,3108</text>
<text x="1717.4" y="827.0" font-size="16" fill="#f4f4f4" textLength="51.0" lengthAdjust="spacingAndGlyphs">0,3102</text>
<text x="1787.0" y="827.0" font-size="16" fill="#f4f4f4" textLength="51.0" lengthAdjust="spacingAndGlyphs">0,3096</text>
<rect x="1353.5" y="833.4" width="504.5" height="23.9" fill="#444444"/>
<text x="1367.2" y="850.6" font-size="16" fill="#ffffff" textLength="117.0" lengthAdjust="spacingAndGlyphs" font-weight="bold">Target y:CIE31</text>
<text x="1508.6" y="850.6" font-size="16" fill="#f4f4f4" textLength="51.0" lengthAdjust="spacingAndGlyphs">0,3424</text>
<text x="1578.2" y="850.6" font-size="16" fill="#f4f4f4" textLength="51.0" lengthAdjust="spacingAndGlyphs">0,3551</text>
<text x="1647.8" y="850.6" font-size="16" fill="#f4f4f4" textLength="51.0" lengthAdjust="spacingAndGlyphs">0,3706</text>
<text x="1717.4" y="850.6" font-size="16" fill="#f4f4f4" textLength="51.0" lengthAdjust="spacingAndGlyphs">0,3833</text>
<text x="1787.0" y="850.6" font-size="16" fill="#f4f4f4" textLength="51.0" lengthAdjust="spacingAndGlyphs">0,3948</text>
<rect x="1353.5" y="857.0" width="504.5" height="23.9" fill="#7f7f7f"/>
<text x="1367.2" y="874.2" font-size="16" fill="#ffffff" textLength="123.0" lengthAdjust="spacingAndGlyphs" font-weight="bold">Target Y cd/m²</text>
<text x="1508.6" y="874.2" font-size="16" fill="#f4f4f4" textLength="60.0" lengthAdjust="spacingAndGlyphs">35,6509</text>
<text x="1578.2" y="874.2" font-size="16" fill="#f4f4f4" textLength="60.0" lengthAdjust="spacingAndGlyphs">34,6300</text>
<text x="1647.8" y="874.2" font-size="16" fill="#f4f4f4" textLength="60.0" lengthAdjust="spacingAndGlyphs">33,5586</text>
<text x="1717.4" y="874.2" font-size="16" fill="#f4f4f4" textLength="60.0" lengthAdjust="spacingAndGlyphs">32,7812</text>
<text x="1787.0" y="874.2" font-size="16" fill="#f4f4f4" textLength="60.0" lengthAdjust="spacingAndGlyphs">32,1533</text>
<rect x="1353.5" y="880.7" width="504.5" height="23.9" fill="#444444"/>
<text x="1367.2" y="897.9" font-size="16" fill="#ffffff" textLength="54.0" lengthAdjust="spacingAndGlyphs" font-weight="bold">ΔE ITP</text>
<text x="1508.6" y="897.9" font-size="16" fill="#f4f4f4" textLength="51.0" lengthAdjust="spacingAndGlyphs">0,4664</text>
<text x="1578.2" y="897.9" font-size="16" fill="#f4f4f4" textLength="51.0" lengthAdjust="spacingAndGlyphs">0,8422</text>
<text x="1647.8" y="897.9" font-size="16" fill="#f4f4f4" textLength="51.0" lengthAdjust="spacingAndGlyphs">1,3119</text>
<text x="1717.4" y="897.9" font-size="16" fill="#f4f4f4" textLength="51.0" lengthAdjust="spacingAndGlyphs">1,5083</text>
<text x="1787.0" y="897.9" font-size="16" fill="#f4f4f4" textLength="51.0" lengthAdjust="spacingAndGlyphs">1,1349</text>
<rect x="1353.5" y="904.3" width="504.5" height="23.9" fill="#7f7f7f"/>
<text x="1367.2" y="921.5" font-size="16" fill="#ffffff" textLength="67.5" lengthAdjust="spacingAndGlyphs" font-weight="bold">ΔE 2000</text>
<text x="1508.6" y="921.5" font-size="16" fill="#f4f4f4" textLength="51.0" lengthAdjust="spacingAndGlyphs">0,5295</text>
<text x="1578.2" y="921.5" font-size="16" fill="#f4f4f4" textLength="51.0" lengthAdjust="spacingAndGlyphs">0,6487</text>
<text x="1647.8" y="921.5" font-size="16" fill="#f4f4f4" textLength="51.0" lengthAdjust="spacingAndGlyphs">0,7719</text>
<text x="1717.4" y="921.5" font-size="16" fill="#f4f4f4" textLength="51.0" lengthAdjust="spacingAndGlyphs">0,7701</text>
<text x="1787.0" y="921.5" font-size="16" fill="#f4f4f4" textLength="51.0" lengthAdjust="spacingAndGlyphs">0,5282</text>
<rect x="1857.8" y="712" width="1.4" height="217" fill="#000"/>
<rect x="1353.5" y="928.5" width="504.5" height="16" fill="#5c5c5c"/>
<rect x="1373" y="930" width="150.5" height="13" rx="6.5" fill="#3e3e3e"/>
<rect x="1354" y="929.5" width="15" height="15" rx="2" fill="url(#gSB)" stroke="#888" stroke-width="0.8"/>
<path d="M1364,932.5 L1358,937 L1364,941.5 Z" fill="#222"/>
<rect x="1842.5" y="929.5" width="15" height="15" rx="2" fill="url(#gSB)" stroke="#888" stroke-width="0.8"/>
<path d="M1847.5,932.5 L1853.5,937 L1847.5,941.5 Z" fill="#222"/>
<text x="1485.0" y="113.7" font-size="16" fill="#d8d8d8" textLength="90.5" lengthAdjust="spacingAndGlyphs" text-anchor="middle">CIE 1976 u'v'</text>
<rect x="1129" y="121" width="712.5" height="587" fill="#232323"/>
<g clip-path="url(#cPlot)"><g clip-path="url(#cLoc)"><rect x="1151.0" y="132" width="106.5" height="5.5" fill="url(#a0)"/><rect x="1141.3" y="137" width="161.9" height="5.5" fill="url(#a1)"/><rect x="1136.3" y="142" width="208.9" height="5.5" fill="url(#a2)"/><rect x="1132.9" y="147" width="253.0" height="5.5" fill="url(#a3)"/><rect x="1130.7" y="152" width="295.4" height="5.5" fill="url(#a4)"/><rect x="1129.2" y="157" width="337.2" height="5.5" fill="url(#a5)"/><rect x="1129.0" y="162" width="377.9" height="5.5" fill="url(#a6)"/><rect x="1129.0" y="167" width="418.1" height="5.5" fill="url(#a7)"/><rect x="1129.0" y="172" width="458.4" height="5.5" fill="url(#a8)"/><rect x="1129.0" y="177" width="498.7" height="5.5" fill="url(#a9)"/><rect x="1129.0" y="182" width="539.1" height="5.5" fill="url(#a10)"/><rect x="1129.0" y="187" width="579.5" height="5.5" fill="url(#a11)"/><rect x="1129.0" y="192" width="619.8" height="5.5" fill="url(#a12)"/><rect x="1129.0" y="197" width="660.2" height="5.5" fill="url(#a13)"/><rect x="1129.3" y="202" width="700.1" height="5.5" fill="url(#a14)"/><rect x="1130.1" y="207" width="711.4" height="5.5" fill="url(#a15)"/><rect x="1131.0" y="212" width="710.5" height="5.5" fill="url(#a16)"/><rect x="1132.0" y="217" width="709.5" height="5.5" fill="url(#a17)"/><rect x="1133.1" y="222" width="708.4" height="5.5" fill="url(#a18)"/><rect x="1134.2" y="227" width="707.3" height="5.5" fill="url(#a19)"/><rect x="1135.5" y="232" width="706.0" height="5.5" fill="url(#a20)"/><rect x="1136.8" y="237" width="704.7" height="5.5" fill="url(#a21)"/><rect x="1138.1" y="242" width="702.6" height="5.5" fill="url(#a22)"/><rect x="1139.5" y="247" width="696.7" height="5.5" fill="url(#a23)"/><rect x="1141.0" y="252" width="690.7" height="5.5" fill="url(#a24)"/><rect x="1142.6" y="257" width="684.7" height="5.5" fill="url(#a25)"/><rect x="1144.1" y="262" width="678.6" height="5.5" fill="url(#a26)"/><rect x="1145.7" y="267" width="672.5" height="5.5" fill="url(#a27)"/><rect x="1147.3" y="272" width="666.3" height="5.5" fill="url(#a28)"/><rect x="1149.0" y="277" width="660.2" height="5.5" fill="url(#a29)"/><rect x="1150.8" y="282" width="653.9" height="5.5" fill="url(#a30)"/><rect x="1152.5" y="287" width="647.7" height="5.5" fill="url(#a31)"/><rect x="1154.3" y="292" width="641.4" height="5.5" fill="url(#a32)"/><rect x="1156.1" y="297" width="635.0" height="5.5" fill="url(#a33)"/><rect x="1158.0" y="302" width="628.7" height="5.5" fill="url(#a34)"/><rect x="1159.9" y="307" width="622.3" height="5.5" fill="url(#a35)"/><rect x="1161.8" y="312" width="615.8" height="5.5" fill="url(#a36)"/><rect x="1163.8" y="317" width="609.4" height="5.5" fill="url(#a37)"/><rect x="1165.7" y="322" width="602.9" height="5.5" fill="url(#a38)"/><rect x="1167.8" y="327" width="596.4" height="5.5" fill="url(#a39)"/><rect x="1169.8" y="332" width="589.8" height="5.5" fill="url(#a40)"/><rect x="1171.8" y="337" width="583.3" height="5.5" fill="url(#a41)"/><rect x="1173.9" y="342" width="576.7" height="5.5" fill="url(#a42)"/><rect x="1176.1" y="347" width="570.0" height="5.5" fill="url(#a43)"/><rect x="1178.2" y="352" width="563.4" height="5.5" fill="url(#a44)"/><rect x="1180.4" y="357" width="556.7" height="5.5" fill="url(#a45)"/><rect x="1182.7" y="362" width="549.9" height="5.5" fill="url(#a46)"/><rect x="1184.9" y="367" width="543.2" height="5.5" fill="url(#a47)"/><rect x="1187.2" y="372" width="536.4" height="5.5" fill="url(#a48)"/><rect x="1189.6" y="377" width="529.5" height="5.5" fill="url(#a49)"/><rect x="1192.0" y="382" width="522.6" height="5.5" fill="url(#a50)"/><rect x="1194.4" y="387" width="515.6" height="5.5" fill="url(#a51)"/><rect x="1196.9" y="392" width="508.7" height="5.5" fill="url(#a52)"/><rect x="1199.5" y="397" width="501.6" height="5.5" fill="url(#a53)"/><rect x="1202.0" y="402" width="494.6" height="5.5" fill="url(#a54)"/><rect x="1204.5" y="407" width="487.5" height="5.5" fill="url(#a55)"/><rect x="1207.2" y="412" width="480.4" height="5.5" fill="url(#a56)"/><rect x="1209.8" y="417" width="473.3" height="5.5" fill="url(#a57)"/><rect x="1212.4" y="422" width="466.1" height="5.5" fill="url(#a58)"/><rect x="1215.1" y="427" width="459.0" height="5.5" fill="url(#a59)"/><rect x="1217.8" y="432" width="451.7" height="5.5" fill="url(#a60)"/><rect x="1220.5" y="437" width="444.5" height="5.5" fill="url(#a61)"/><rect x="1223.2" y="442" width="437.3" height="5.5" fill="url(#a62)"/><rect x="1225.9" y="447" width="430.1" height="5.5" fill="url(#a63)"/><rect x="1228.7" y="452" width="422.8" height="5.5" fill="url(#a64)"/><rect x="1231.5" y="457" width="415.5" height="5.5" fill="url(#a65)"/><rect x="1234.3" y="462" width="408.2" height="5.5" fill="url(#a66)"/><rect x="1237.1" y="467" width="400.9" height="5.5" fill="url(#a67)"/><rect x="1240.0" y="472" width="393.5" height="5.5" fill="url(#a68)"/><rect x="1242.9" y="477" width="386.1" height="5.5" fill="url(#a69)"/><rect x="1245.8" y="482" width="378.7" height="5.5" fill="url(#a70)"/><rect x="1248.7" y="487" width="371.2" height="5.5" fill="url(#a71)"/><rect x="1251.7" y="492" width="363.8" height="5.5" fill="url(#a72)"/><rect x="1254.7" y="497" width="356.3" height="5.5" fill="url(#a73)"/><rect x="1257.7" y="502" width="348.7" height="5.5" fill="url(#a74)"/><rect x="1260.7" y="507" width="341.2" height="5.5" fill="url(#a75)"/><rect x="1263.9" y="512" width="333.5" height="5.5" fill="url(#a76)"/><rect x="1267.0" y="517" width="325.9" height="5.5" fill="url(#a77)"/><rect x="1270.2" y="522" width="318.2" height="5.5" fill="url(#a78)"/><rect x="1273.5" y="527" width="310.4" height="5.5" fill="url(#a79)"/><rect x="1276.8" y="532" width="302.7" height="5.5" fill="url(#a80)"/><rect x="1280.1" y="537" width="294.8" height="5.5" fill="url(#a81)"/><rect x="1283.5" y="542" width="286.9" height="5.5" fill="url(#a82)"/><rect x="1286.9" y="547" width="279.0" height="5.5" fill="url(#a83)"/><rect x="1290.3" y="552" width="271.1" height="5.5" fill="url(#a84)"/><rect x="1293.8" y="557" width="263.1" height="5.5" fill="url(#a85)"/><rect x="1297.4" y="562" width="255.0" height="5.5" fill="url(#a86)"/><rect x="1301.0" y="567" width="246.9" height="5.5" fill="url(#a87)"/><rect x="1304.7" y="572" width="238.7" height="5.5" fill="url(#a88)"/><rect x="1308.5" y="577" width="230.4" height="5.5" fill="url(#a89)"/><rect x="1312.3" y="582" width="222.0" height="5.5" fill="url(#a90)"/><rect x="1316.3" y="587" width="213.6" height="5.5" fill="url(#a91)"/><rect x="1320.3" y="592" width="205.1" height="5.5" fill="url(#a92)"/><rect x="1324.3" y="597" width="196.5" height="5.5" fill="url(#a93)"/><rect x="1328.5" y="602" width="187.8" height="5.5" fill="url(#a94)"/><rect x="1332.9" y="607" width="178.9" height="5.5" fill="url(#a95)"/><rect x="1337.5" y="612" width="169.9" height="5.5" fill="url(#a96)"/><rect x="1342.2" y="617" width="160.7" height="5.5" fill="url(#a97)"/><rect x="1347.0" y="622" width="151.3" height="5.5" fill="url(#a98)"/><rect x="1351.9" y="627" width="141.9" height="5.5" fill="url(#a99)"/><rect x="1357.1" y="632" width="132.2" height="5.5" fill="url(#a100)"/><rect x="1362.4" y="637" width="122.4" height="5.5" fill="url(#a101)"/><rect x="1367.8" y="642" width="112.5" height="5.5" fill="url(#a102)"/><rect x="1373.3" y="647" width="102.5" height="5.5" fill="url(#a103)"/><rect x="1378.9" y="652" width="92.4" height="5.5" fill="url(#a104)"/><rect x="1384.5" y="657" width="82.3" height="5.5" fill="url(#a105)"/><rect x="1390.1" y="662" width="72.1" height="5.5" fill="url(#a106)"/><rect x="1395.7" y="667" width="62.0" height="5.5" fill="url(#a107)"/><rect x="1401.3" y="672" width="52.0" height="5.5" fill="url(#a108)"/><rect x="1406.7" y="677" width="42.0" height="5.5" fill="url(#a109)"/><rect x="1412.3" y="682" width="32.0" height="5.5" fill="url(#a110)"/><rect x="1418.2" y="687" width="21.6" height="5.5" fill="url(#a111)"/></g></g>
<g clip-path="url(#cTri)"><rect x="1274.1" y="154" width="30.3" height="4.5" fill="url(#b0)"/><rect x="1274.4" y="158" width="69.6" height="4.5" fill="url(#b1)"/><rect x="1275.0" y="162" width="108.6" height="4.5" fill="url(#b2)"/><rect x="1275.6" y="166" width="147.5" height="4.5" fill="url(#b3)"/><rect x="1276.2" y="170" width="186.5" height="4.5" fill="url(#b4)"/><rect x="1276.8" y="174" width="225.5" height="4.5" fill="url(#b5)"/><rect x="1277.4" y="178" width="264.5" height="4.5" fill="url(#b6)"/><rect x="1277.9" y="182" width="303.5" height="4.5" fill="url(#b7)"/><rect x="1278.5" y="186" width="342.5" height="4.5" fill="url(#b8)"/><rect x="1279.1" y="190" width="381.5" height="4.5" fill="url(#b9)"/><rect x="1279.7" y="194" width="384.9" height="4.5" fill="url(#b10)"/><rect x="1280.3" y="198" width="382.4" height="4.5" fill="url(#b11)"/><rect x="1280.9" y="202" width="378.2" height="4.5" fill="url(#b12)"/><rect x="1281.5" y="206" width="373.9" height="4.5" fill="url(#b13)"/><rect x="1282.1" y="210" width="369.7" height="4.5" fill="url(#b14)"/><rect x="1282.7" y="214" width="365.4" height="4.5" fill="url(#b15)"/><rect x="1283.3" y="218" width="361.2" height="4.5" fill="url(#b16)"/><rect x="1283.9" y="222" width="356.9" height="4.5" fill="url(#b17)"/><rect x="1284.5" y="226" width="352.7" height="4.5" fill="url(#b18)"/><rect x="1285.1" y="230" width="348.4" height="4.5" fill="url(#b19)"/><rect x="1285.7" y="234" width="344.1" height="4.5" fill="url(#b20)"/><rect x="1286.3" y="238" width="339.9" height="4.5" fill="url(#b21)"/><rect x="1286.9" y="242" width="335.6" height="4.5" fill="url(#b22)"/><rect x="1287.5" y="246" width="331.4" height="4.5" fill="url(#b23)"/><rect x="1288.1" y="250" width="327.1" height="4.5" fill="url(#b24)"/><rect x="1288.7" y="254" width="322.9" height="4.5" fill="url(#b25)"/><rect x="1289.3" y="258" width="318.6" height="4.5" fill="url(#b26)"/><rect x="1289.9" y="262" width="314.4" height="4.5" fill="url(#b27)"/><rect x="1290.4" y="266" width="310.1" height="4.5" fill="url(#b28)"/><rect x="1291.0" y="270" width="305.9" height="4.5" fill="url(#b29)"/><rect x="1291.6" y="274" width="301.6" height="4.5" fill="url(#b30)"/><rect x="1292.2" y="278" width="297.4" height="4.5" fill="url(#b31)"/><rect x="1292.8" y="282" width="293.1" height="4.5" fill="url(#b32)"/><rect x="1293.4" y="286" width="288.8" height="4.5" fill="url(#b33)"/><rect x="1294.0" y="290" width="284.6" height="4.5" fill="url(#b34)"/><rect x="1294.6" y="294" width="280.3" height="4.5" fill="url(#b35)"/><rect x="1295.2" y="298" width="276.1" height="4.5" fill="url(#b36)"/><rect x="1295.8" y="302" width="271.8" height="4.5" fill="url(#b37)"/><rect x="1296.4" y="306" width="267.6" height="4.5" fill="url(#b38)"/><rect x="1297.0" y="310" width="263.3" height="4.5" fill="url(#b39)"/><rect x="1297.6" y="314" width="259.1" height="4.5" fill="url(#b40)"/><rect x="1298.2" y="318" width="254.8" height="4.5" fill="url(#b41)"/><rect x="1298.8" y="322" width="250.6" height="4.5" fill="url(#b42)"/><rect x="1299.4" y="326" width="246.3" height="4.5" fill="url(#b43)"/><rect x="1300.0" y="330" width="242.1" height="4.5" fill="url(#b44)"/><rect x="1300.6" y="334" width="237.8" height="4.5" fill="url(#b45)"/><rect x="1301.2" y="338" width="233.5" height="4.5" fill="url(#b46)"/><rect x="1301.8" y="342" width="229.3" height="4.5" fill="url(#b47)"/><rect x="1302.4" y="346" width="225.0" height="4.5" fill="url(#b48)"/><rect x="1302.9" y="350" width="220.8" height="4.5" fill="url(#b49)"/><rect x="1303.5" y="354" width="216.5" height="4.5" fill="url(#b50)"/><rect x="1304.1" y="358" width="212.3" height="4.5" fill="url(#b51)"/><rect x="1304.7" y="362" width="208.0" height="4.5" fill="url(#b52)"/><rect x="1305.3" y="366" width="203.8" height="4.5" fill="url(#b53)"/><rect x="1305.9" y="370" width="199.5" height="4.5" fill="url(#b54)"/><rect x="1306.5" y="374" width="195.3" height="4.5" fill="url(#b55)"/><rect x="1307.1" y="378" width="191.0" height="4.5" fill="url(#b56)"/><rect x="1307.7" y="382" width="186.8" height="4.5" fill="url(#b57)"/><rect x="1308.3" y="386" width="182.5" height="4.5" fill="url(#b58)"/><rect x="1308.9" y="390" width="178.2" height="4.5" fill="url(#b59)"/><rect x="1309.5" y="394" width="174.0" height="4.5" fill="url(#b60)"/><rect x="1310.1" y="398" width="169.7" height="4.5" fill="url(#b61)"/><rect x="1310.7" y="402" width="165.5" height="4.5" fill="url(#b62)"/><rect x="1311.3" y="406" width="161.2" height="4.5" fill="url(#b63)"/><rect x="1311.9" y="410" width="157.0" height="4.5" fill="url(#b64)"/><rect x="1312.5" y="414" width="152.7" height="4.5" fill="url(#b65)"/><rect x="1313.1" y="418" width="148.5" height="4.5" fill="url(#b66)"/><rect x="1313.7" y="422" width="144.2" height="4.5" fill="url(#b67)"/><rect x="1314.3" y="426" width="140.0" height="4.5" fill="url(#b68)"/><rect x="1314.9" y="430" width="135.7" height="4.5" fill="url(#b69)"/><rect x="1315.4" y="434" width="131.4" height="4.5" fill="url(#b70)"/><rect x="1316.0" y="438" width="127.2" height="4.5" fill="url(#b71)"/><rect x="1316.6" y="442" width="122.9" height="4.5" fill="url(#b72)"/><rect x="1317.2" y="446" width="118.7" height="4.5" fill="url(#b73)"/><rect x="1317.8" y="450" width="114.4" height="4.5" fill="url(#b74)"/><rect x="1318.4" y="454" width="110.2" height="4.5" fill="url(#b75)"/><rect x="1319.0" y="458" width="105.9" height="4.5" fill="url(#b76)"/><rect x="1319.6" y="462" width="101.7" height="4.5" fill="url(#b77)"/><rect x="1320.2" y="466" width="97.4" height="4.5" fill="url(#b78)"/><rect x="1320.8" y="470" width="93.2" height="4.5" fill="url(#b79)"/><rect x="1321.4" y="474" width="88.9" height="4.5" fill="url(#b80)"/><rect x="1322.0" y="478" width="84.7" height="4.5" fill="url(#b81)"/><rect x="1322.6" y="482" width="80.4" height="4.5" fill="url(#b82)"/><rect x="1323.2" y="486" width="76.1" height="4.5" fill="url(#b83)"/><rect x="1323.8" y="490" width="71.9" height="4.5" fill="url(#b84)"/><rect x="1324.4" y="494" width="67.6" height="4.5" fill="url(#b85)"/><rect x="1325.0" y="498" width="63.4" height="4.5" fill="url(#b86)"/><rect x="1325.6" y="502" width="59.1" height="4.5" fill="url(#b87)"/><rect x="1326.2" y="506" width="54.9" height="4.5" fill="url(#b88)"/><rect x="1326.8" y="510" width="50.6" height="4.5" fill="url(#b89)"/><rect x="1327.4" y="514" width="46.4" height="4.5" fill="url(#b90)"/><rect x="1327.9" y="518" width="42.1" height="4.5" fill="url(#b91)"/><rect x="1328.5" y="522" width="37.9" height="4.5" fill="url(#b92)"/><rect x="1329.1" y="526" width="33.6" height="4.5" fill="url(#b93)"/><rect x="1329.7" y="530" width="29.4" height="4.5" fill="url(#b94)"/><rect x="1330.3" y="534" width="25.1" height="4.5" fill="url(#b95)"/><rect x="1330.9" y="538" width="20.8" height="4.5" fill="url(#b96)"/><rect x="1331.5" y="542" width="16.6" height="4.5" fill="url(#b97)"/><rect x="1332.1" y="546" width="12.3" height="4.5" fill="url(#b98)"/><rect x="1332.7" y="550" width="8.1" height="4.5" fill="url(#b99)"/></g>
<rect x="1128.8" y="120.8" width="712.5" height="587" fill="none" stroke="#a8a8a8" stroke-width="1.4"/>
<g><rect x="1351.8" y="237.4" width="12.2" height="12.2" fill="#e8ffe6"/><rect x="1347.8" y="233.0" width="12.2" height="12.2" fill="#d5ffd4"/><rect x="1343.7" y="228.5" width="12.2" height="12.2" fill="#c4ffc2"/><rect x="1339.6" y="224.0" width="12.2" height="12.2" fill="#b4ffb2"/><rect x="1335.5" y="219.5" width="12.2" height="12.2" fill="#a5ffa2"/><rect x="1331.5" y="215.1" width="12.2" height="12.2" fill="#96ff94"/><rect x="1327.4" y="210.6" width="12.2" height="12.2" fill="#88ff86"/><rect x="1323.3" y="206.1" width="12.2" height="12.2" fill="#7bff78"/><rect x="1319.3" y="201.7" width="12.2" height="12.2" fill="#6fff6c"/><rect x="1315.2" y="197.2" width="12.2" height="12.2" fill="#63ff60"/><rect x="1311.1" y="192.7" width="12.2" height="12.2" fill="#58ff55"/><rect x="1307.0" y="188.2" width="12.2" height="12.2" fill="#4dff4a"/><rect x="1303.0" y="183.8" width="12.2" height="12.2" fill="#43ff3f"/><rect x="1298.9" y="179.3" width="12.2" height="12.2" fill="#3aff35"/><rect x="1294.8" y="174.8" width="12.2" height="12.2" fill="#30ff2c"/><rect x="1290.8" y="170.4" width="12.2" height="12.2" fill="#27ff23"/><rect x="1286.7" y="165.9" width="12.2" height="12.2" fill="#1fff1a"/><rect x="1282.6" y="161.4" width="12.2" height="12.2" fill="#17ff12"/><rect x="1278.5" y="156.9" width="12.2" height="12.2" fill="#0fff0a"/><rect x="1274.5" y="152.5" width="12.2" height="12.2" fill="#07ff02"/><rect x="1270.4" y="148.0" width="12.2" height="12.2" fill="#00ff00"/><rect x="1356.8" y="237.6" width="12.2" height="12.2" fill="#fdffea"/><rect x="1357.6" y="233.3" width="12.2" height="12.2" fill="#fffeda"/><rect x="1358.4" y="229.0" width="12.2" height="12.2" fill="#fffdc9"/><rect x="1358.7" y="224.6" width="12.2" height="12.2" fill="#fffdba"/><rect x="1359.0" y="220.3" width="12.2" height="12.2" fill="#fffdab"/><rect x="1359.4" y="215.9" width="12.2" height="12.2" fill="#fffe9d"/><rect x="1359.7" y="211.6" width="12.2" height="12.2" fill="#fffe8f"/><rect x="1360.0" y="207.2" width="12.2" height="12.2" fill="#fffe81"/><rect x="1360.3" y="202.8" width="12.2" height="12.2" fill="#fffe74"/><rect x="1360.9" y="198.5" width="12.2" height="12.2" fill="#fffe66"/><rect x="1361.5" y="194.2" width="12.2" height="12.2" fill="#fffd59"/><rect x="1362.1" y="189.8" width="12.2" height="12.2" fill="#fffc4d"/><rect x="1362.6" y="185.5" width="12.2" height="12.2" fill="#fffb40"/><rect x="1363.2" y="181.1" width="12.2" height="12.2" fill="#fffb34"/><rect x="1363.8" y="176.8" width="12.2" height="12.2" fill="#fffa29"/><rect x="1364.7" y="172.5" width="12.2" height="12.2" fill="#fff81e"/><rect x="1365.5" y="168.2" width="12.2" height="12.2" fill="#fff613"/><rect x="1366.4" y="163.9" width="12.2" height="12.2" fill="#fff508"/><rect x="1367.3" y="159.6" width="12.2" height="12.2" fill="#fff300"/><rect x="1352.5" y="242.6" width="12.2" height="12.2" fill="#ecfffb"/><rect x="1349.1" y="243.4" width="12.2" height="12.2" fill="#defffb"/><rect x="1345.8" y="244.1" width="12.2" height="12.2" fill="#d0fffc"/><rect x="1342.4" y="244.9" width="12.2" height="12.2" fill="#c2fffc"/><rect x="1339.0" y="245.6" width="12.2" height="12.2" fill="#b4fffd"/><rect x="1335.6" y="246.3" width="12.2" height="12.2" fill="#a7fffd"/><rect x="1332.2" y="247.1" width="12.2" height="12.2" fill="#9afffe"/><rect x="1328.9" y="247.8" width="12.2" height="12.2" fill="#8dfffe"/><rect x="1325.5" y="248.5" width="12.2" height="12.2" fill="#80ffff"/><rect x="1322.1" y="249.3" width="12.2" height="12.2" fill="#74ffff"/><rect x="1318.7" y="250.0" width="12.2" height="12.2" fill="#67feff"/><rect x="1315.3" y="250.8" width="12.2" height="12.2" fill="#5bfeff"/><rect x="1311.9" y="251.5" width="12.2" height="12.2" fill="#50fdff"/><rect x="1308.6" y="252.2" width="12.2" height="12.2" fill="#44fdff"/><rect x="1305.2" y="253.0" width="12.2" height="12.2" fill="#39fcff"/><rect x="1301.8" y="253.7" width="12.2" height="12.2" fill="#2efcff"/><rect x="1298.4" y="254.4" width="12.2" height="12.2" fill="#23fcff"/><rect x="1295.0" y="255.2" width="12.2" height="12.2" fill="#19fbff"/><rect x="1291.7" y="255.9" width="12.2" height="12.2" fill="#0efbff"/><rect x="1288.3" y="256.7" width="12.2" height="12.2" fill="#04faff"/><rect x="1284.9" y="257.4" width="12.2" height="12.2" fill="#00faff"/><rect x="1366.6" y="238.6" width="12.2" height="12.2" fill="#ffd9d0"/><rect x="1379.6" y="235.5" width="12.2" height="12.2" fill="#ffb3a9"/><rect x="1392.7" y="232.0" width="12.2" height="12.2" fill="#ff968a"/><rect x="1405.8" y="230.7" width="12.2" height="12.2" fill="#ff7f76"/><rect x="1421.5" y="228.1" width="12.2" height="12.2" fill="#ff6962"/><rect x="1436.8" y="225.1" width="12.2" height="12.2" fill="#ff5852"/><rect x="1449.9" y="222.9" width="12.2" height="12.2" fill="#ff4c47"/><rect x="1466.9" y="219.8" width="12.2" height="12.2" fill="#ff403a"/><rect x="1476.5" y="218.1" width="12.2" height="12.2" fill="#ff3934"/><rect x="1494.4" y="214.6" width="12.2" height="12.2" fill="#ff2f2a"/><rect x="1510.9" y="212.0" width="12.2" height="12.2" fill="#ff2723"/><rect x="1524.0" y="209.4" width="12.2" height="12.2" fill="#ff221e"/><rect x="1536.7" y="207.2" width="12.2" height="12.2" fill="#ff1d19"/><rect x="1554.1" y="204.1" width="12.2" height="12.2" fill="#ff1714"/><rect x="1568.9" y="201.5" width="12.2" height="12.2" fill="#ff1310"/><rect x="1586.8" y="198.9" width="12.2" height="12.2" fill="#ff0e0b"/><rect x="1601.2" y="195.4" width="12.2" height="12.2" fill="#ff0b08"/><rect x="1623.4" y="192.8" width="12.2" height="12.2" fill="#ff0604"/><rect x="1641.8" y="191.5" width="12.2" height="12.2" fill="#ff0202"/><rect x="1659.2" y="188.9" width="12.2" height="12.2" fill="#ff0000"/><rect x="1367.0" y="248.4" width="12.2" height="12.2" fill="#ffd3ed"/><rect x="1370.4" y="252.6" width="12.2" height="12.2" fill="#ffc6ef"/><rect x="1376.3" y="258.8" width="12.2" height="12.2" fill="#ffb2f0"/><rect x="1382.2" y="263.6" width="12.2" height="12.2" fill="#ffa0ec"/><rect x="1386.4" y="268.6" width="12.2" height="12.2" fill="#ff94ee"/><rect x="1390.6" y="274.5" width="12.2" height="12.2" fill="#ff88f2"/><rect x="1396.5" y="282.1" width="12.2" height="12.2" fill="#ff79f6"/><rect x="1401.6" y="286.3" width="12.2" height="12.2" fill="#ff6ef4"/><rect x="1408.3" y="293.9" width="12.2" height="12.2" fill="#ff60f5"/><rect x="1415.9" y="301.5" width="12.2" height="12.2" fill="#ff52f4"/><rect x="1420.1" y="307.1" width="12.2" height="12.2" fill="#ff4bf7"/><rect x="1426.0" y="313.3" width="12.2" height="12.2" fill="#ff41f7"/><rect x="1433.3" y="321.7" width="12.2" height="12.2" fill="#ff36f8"/><rect x="1442.0" y="332.4" width="12.2" height="12.2" fill="#ff2afb"/><rect x="1447.9" y="339.4" width="12.2" height="12.2" fill="#ff23fc"/><rect x="1457.2" y="348.2" width="12.2" height="12.2" fill="#ff19fb"/><rect x="1467.0" y="358.3" width="12.2" height="12.2" fill="#ff0ffa"/><rect x="1476.3" y="367.3" width="12.2" height="12.2" fill="#ff07f9"/><rect x="1487.6" y="379.6" width="12.2" height="12.2" fill="#ff00f9"/><rect x="1355.9" y="258.4" width="12.2" height="12.2" fill="#ceccff"/><rect x="1354.9" y="268.8" width="12.2" height="12.2" fill="#b3b1ff"/><rect x="1354.1" y="278.4" width="12.2" height="12.2" fill="#9f9dff"/><rect x="1353.2" y="287.4" width="12.2" height="12.2" fill="#8f8dff"/><rect x="1352.4" y="296.4" width="12.2" height="12.2" fill="#817fff"/><rect x="1351.3" y="308.4" width="12.2" height="12.2" fill="#706fff"/><rect x="1350.2" y="320.9" width="12.2" height="12.2" fill="#6261ff"/><rect x="1349.0" y="334.4" width="12.2" height="12.2" fill="#5555ff"/><rect x="1347.6" y="349.4" width="12.2" height="12.2" fill="#4948ff"/><rect x="1346.3" y="364.4" width="12.2" height="12.2" fill="#3e3eff"/><rect x="1345.3" y="375.9" width="12.2" height="12.2" fill="#3737ff"/><rect x="1343.5" y="395.1" width="12.2" height="12.2" fill="#2d2dff"/><rect x="1342.1" y="410.4" width="12.2" height="12.2" fill="#2626ff"/><rect x="1340.4" y="430.1" width="12.2" height="12.2" fill="#1e1eff"/><rect x="1338.7" y="448.0" width="12.2" height="12.2" fill="#1818ff"/><rect x="1336.9" y="468.0" width="12.2" height="12.2" fill="#1212ff"/><rect x="1334.7" y="492.4" width="12.2" height="12.2" fill="#0b0bff"/><rect x="1332.3" y="519.4" width="12.2" height="12.2" fill="#0505ff"/><rect x="1329.9" y="545.9" width="12.2" height="12.2" fill="#0000ff"/></g>
<g fill="none" stroke="#ffffff" stroke-width="1.6"><rect x="1351.0" y="236.6" width="13.8" height="13.8"/><rect x="1347.0" y="232.2" width="13.8" height="13.8"/><rect x="1342.9" y="227.7" width="13.8" height="13.8"/><rect x="1338.8" y="223.2" width="13.8" height="13.8"/><rect x="1334.7" y="218.7" width="13.8" height="13.8"/><rect x="1330.7" y="214.3" width="13.8" height="13.8"/><rect x="1326.6" y="209.8" width="13.8" height="13.8"/><rect x="1322.5" y="205.3" width="13.8" height="13.8"/><rect x="1318.5" y="200.9" width="13.8" height="13.8"/><rect x="1314.4" y="196.4" width="13.8" height="13.8"/><rect x="1310.3" y="191.9" width="13.8" height="13.8"/><rect x="1306.2" y="187.4" width="13.8" height="13.8"/><rect x="1302.2" y="183.0" width="13.8" height="13.8"/><rect x="1298.1" y="178.5" width="13.8" height="13.8"/><rect x="1294.0" y="174.0" width="13.8" height="13.8"/><rect x="1290.0" y="169.6" width="13.8" height="13.8"/><rect x="1285.9" y="165.1" width="13.8" height="13.8"/><rect x="1281.8" y="160.6" width="13.8" height="13.8"/><rect x="1277.7" y="156.1" width="13.8" height="13.8"/><rect x="1273.7" y="151.7" width="13.8" height="13.8"/><rect x="1269.6" y="147.2" width="13.8" height="13.8"/><rect x="1356.0" y="236.8" width="13.8" height="13.8"/><rect x="1356.8" y="232.5" width="13.8" height="13.8"/><rect x="1357.6" y="228.2" width="13.8" height="13.8"/><rect x="1357.9" y="223.8" width="13.8" height="13.8"/><rect x="1358.2" y="219.5" width="13.8" height="13.8"/><rect x="1358.6" y="215.1" width="13.8" height="13.8"/><rect x="1358.9" y="210.8" width="13.8" height="13.8"/><rect x="1359.2" y="206.4" width="13.8" height="13.8"/><rect x="1359.5" y="202.0" width="13.8" height="13.8"/><rect x="1360.1" y="197.7" width="13.8" height="13.8"/><rect x="1360.7" y="193.4" width="13.8" height="13.8"/><rect x="1361.3" y="189.0" width="13.8" height="13.8"/><rect x="1361.8" y="184.7" width="13.8" height="13.8"/><rect x="1362.4" y="180.3" width="13.8" height="13.8"/><rect x="1363.0" y="176.0" width="13.8" height="13.8"/><rect x="1363.9" y="171.7" width="13.8" height="13.8"/><rect x="1364.7" y="167.4" width="13.8" height="13.8"/><rect x="1365.6" y="163.1" width="13.8" height="13.8"/><rect x="1366.5" y="158.8" width="13.8" height="13.8"/><rect x="1351.7" y="241.8" width="13.8" height="13.8"/><rect x="1348.3" y="242.6" width="13.8" height="13.8"/><rect x="1345.0" y="243.3" width="13.8" height="13.8"/><rect x="1341.6" y="244.1" width="13.8" height="13.8"/><rect x="1338.2" y="244.8" width="13.8" height="13.8"/><rect x="1334.8" y="245.5" width="13.8" height="13.8"/><rect x="1331.4" y="246.3" width="13.8" height="13.8"/><rect x="1328.1" y="247.0" width="13.8" height="13.8"/><rect x="1324.7" y="247.7" width="13.8" height="13.8"/><rect x="1321.3" y="248.5" width="13.8" height="13.8"/><rect x="1317.9" y="249.2" width="13.8" height="13.8"/><rect x="1314.5" y="250.0" width="13.8" height="13.8"/><rect x="1311.1" y="250.7" width="13.8" height="13.8"/><rect x="1307.8" y="251.4" width="13.8" height="13.8"/><rect x="1304.4" y="252.2" width="13.8" height="13.8"/><rect x="1301.0" y="252.9" width="13.8" height="13.8"/><rect x="1297.6" y="253.6" width="13.8" height="13.8"/><rect x="1294.2" y="254.4" width="13.8" height="13.8"/><rect x="1290.9" y="255.1" width="13.8" height="13.8"/><rect x="1287.5" y="255.9" width="13.8" height="13.8"/><rect x="1284.1" y="256.6" width="13.8" height="13.8"/><rect x="1365.8" y="237.8" width="13.8" height="13.8"/><rect x="1378.8" y="234.7" width="13.8" height="13.8"/><rect x="1391.9" y="231.2" width="13.8" height="13.8"/><rect x="1405.0" y="229.9" width="13.8" height="13.8"/><rect x="1420.7" y="227.3" width="13.8" height="13.8"/><rect x="1436.0" y="224.3" width="13.8" height="13.8"/><rect x="1449.1" y="222.1" width="13.8" height="13.8"/><rect x="1466.1" y="219.0" width="13.8" height="13.8"/><rect x="1475.7" y="217.3" width="13.8" height="13.8"/><rect x="1493.6" y="213.8" width="13.8" height="13.8"/><rect x="1510.1" y="211.2" width="13.8" height="13.8"/><rect x="1523.2" y="208.6" width="13.8" height="13.8"/><rect x="1535.9" y="206.4" width="13.8" height="13.8"/><rect x="1553.3" y="203.3" width="13.8" height="13.8"/><rect x="1568.1" y="200.7" width="13.8" height="13.8"/><rect x="1586.0" y="198.1" width="13.8" height="13.8"/><rect x="1600.4" y="194.6" width="13.8" height="13.8"/><rect x="1622.6" y="192.0" width="13.8" height="13.8"/><rect x="1641.0" y="190.7" width="13.8" height="13.8"/><rect x="1658.4" y="188.1" width="13.8" height="13.8"/><rect x="1366.2" y="247.6" width="13.8" height="13.8"/><rect x="1369.6" y="251.8" width="13.8" height="13.8"/><rect x="1375.5" y="258.0" width="13.8" height="13.8"/><rect x="1381.4" y="262.8" width="13.8" height="13.8"/><rect x="1385.6" y="267.8" width="13.8" height="13.8"/><rect x="1389.8" y="273.7" width="13.8" height="13.8"/><rect x="1395.7" y="281.3" width="13.8" height="13.8"/><rect x="1400.8" y="285.5" width="13.8" height="13.8"/><rect x="1407.5" y="293.1" width="13.8" height="13.8"/><rect x="1415.1" y="300.7" width="13.8" height="13.8"/><rect x="1419.3" y="306.3" width="13.8" height="13.8"/><rect x="1425.2" y="312.5" width="13.8" height="13.8"/><rect x="1432.5" y="320.9" width="13.8" height="13.8"/><rect x="1441.2" y="331.6" width="13.8" height="13.8"/><rect x="1447.1" y="338.6" width="13.8" height="13.8"/><rect x="1456.4" y="347.4" width="13.8" height="13.8"/><rect x="1466.2" y="357.5" width="13.8" height="13.8"/><rect x="1475.5" y="366.5" width="13.8" height="13.8"/><rect x="1486.8" y="378.8" width="13.8" height="13.8"/><rect x="1355.1" y="257.6" width="13.8" height="13.8"/><rect x="1354.1" y="268.0" width="13.8" height="13.8"/><rect x="1353.3" y="277.6" width="13.8" height="13.8"/><rect x="1352.4" y="286.6" width="13.8" height="13.8"/><rect x="1351.6" y="295.6" width="13.8" height="13.8"/><rect x="1350.5" y="307.6" width="13.8" height="13.8"/><rect x="1349.4" y="320.1" width="13.8" height="13.8"/><rect x="1348.2" y="333.6" width="13.8" height="13.8"/><rect x="1346.8" y="348.6" width="13.8" height="13.8"/><rect x="1345.5" y="363.6" width="13.8" height="13.8"/><rect x="1344.5" y="375.1" width="13.8" height="13.8"/><rect x="1342.7" y="394.3" width="13.8" height="13.8"/><rect x="1341.3" y="409.6" width="13.8" height="13.8"/><rect x="1339.6" y="429.3" width="13.8" height="13.8"/><rect x="1337.9" y="447.2" width="13.8" height="13.8"/><rect x="1336.1" y="467.2" width="13.8" height="13.8"/><rect x="1333.9" y="491.6" width="13.8" height="13.8"/><rect x="1331.5" y="518.6" width="13.8" height="13.8"/><rect x="1329.1" y="545.1" width="13.8" height="13.8"/></g>
<g stroke="#000" stroke-width="1.3"><circle cx="1357.8" cy="243.6" r="4.9" fill="#b2b9b2"/><circle cx="1353.5" cy="239.2" r="4.9" fill="#abb9ab"/><circle cx="1349.3" cy="234.8" r="4.9" fill="#a4b9a4"/><circle cx="1345.0" cy="230.4" r="4.9" fill="#9db99d"/><circle cx="1340.8" cy="226.0" r="4.9" fill="#96b996"/><circle cx="1336.6" cy="221.6" r="4.9" fill="#8fb98f"/><circle cx="1332.3" cy="217.2" r="4.9" fill="#88b988"/><circle cx="1328.1" cy="212.8" r="4.9" fill="#81b981"/><circle cx="1323.9" cy="208.4" r="4.9" fill="#7ab97a"/><circle cx="1319.6" cy="204.0" r="4.9" fill="#73b973"/><circle cx="1315.4" cy="199.6" r="4.9" fill="#6db96d"/><circle cx="1311.1" cy="195.2" r="4.9" fill="#66b966"/><circle cx="1306.9" cy="190.8" r="4.9" fill="#5fb95f"/><circle cx="1302.7" cy="186.4" r="4.9" fill="#58b958"/><circle cx="1298.4" cy="182.0" r="4.9" fill="#51b951"/><circle cx="1294.2" cy="177.6" r="4.9" fill="#4ab94a"/><circle cx="1290.0" cy="173.2" r="4.9" fill="#43b943"/><circle cx="1285.7" cy="168.8" r="4.9" fill="#3cb93c"/><circle cx="1281.5" cy="164.4" r="4.9" fill="#35b935"/><circle cx="1277.2" cy="160.0" r="4.9" fill="#2eb92e"/><circle cx="1273.0" cy="155.6" r="4.9" fill="#28b928"/><circle cx="1362.7" cy="243.7" r="4.9" fill="#bab9af"/><circle cx="1363.4" cy="239.4" r="4.9" fill="#bbb9a5"/><circle cx="1364.0" cy="235.1" r="4.9" fill="#bcb99b"/><circle cx="1364.2" cy="230.7" r="4.9" fill="#bdba92"/><circle cx="1364.4" cy="226.4" r="4.9" fill="#beba88"/><circle cx="1364.5" cy="222.0" r="4.9" fill="#bfba7e"/><circle cx="1364.7" cy="217.7" r="4.9" fill="#c0ba74"/><circle cx="1364.8" cy="213.3" r="4.9" fill="#c1bb6b"/><circle cx="1365.0" cy="208.9" r="4.9" fill="#c2bb61"/><circle cx="1365.4" cy="204.6" r="4.9" fill="#c3bb57"/><circle cx="1365.8" cy="200.3" r="4.9" fill="#c4bb4d"/><circle cx="1366.3" cy="195.9" r="4.9" fill="#c5bc44"/><circle cx="1366.7" cy="191.6" r="4.9" fill="#c6bc3a"/><circle cx="1367.1" cy="187.2" r="4.9" fill="#c7bc30"/><circle cx="1367.5" cy="182.9" r="4.9" fill="#c8bc26"/><circle cx="1368.2" cy="178.6" r="4.9" fill="#c9bd1d"/><circle cx="1369.0" cy="174.3" r="4.9" fill="#cabd13"/><circle cx="1369.7" cy="170.0" r="4.9" fill="#cbbd09"/><circle cx="1370.4" cy="165.7" r="4.9" fill="#cdbe00"/><circle cx="1358.7" cy="248.6" r="4.9" fill="#b1b8b9"/><circle cx="1355.3" cy="249.3" r="4.9" fill="#aab8b9"/><circle cx="1352.0" cy="249.9" r="4.9" fill="#a2b7b9"/><circle cx="1348.7" cy="250.6" r="4.9" fill="#9bb7b9"/><circle cx="1345.3" cy="251.2" r="4.9" fill="#94b6b9"/><circle cx="1342.0" cy="251.9" r="4.9" fill="#8cb6b9"/><circle cx="1338.7" cy="252.5" r="4.9" fill="#85b5b9"/><circle cx="1335.3" cy="253.1" r="4.9" fill="#7db5b9"/><circle cx="1332.0" cy="253.8" r="4.9" fill="#76b4b9"/><circle cx="1328.7" cy="254.4" r="4.9" fill="#6fb4b9"/><circle cx="1325.3" cy="255.1" r="4.9" fill="#67b3b9"/><circle cx="1322.0" cy="255.7" r="4.9" fill="#60b3b9"/><circle cx="1318.7" cy="256.4" r="4.9" fill="#59b2b9"/><circle cx="1315.3" cy="257.0" r="4.9" fill="#51b2b9"/><circle cx="1312.0" cy="257.6" r="4.9" fill="#4ab1b9"/><circle cx="1308.7" cy="258.3" r="4.9" fill="#42b1b9"/><circle cx="1305.3" cy="258.9" r="4.9" fill="#3bb0b9"/><circle cx="1302.0" cy="259.6" r="4.9" fill="#34b0b9"/><circle cx="1298.7" cy="260.2" r="4.9" fill="#2cafb9"/><circle cx="1295.3" cy="260.9" r="4.9" fill="#25afb9"/><circle cx="1292.0" cy="261.5" r="4.9" fill="#1eafb9"/><circle cx="1375.7" cy="246.7" r="4.9" fill="#b9b1b1"/><circle cx="1388.7" cy="243.6" r="4.9" fill="#baa9a9"/><circle cx="1401.8" cy="240.1" r="4.9" fill="#bba1a1"/><circle cx="1414.9" cy="238.8" r="4.9" fill="#bc9a9a"/><circle cx="1430.6" cy="236.2" r="4.9" fill="#bc9292"/><circle cx="1445.9" cy="233.2" r="4.9" fill="#bd8a8a"/><circle cx="1459.0" cy="231.0" r="4.9" fill="#be8282"/><circle cx="1476.0" cy="227.9" r="4.9" fill="#bf7b7b"/><circle cx="1485.6" cy="226.2" r="4.9" fill="#bf7373"/><circle cx="1503.5" cy="222.7" r="4.9" fill="#c06b6b"/><circle cx="1520.0" cy="220.1" r="4.9" fill="#c16363"/><circle cx="1533.1" cy="217.5" r="4.9" fill="#c25c5c"/><circle cx="1545.8" cy="215.3" r="4.9" fill="#c25454"/><circle cx="1563.2" cy="212.2" r="4.9" fill="#c34c4c"/><circle cx="1578.0" cy="209.6" r="4.9" fill="#c44444"/><circle cx="1595.9" cy="207.0" r="4.9" fill="#c53d3d"/><circle cx="1610.3" cy="203.5" r="4.9" fill="#c53535"/><circle cx="1632.5" cy="200.9" r="4.9" fill="#c62d2d"/><circle cx="1650.9" cy="199.6" r="4.9" fill="#c72525"/><circle cx="1668.3" cy="197.0" r="4.9" fill="#c81e1e"/><circle cx="1370.6" cy="257.0" r="4.9" fill="#b9b0b9"/><circle cx="1374.0" cy="261.2" r="4.9" fill="#b9a8b9"/><circle cx="1379.9" cy="267.4" r="4.9" fill="#b9a0b9"/><circle cx="1385.8" cy="272.2" r="4.9" fill="#b998b9"/><circle cx="1390.0" cy="277.2" r="4.9" fill="#b990b9"/><circle cx="1394.2" cy="283.1" r="4.9" fill="#b988b9"/><circle cx="1400.1" cy="290.7" r="4.9" fill="#b97fb9"/><circle cx="1405.2" cy="294.9" r="4.9" fill="#b977b9"/><circle cx="1411.9" cy="302.5" r="4.9" fill="#b96fb9"/><circle cx="1419.5" cy="310.1" r="4.9" fill="#b967b9"/><circle cx="1423.7" cy="315.7" r="4.9" fill="#b95fb9"/><circle cx="1429.6" cy="321.9" r="4.9" fill="#b957b9"/><circle cx="1436.9" cy="330.3" r="4.9" fill="#b94eb9"/><circle cx="1445.6" cy="341.0" r="4.9" fill="#b946b9"/><circle cx="1451.5" cy="348.0" r="4.9" fill="#b93eb9"/><circle cx="1460.8" cy="356.8" r="4.9" fill="#b936b9"/><circle cx="1470.6" cy="366.9" r="4.9" fill="#b92eb9"/><circle cx="1479.9" cy="375.9" r="4.9" fill="#b926b9"/><circle cx="1491.2" cy="388.2" r="4.9" fill="#b91eb9"/><circle cx="1360.5" cy="265.0" r="4.9" fill="#b1b1b9"/><circle cx="1359.5" cy="275.4" r="4.9" fill="#acacba"/><circle cx="1358.7" cy="285.0" r="4.9" fill="#a8a8ba"/><circle cx="1357.8" cy="294.0" r="4.9" fill="#a4a4bb"/><circle cx="1357.0" cy="303.0" r="4.9" fill="#a0a0bb"/><circle cx="1355.9" cy="315.0" r="4.9" fill="#9b9bbc"/><circle cx="1354.8" cy="327.5" r="4.9" fill="#9595bc"/><circle cx="1353.6" cy="341.0" r="4.9" fill="#8f8fbd"/><circle cx="1352.2" cy="356.0" r="4.9" fill="#8989be"/><circle cx="1350.9" cy="371.0" r="4.9" fill="#8282bf"/><circle cx="1349.9" cy="382.5" r="4.9" fill="#7d7dbf"/><circle cx="1348.1" cy="401.7" r="4.9" fill="#7474c0"/><circle cx="1346.7" cy="417.0" r="4.9" fill="#6e6ec1"/><circle cx="1345.0" cy="436.7" r="4.9" fill="#6565c2"/><circle cx="1343.3" cy="454.6" r="4.9" fill="#5d5dc3"/><circle cx="1341.5" cy="474.6" r="4.9" fill="#5454c4"/><circle cx="1339.3" cy="499.0" r="4.9" fill="#4949c5"/><circle cx="1336.9" cy="526.0" r="4.9" fill="#3d3dc6"/><circle cx="1334.5" cy="552.5" r="4.9" fill="#3232c8"/></g>
<circle cx="1347.8" cy="227.5" r="5" fill="#000"/>
<circle cx="1362" cy="248" r="5" fill="#fff" stroke="#000" stroke-width="1"/>
<text x="1647.8" y="678.4" font-size="16" fill="#f4f4f4" textLength="189.2" lengthAdjust="spacingAndGlyphs">RGB Triplet: 171, 180, 171</text>
<rect x="0" y="946" width="1920" height="63" fill="#2c2c2c"/>
<rect x="1.5" y="947.5" width="44" height="62" rx="4" fill="url(#gBtn)"/>
<circle cx="23.5" cy="955.5" r="7" fill="url(#gUp)"/>
<path d="M19.5,957.5 L23.5,953 L27.5,957.5 Z" fill="#111"/>
<rect x="6.5" y="973.5" width="35" height="30" rx="3" fill="#00ee00" stroke="#0a7a0a" stroke-width="1"/>
<rect x="52.0" y="947" width="75" height="62" rx="4" fill="url(#gBtnSel)"/>
<rect x="57.5" y="952.5" width="65" height="36" rx="3" fill="#b6c3b6" stroke="#d8d8d8" stroke-width="1"/>
<text x="89.5" y="1003.0" font-size="12" fill="#ffffff" textLength="15.5" lengthAdjust="spacingAndGlyphs" text-anchor="middle" font-weight="bold">5%</text>
<rect x="129.2" y="947" width="75" height="62" rx="4" fill="url(#gBtn)"/>
<rect x="134.7" y="952.5" width="65" height="36" rx="3" fill="#a9c3a9" stroke="#4e8a4e" stroke-width="1"/>
<text x="166.7" y="1003.0" font-size="12.5" fill="#262626" textLength="21.0" lengthAdjust="spacingAndGlyphs" text-anchor="middle" stroke="#262626" stroke-width="0.25">10%</text>
<rect x="206.4" y="947" width="75" height="62" rx="4" fill="url(#gBtn)"/>
<rect x="211.9" y="952.5" width="65" height="36" rx="3" fill="#9fc39f" stroke="#4e8a4e" stroke-width="1"/>
<text x="243.9" y="1003.0" font-size="12.5" fill="#262626" textLength="21.0" lengthAdjust="spacingAndGlyphs" text-anchor="middle" stroke="#262626" stroke-width="0.25">15%</text>
<rect x="283.6" y="947" width="75" height="62" rx="4" fill="url(#gBtn)"/>
<rect x="289.1" y="952.5" width="65" height="36" rx="3" fill="#96c296" stroke="#4e8a4e" stroke-width="1"/>
<text x="321.1" y="1003.0" font-size="12.5" fill="#262626" textLength="21.0" lengthAdjust="spacingAndGlyphs" text-anchor="middle" stroke="#262626" stroke-width="0.25">20%</text>
<rect x="360.8" y="947" width="75" height="62" rx="4" fill="url(#gBtn)"/>
<rect x="366.3" y="952.5" width="65" height="36" rx="3" fill="#8dc28d" stroke="#4e8a4e" stroke-width="1"/>
<text x="398.3" y="1003.0" font-size="12.5" fill="#262626" textLength="21.0" lengthAdjust="spacingAndGlyphs" text-anchor="middle" stroke="#262626" stroke-width="0.25">25%</text>
<rect x="438.0" y="947" width="75" height="62" rx="4" fill="url(#gBtn)"/>
<rect x="443.5" y="952.5" width="65" height="36" rx="3" fill="#85c185" stroke="#4e8a4e" stroke-width="1"/>
<text x="475.5" y="1003.0" font-size="12.5" fill="#262626" textLength="21.0" lengthAdjust="spacingAndGlyphs" text-anchor="middle" stroke="#262626" stroke-width="0.25">30%</text>
<rect x="515.2" y="947" width="75" height="62" rx="4" fill="url(#gBtn)"/>
<rect x="520.7" y="952.5" width="65" height="36" rx="3" fill="#7dc07d" stroke="#4e8a4e" stroke-width="1"/>
<text x="552.7" y="1003.0" font-size="12.5" fill="#262626" textLength="21.0" lengthAdjust="spacingAndGlyphs" text-anchor="middle" stroke="#262626" stroke-width="0.25">35%</text>
<rect x="592.4" y="947" width="75" height="62" rx="4" fill="url(#gBtn)"/>
<rect x="597.9" y="952.5" width="65" height="36" rx="3" fill="#76bf76" stroke="#4e8a4e" stroke-width="1"/>
<text x="629.9" y="1003.0" font-size="12.5" fill="#262626" textLength="21.0" lengthAdjust="spacingAndGlyphs" text-anchor="middle" stroke="#262626" stroke-width="0.25">40%</text>
<rect x="669.6" y="947" width="75" height="62" rx="4" fill="url(#gBtn)"/>
<rect x="675.1" y="952.5" width="65" height="36" rx="3" fill="#6ebf6e" stroke="#4e8a4e" stroke-width="1"/>
<text x="707.1" y="1003.0" font-size="12.5" fill="#262626" textLength="21.0" lengthAdjust="spacingAndGlyphs" text-anchor="middle" stroke="#262626" stroke-width="0.25">45%</text>
<rect x="746.8" y="947" width="75" height="62" rx="4" fill="url(#gBtn)"/>
<rect x="752.3" y="952.5" width="65" height="36" rx="3" fill="#67be67" stroke="#4e8a4e" stroke-width="1"/>
<text x="784.3" y="1003.0" font-size="12.5" fill="#262626" textLength="21.0" lengthAdjust="spacingAndGlyphs" text-anchor="middle" stroke="#262626" stroke-width="0.25">50%</text>
<rect x="824.0" y="947" width="75" height="62" rx="4" fill="url(#gBtn)"/>
<rect x="829.5" y="952.5" width="65" height="36" rx="3" fill="#5ebd5e" stroke="#4e8a4e" stroke-width="1"/>
<text x="861.5" y="1003.0" font-size="12.5" fill="#262626" textLength="21.0" lengthAdjust="spacingAndGlyphs" text-anchor="middle" stroke="#262626" stroke-width="0.25">55%</text>
<rect x="901.2" y="947" width="75" height="62" rx="4" fill="url(#gBtn)"/>
<rect x="906.7" y="952.5" width="65" height="36" rx="3" fill="#56bc56" stroke="#4e8a4e" stroke-width="1"/>
<text x="938.7" y="1003.0" font-size="12.5" fill="#262626" textLength="21.0" lengthAdjust="spacingAndGlyphs" text-anchor="middle" stroke="#262626" stroke-width="0.25">60%</text>
<rect x="978.4" y="947" width="75" height="62" rx="4" fill="url(#gBtn)"/>
<rect x="983.9" y="952.5" width="65" height="36" rx="3" fill="#4fbb4f" stroke="#4e8a4e" stroke-width="1"/>
<text x="1015.9" y="1003.0" font-size="12.5" fill="#262626" textLength="21.0" lengthAdjust="spacingAndGlyphs" text-anchor="middle" stroke="#262626" stroke-width="0.25">65%</text>
<rect x="1055.6" y="947" width="75" height="62" rx="4" fill="url(#gBtn)"/>
<rect x="1061.1" y="952.5" width="65" height="36" rx="3" fill="#48ba48" stroke="#4e8a4e" stroke-width="1"/>
<text x="1093.1" y="1003.0" font-size="12.5" fill="#262626" textLength="21.0" lengthAdjust="spacingAndGlyphs" text-anchor="middle" stroke="#262626" stroke-width="0.25">70%</text>
<rect x="1132.8" y="947" width="75" height="62" rx="4" fill="url(#gBtn)"/>
<rect x="1138.3" y="952.5" width="65" height="36" rx="3" fill="#40b940" stroke="#4e8a4e" stroke-width="1"/>
<text x="1170.3" y="1003.0" font-size="12.5" fill="#262626" textLength="21.0" lengthAdjust="spacingAndGlyphs" text-anchor="middle" stroke="#262626" stroke-width="0.25">75%</text>
<rect x="1210.0" y="947" width="75" height="62" rx="4" fill="url(#gBtn)"/>
<rect x="1215.5" y="952.5" width="65" height="36" rx="3" fill="#39b939" stroke="#4e8a4e" stroke-width="1"/>
<text x="1247.5" y="1003.0" font-size="12.5" fill="#262626" textLength="21.0" lengthAdjust="spacingAndGlyphs" text-anchor="middle" stroke="#262626" stroke-width="0.25">80%</text>
<rect x="1287.2" y="947" width="75" height="62" rx="4" fill="url(#gBtn)"/>
<rect x="1292.7" y="952.5" width="65" height="36" rx="3" fill="#2fb82f" stroke="#4e8a4e" stroke-width="1"/>
<text x="1324.7" y="1003.0" font-size="12.5" fill="#262626" textLength="21.0" lengthAdjust="spacingAndGlyphs" text-anchor="middle" stroke="#262626" stroke-width="0.25">85%</text>
<rect x="1364.4" y="947" width="75" height="62" rx="4" fill="url(#gBtn)"/>
<rect x="1369.9" y="952.5" width="65" height="36" rx="3" fill="#28b828" stroke="#4e8a4e" stroke-width="1"/>
<text x="1401.9" y="1003.0" font-size="12.5" fill="#262626" textLength="21.0" lengthAdjust="spacingAndGlyphs" text-anchor="middle" stroke="#262626" stroke-width="0.25">90%</text>
<rect x="1441.6" y="947" width="75" height="62" rx="4" fill="url(#gBtn)"/>
<rect x="1447.1" y="952.5" width="65" height="36" rx="3" fill="#20b820" stroke="#4e8a4e" stroke-width="1"/>
<text x="1479.1" y="1003.0" font-size="12.5" fill="#262626" textLength="21.0" lengthAdjust="spacingAndGlyphs" text-anchor="middle" stroke="#262626" stroke-width="0.25">95%</text>
<rect x="1518.8" y="947" width="75" height="62" rx="4" fill="url(#gBtn)"/>
<rect x="1524.3" y="952.5" width="65" height="36" rx="3" fill="#00b800" stroke="#4e8a4e" stroke-width="1"/>
<text x="1556.3" y="1003.0" font-size="12.5" fill="#262626" textLength="26.0" lengthAdjust="spacingAndGlyphs" text-anchor="middle" stroke="#262626" stroke-width="0.25">100%</text>
<rect x="1597" y="947" width="47" height="18.5" rx="3" fill="url(#gBtn)"/>
<circle cx="1621.5" cy="955.5" r="7" fill="url(#gUp)"/>
<path d="M1617.5,957.5 L1621.5,953 L1625.5,957.5 Z" fill="#111"/>
<rect x="1597" y="966" width="47" height="43" rx="3" fill="url(#gBtn)"/>
<rect x="1606" y="972.5" width="29" height="29" rx="4" fill="url(#gStopIn)" stroke="#333" stroke-width="2.5"/>
<rect x="1614" y="980.5" width="13" height="13" fill="#000"/>
<rect x="1614" y="980.5" width="13" height="6" fill="#1e1e1e"/>
<rect x="1646" y="947" width="45" height="30" fill="url(#gIco)"/>
<circle cx="1668.5" cy="962" r="9.5" fill="url(#gIcoC)"/>
<rect x="1692" y="947" width="44" height="30" fill="url(#gIco)"/>
<circle cx="1714.0" cy="962" r="9.5" fill="url(#gIcoC)"/>
<rect x="1737" y="947" width="44" height="30" fill="url(#gIco)"/>
<circle cx="1759.0" cy="962" r="9.5" fill="url(#gIcoC)"/>
<rect x="1782" y="947" width="44" height="30" fill="url(#gIco)"/>
<circle cx="1804.0" cy="962" r="9.5" fill="url(#gIcoC)"/>
<rect x="1827" y="947" width="44" height="30" fill="url(#gIcoDark)"/>
<circle cx="1849.0" cy="962" r="9.5" fill="#2c2c2c"/>
<rect x="1872" y="947" width="47" height="30" fill="url(#gIcoDark)"/>
<circle cx="1895.5" cy="962" r="9.5" fill="#2c2c2c"/>
<rect x="1664" y="957.5" width="9" height="9" fill="#222"/>
<path d="M1711,956.5 L1719.5,962 L1711,967.5 Z" fill="#222"/>
<path d="M1757.2,957.5 H1754.8 V967.5 H1757.2 M1763.8,957.5 H1766.2 V967.5 H1763.8" fill="none" stroke="#222" stroke-width="2"/>
<rect x="1757.9" y="961.2" width="1.6" height="1.6" fill="#222"/><rect x="1761.5" y="961.2" width="1.6" height="1.6" fill="#222"/>
<ellipse cx="1801.6" cy="962" rx="3.4" ry="2.7" fill="none" stroke="#222" stroke-width="1.4"/><ellipse cx="1808.2" cy="962" rx="3.4" ry="2.7" fill="none" stroke="#222" stroke-width="1.4"/>
<path d="M1845.3,963.5 A5,5 0 0 1 1853.5,958" fill="none" stroke="#1a1a1a" stroke-width="2.2"/>
<path d="M1855,958.5 L1855.5,954.5 L1851,956.5 Z" fill="#1a1a1a" stroke="#1a1a1a" stroke-width="1"/>
<path d="M1854.7,960.5 A5,5 0 0 1 1846.5,966" fill="none" stroke="#1a1a1a" stroke-width="2.2"/>
<path d="M1845,965.5 L1844.5,969.5 L1849,967.5 Z" fill="#1a1a1a" stroke="#1a1a1a" stroke-width="1"/>
<path d="M1891,961 L1894.5,965.5 L1900.5,957.5" fill="none" stroke="#111" stroke-width="2.6"/>
<rect x="1646" y="978" width="135" height="31" fill="url(#gBN)"/>
<rect x="1782" y="978" width="138" height="31" fill="url(#gBN)"/>
<circle cx="1676.5" cy="993.3" r="10" fill="url(#gIcoC)"/>
<path d="M1676,989 L1672,993.3 L1676,997.6 M1680.5,989 L1676.5,993.3 L1680.5,997.6" fill="none" stroke="#333" stroke-width="1.8"/>
<circle cx="1890" cy="993.3" r="10" fill="url(#gIcoC)"/>
<path d="M1886,989 L1890,993.3 L1886,997.6 M1890.5,989 L1894.5,993.3 L1890.5,997.6" fill="none" stroke="#333" stroke-width="1.8"/>
<text x="1703.0" y="1002.0" font-size="25" fill="#333333" textLength="50.0" lengthAdjust="spacingAndGlyphs" stroke="#333" stroke-width="0.8">Back</text>
<text x="1810.0" y="1002.0" font-size="25" fill="#333333" textLength="52.0" lengthAdjust="spacingAndGlyphs" stroke="#333" stroke-width="0.8">Next</text>
</svg></body></html>
